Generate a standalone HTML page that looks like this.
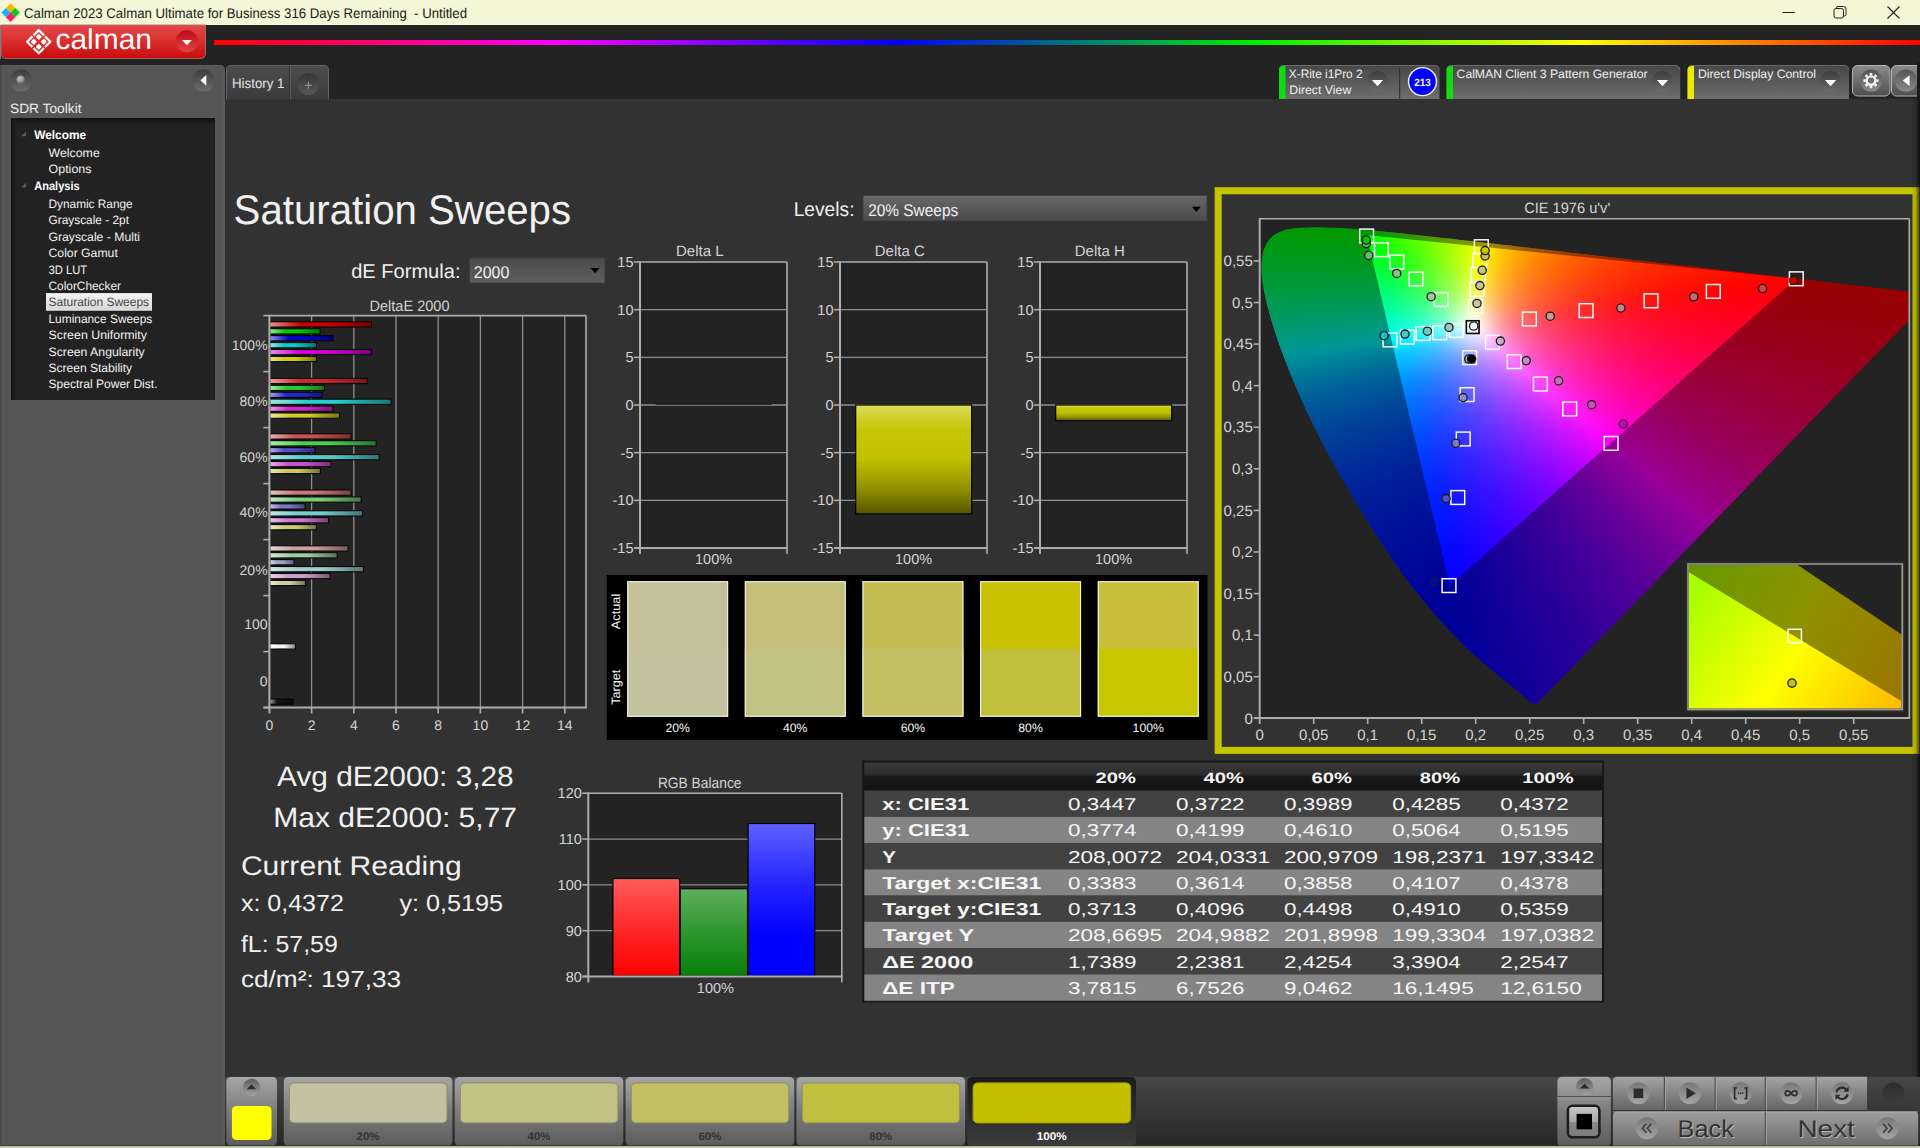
<!DOCTYPE html>
<html lang="en"><head><meta charset="utf-8"><title>Calman 2023 - Saturation Sweeps</title>
<style>html,body{margin:0;padding:0;background:#323232;overflow:hidden}body{width:1920px;height:1148px;font-family:"Liberation Sans",sans-serif}svg{display:block}</style></head>
<body>
<svg width="1920" height="1148" viewBox="0 0 1920 1148" font-family="'Liberation Sans', sans-serif" text-rendering="geometricPrecision"><defs><linearGradient id="gRed" x1="0" y1="0" x2="0" y2="1"><stop offset="0" stop-color="#e34848"/><stop offset="0.45" stop-color="#dc3030"/><stop offset="1" stop-color="#c90c0c"/></linearGradient><linearGradient id="gRedC" x1="0" y1="0" x2="0" y2="1"><stop offset="0" stop-color="#bd0a14"/><stop offset="1" stop-color="#e0444c"/></linearGradient><linearGradient id="gRain" x1="0" y1="0" x2="1" y2="0"><stop offset="0" stop-color="#ff0000"/><stop offset="0.2" stop-color="#ff00ff"/><stop offset="0.4" stop-color="#0000ff"/><stop offset="0.61" stop-color="#00f000"/><stop offset="0.8" stop-color="#ffff00"/><stop offset="1" stop-color="#ff0000"/></linearGradient><linearGradient id="gDkC" x1="0" y1="0" x2="0" y2="1"><stop offset="0" stop-color="#3d3d3d"/><stop offset="1" stop-color="#6c6c6c"/></linearGradient><radialGradient id="gDot" cx="0.4" cy="0.35" r="0.6"><stop offset="0" stop-color="#c4c4c4"/><stop offset="0.6" stop-color="#9a9a9a"/><stop offset="1" stop-color="#6a6a6a"/></radialGradient><linearGradient id="gTreeL" x1="0" y1="0" x2="1" y2="0"><stop offset="0" stop-color="#111"/><stop offset="1" stop-color="#222"/></linearGradient><linearGradient id="gTreeT" x1="0" y1="0" x2="0" y2="1"><stop offset="0" stop-color="#101010"/><stop offset="1" stop-color="#222"/></linearGradient><linearGradient id="gSel" x1="0" y1="0" x2="0" y2="1"><stop offset="0" stop-color="#f4f4f4"/><stop offset="1" stop-color="#d6d6d6"/></linearGradient><linearGradient id="gTab" x1="0" y1="0" x2="0" y2="1"><stop offset="0" stop-color="#4d4d4d"/><stop offset="1" stop-color="#3b3b3b"/></linearGradient><linearGradient id="gDkC2" x1="0" y1="0" x2="0" y2="1"><stop offset="0" stop-color="#353535"/><stop offset="1" stop-color="#585858"/></linearGradient><linearGradient id="gDev" x1="0" y1="0" x2="0" y2="1"><stop offset="0" stop-color="#474747"/><stop offset="1" stop-color="#6d6d6d"/></linearGradient><linearGradient id="gGear" x1="0" y1="0" x2="0" y2="1"><stop offset="0" stop-color="#8c8c8c"/><stop offset="1" stop-color="#4e4e4e"/></linearGradient><linearGradient id="gGearC" x1="0" y1="0" x2="0" y2="1"><stop offset="0" stop-color="#555"/><stop offset="1" stop-color="#8a8a8a"/></linearGradient><linearGradient id="gDD" x1="0" y1="0" x2="0" y2="1"><stop offset="0" stop-color="#4a4a4a"/><stop offset="1" stop-color="#5f5f5f"/></linearGradient><linearGradient id="gDD2" x1="0" y1="0" x2="0" y2="1"><stop offset="0" stop-color="#6a6a6a"/><stop offset="0.5" stop-color="#585858"/><stop offset="1" stop-color="#4b4b4b"/></linearGradient><linearGradient id="gBarH" x1="0" y1="0" x2="1" y2="0"><stop offset="0" stop-color="#fff" stop-opacity="0.55"/><stop offset="0.3" stop-color="#fff" stop-opacity="0"/><stop offset="0.55" stop-color="#000" stop-opacity="0"/><stop offset="1" stop-color="#000" stop-opacity="0.42"/></linearGradient><linearGradient id="gYBar" x1="0" y1="0" x2="0" y2="1"><stop offset="0" stop-color="#dcdc58"/><stop offset="0.22" stop-color="#c6c608"/><stop offset="0.5" stop-color="#c0c000"/><stop offset="0.78" stop-color="#8e8e00"/><stop offset="1" stop-color="#555400"/></linearGradient><clipPath id="cLoc"><polygon points="1536.41,704 1535.51,703.86 1534.64,703.77 1533.71,703.6 1532.64,703.21 1528.83,700.77 1524.01,696.88 1518.77,692.36 1513.7,688.08 1508.79,684.08 1503.9,680.08 1498.87,675.92 1493.56,671.44 1486.41,665.45 1478.86,659.11 1470.99,652.23 1462.93,644.59 1451.33,632.57 1439.01,618.96 1426.85,604.83 1415.75,591.27 1407.13,580.08 1399.24,569.18 1391.67,558.18 1383.98,546.71 1375.28,533.38 1366.58,519.57 1357.97,505.46 1349.52,491.24 1340.92,476.44 1332.39,461.4 1324.14,446.29 1316.36,431.26 1309.29,416.73 1302.59,402.17 1296.29,387.75 1290.44,373.67 1285.47,361.12 1280.82,348.74 1276.59,336.7 1272.85,325.12 1270.03,315.61 1267.52,306.38 1265.41,297.51 1263.75,289.04 1262.7,282.35 1261.92,275.92 1261.5,269.77 1261.55,263.92 1261.92,259.26 1262.57,254.79 1263.57,250.56 1265.02,246.66 1266.63,243.56 1268.55,240.65 1270.77,238.01 1273.28,235.7 1275.88,233.93 1278.76,232.42 1281.83,231.16 1284.99,230.11 1288.31,229.3 1291.78,228.76 1295.34,228.37 1298.92,228.05 1302.66,227.79 1306.46,227.64 1310.29,227.58 1314.11,227.54 1317.96,227.52 1321.8,227.55 1325.66,227.63 1329.55,227.73 1333.53,227.87 1337.54,228.04 1341.57,228.25 1345.64,228.49 1349.92,228.76 1354.23,229.06 1358.59,229.39 1362.99,229.74 1367.62,230.13 1372.31,230.55 1377.04,230.99 1381.83,231.45 1386.92,231.94 1392.06,232.46 1397.26,233 1402.54,233.55 1408.17,234.14 1413.88,234.75 1419.65,235.38 1425.5,236.02 1431.73,236.71 1438.04,237.42 1444.42,238.14 1450.89,238.87 1457.79,239.64 1464.78,240.43 1471.85,241.24 1479.01,242.05 1486.6,242.92 1494.28,243.8 1502.04,244.7 1509.9,245.61 1518.19,246.56 1526.57,247.53 1535.04,248.51 1543.59,249.5 1552.56,250.54 1561.61,251.58 1570.74,252.64 1579.93,253.7 1589.45,254.79 1599.06,255.9 1608.71,257 1618.38,258.12 1628.23,259.26 1638.13,260.41 1648.03,261.56 1657.87,262.7 1667.5,263.81 1677.08,264.92 1686.64,266.02 1696.16,267.12 1705.55,268.2 1714.93,269.29 1724.24,270.36 1733.42,271.41 1741.78,272.37 1749.88,273.3 1758.19,274.24 1767.17,275.28 1780.25,276.79 1794.53,278.44 1808.94,280.12 1822.4,281.68 1832.81,282.88 1842.79,284.02 1852.37,285.13 1861.58,286.19 1869.2,287.07 1876.57,287.92 1883.62,288.74 1890.26,289.51 1895.37,290.09 1900.25,290.65 1904.85,291.17 1909.14,291.67 1912.16,292.01 1914.98,292.34 1917.68,292.65 1920.36,292.97 1922.95,293.27 1925.56,293.57 1928.01,293.85 1930.11,294.09 1931.18,294.22 1932.11,294.33 1932.98,294.43 1933.89,294.53"/></clipPath><clipPath id="cPlot"><rect x="1260.7" y="219.5" width="647.8" height="497.5"/></clipPath><filter id="fB" x="-5%" y="-5%" width="110%" height="110%" color-interpolation-filters="sRGB"><feGaussianBlur stdDeviation="3.6"/></filter><linearGradient id="gIns" x1="1688" y1="600" x2="1880" y2="740" gradientUnits="userSpaceOnUse"><stop offset="0" stop-color="#a8ff00"/><stop offset="0.5" stop-color="#ffff00"/><stop offset="1" stop-color="#ffb800"/></linearGradient><clipPath id="cIns"><rect x="1688.8" y="565" width="212.8" height="143.6"/></clipPath><linearGradient id="gInsD" x1="1690" y1="566" x2="1900" y2="690" gradientUnits="userSpaceOnUse"><stop offset="0" stop-color="#669a00"/><stop offset="0.5" stop-color="#8e9200"/><stop offset="1" stop-color="#9a7600"/></linearGradient><linearGradient id="gR" x1="0" y1="0" x2="0" y2="1"><stop offset="0" stop-color="#ff5c5c"/><stop offset="0.5" stop-color="#ff2a2a"/><stop offset="1" stop-color="#ff0000"/></linearGradient><linearGradient id="gG" x1="0" y1="0" x2="0" y2="1"><stop offset="0" stop-color="#5eb05e"/><stop offset="0.5" stop-color="#2e962e"/><stop offset="1" stop-color="#088008"/></linearGradient><linearGradient id="gB" x1="0" y1="0" x2="0" y2="1"><stop offset="0" stop-color="#6060ff"/><stop offset="0.4" stop-color="#2424ff"/><stop offset="0.75" stop-color="#0000ff"/><stop offset="1" stop-color="#0000ff"/></linearGradient><linearGradient id="gTH" x1="0" y1="0" x2="0" y2="1"><stop offset="0" stop-color="#3c3c3c"/><stop offset="0.42" stop-color="#2c2c2c"/><stop offset="0.5" stop-color="#1a1a1a"/><stop offset="1" stop-color="#121212"/></linearGradient><linearGradient id="gBot" x1="0" y1="0" x2="0" y2="1"><stop offset="0" stop-color="#474747"/><stop offset="1" stop-color="#262626"/></linearGradient><linearGradient id="gBtn" x1="0" y1="0" x2="0" y2="1"><stop offset="0" stop-color="#a6a6a6"/><stop offset="0.5" stop-color="#7c7c7c"/><stop offset="1" stop-color="#5c5c5c"/></linearGradient><linearGradient id="gBtnS" x1="0" y1="0" x2="0" y2="1"><stop offset="0" stop-color="#1b1b1b"/><stop offset="1" stop-color="#3b3b3b"/></linearGradient><linearGradient id="gCup" x1="0" y1="0" x2="0" y2="1"><stop offset="0" stop-color="#5e5e5e"/><stop offset="1" stop-color="#a0a0a0"/></linearGradient><linearGradient id="gStop" x1="0" y1="0" x2="0" y2="1"><stop offset="0" stop-color="#c8c8c8"/><stop offset="0.5" stop-color="#a8a8a8"/><stop offset="0.52" stop-color="#8a8a8a"/><stop offset="1" stop-color="#7a7a7a"/></linearGradient><linearGradient id="gBtn2" x1="0" y1="0" x2="0" y2="1"><stop offset="0" stop-color="#a4a4a4"/><stop offset="1" stop-color="#646464"/></linearGradient><linearGradient id="gIc" x1="0" y1="0" x2="0" y2="1"><stop offset="0" stop-color="#787878"/><stop offset="1" stop-color="#a4a4a4"/></linearGradient><linearGradient id="gDkBtn" x1="0" y1="0" x2="0" y2="1"><stop offset="0" stop-color="#2e2e2e"/><stop offset="1" stop-color="#3c3c3c"/></linearGradient><linearGradient id="gNav" x1="0" y1="0" x2="0" y2="1"><stop offset="0" stop-color="#9e9e9e"/><stop offset="1" stop-color="#6c6c6c"/></linearGradient><linearGradient id="gEdge" x1="0" y1="0" x2="1" y2="0"><stop offset="0" stop-color="#000" stop-opacity="0"/><stop offset="0.5" stop-color="#000" stop-opacity="0.12"/><stop offset="1" stop-color="#000" stop-opacity="0.7"/></linearGradient></defs>
<rect x="0" y="0" width="1920" height="1148" fill="#323232"/>
<rect x="0" y="25" width="1920" height="74" fill="#232323"/>
<rect x="0" y="0" width="1920" height="25" fill="#f3f6d7"/>
<path d="M10.6 3.4L15.2 8L10.6 12.6L6 8Z" fill="#ffb000" stroke="#ffd040" stroke-width="0.8" stroke-linejoin="round"/>
<path d="M6 8L10.6 12.6L6 17.2L1.4 12.6Z" fill="#18b0ff" stroke="#60d0ff" stroke-width="0.8" stroke-linejoin="round"/>
<path d="M15.2 8L19.8 12.6L15.2 17.2L10.6 12.6Z" fill="#10c818" stroke="#50e050" stroke-width="0.8" stroke-linejoin="round"/>
<path d="M10.6 12.6L15.2 17.2L10.6 21.8L6 17.2Z" fill="#f02060" stroke="#ff5080" stroke-width="0.8" stroke-linejoin="round"/>
<text x="24" y="17.8" font-size="14" fill="#1a1a1a" textLength="443" lengthAdjust="spacingAndGlyphs" xml:space="preserve">Calman 2023 Calman Ultimate for Business 316 Days Remaining  - Untitled</text>
<line x1="1782.5" y1="12.5" x2="1795" y2="12.5" stroke="#222" stroke-width="1"/>
<rect x="1834" y="8.5" width="9.5" height="9.5" rx="2" fill="none" stroke="#222" stroke-width="1"/>
<path d="M1836.5 8.5V8Q1836.5 6.5 1838 6.5H1843.5Q1846 6.5 1846 9V14.5Q1846 16 1844.5 16H1843.5" fill="none" stroke="#222" stroke-width="1"/>
<path d="M1887.5 6.5L1899.5 18.5M1899.5 6.5L1887.5 18.5" stroke="#222" stroke-width="1.1" fill="none"/>
<path d="M1 25H205.500V53Q205.500 58.500 200 58.500H6.500Q1 58.500 1 53Z" fill="url(#gRed)" stroke="#a07070" stroke-width="0.9"/>
<rect x="0" y="25" width="0.8" height="34" fill="#8a8a8a"/>
<g transform="translate(38.750 41.700) rotate(45)"><g fill="#fff"><rect x="-5.700" y="-5.700" width="4.500" height="4.500" rx="0.700"/><rect x="1.300" y="-5.700" width="4.500" height="4.500" rx="0.700"/><rect x="-5.700" y="1.300" width="4.500" height="4.500" rx="0.700"/><rect x="1.300" y="1.300" width="4.500" height="4.500" rx="0.700"/></g><path d="M-8.200 -0.700V-8.200H-0.700M0.700 -8.200H8.200V-0.700M8.200 0.700V8.200H0.700M-0.700 8.200H-8.200V0.700" fill="none" stroke="#fff" stroke-width="2.300" stroke-linejoin="round"/></g>
<text x="55.5" y="48.8" font-size="29" fill="#fff" textLength="96.5" lengthAdjust="spacingAndGlyphs">calman</text>
<circle cx="186.900" cy="41.300" r="11" fill="url(#gRedC)"/>
<path d="M181.900 40H191.900L186.900 45.300Z" fill="#fff"/>
<rect x="214" y="40" width="1706" height="5" fill="url(#gRain)"/>
<path d="M0 65H219.500Q225 65 225 70.500V1146H0Z" fill="#555555"/>
<rect x="223" y="72" width="2" height="1074" fill="#5a5a5a"/>
<path d="M0 65.500H219.500Q224.500 65.500 224.500 70.500" fill="none" stroke="#5d5d5d" stroke-width="1"/>
<rect x="0" y="65" width="1.5" height="1081" fill="#474747"/>
<circle cx="21.200" cy="80.600" r="11" fill="url(#gDkC)"/>
<circle cx="20.700" cy="79.700" r="4.300" fill="url(#gDot)"/>
<circle cx="203.400" cy="80.600" r="11" fill="url(#gDkC)"/>
<path d="M206.300 75V85.700L200.400 80.350Z" fill="#fff"/>
<text x="10" y="113" font-size="13.6" fill="#eee" textLength="71.5" lengthAdjust="spacingAndGlyphs">SDR Toolkit</text>
<rect x="11" y="118" width="204" height="282" fill="#222"/>
<rect x="11" y="118" width="204" height="7" fill="url(#gTreeT)"/>
<rect x="11" y="118" width="6" height="282" fill="url(#gTreeL)" opacity="0.8"/>
<text x="34.2" y="138.6" font-size="12.2" fill="#fff" font-weight="bold" textLength="52" lengthAdjust="spacingAndGlyphs">Welcome</text>
<path d="M26 131.4V136.2H21.2Z" fill="#5a5a5a"/>
<text x="48.5" y="156.7" font-size="12.2" fill="#f2f2f2" textLength="51.3" lengthAdjust="spacingAndGlyphs">Welcome</text>
<text x="48.5" y="173.2" font-size="12.2" fill="#f2f2f2" textLength="43" lengthAdjust="spacingAndGlyphs">Options</text>
<text x="34.2" y="189.9" font-size="12.2" fill="#fff" font-weight="bold" textLength="45.5" lengthAdjust="spacingAndGlyphs">Analysis</text>
<path d="M26 182.7V187.5H21.2Z" fill="#5a5a5a"/>
<text x="48.5" y="207.7" font-size="12.2" fill="#f2f2f2" textLength="84.2" lengthAdjust="spacingAndGlyphs">Dynamic Range</text>
<text x="48.5" y="224.2" font-size="12.2" fill="#f2f2f2" textLength="80.5" lengthAdjust="spacingAndGlyphs">Grayscale - 2pt</text>
<text x="48.5" y="240.8" font-size="12.2" fill="#f2f2f2" textLength="91.5" lengthAdjust="spacingAndGlyphs">Grayscale - Multi</text>
<text x="48.5" y="257" font-size="12.2" fill="#f2f2f2" textLength="69.3" lengthAdjust="spacingAndGlyphs">Color Gamut</text>
<text x="48.5" y="273.7" font-size="12.2" fill="#f2f2f2" textLength="38.6" lengthAdjust="spacingAndGlyphs">3D LUT</text>
<text x="48.5" y="290.4" font-size="12.2" fill="#f2f2f2" textLength="72.5" lengthAdjust="spacingAndGlyphs">ColorChecker</text>
<rect x="46.4" y="293.6" width="105.2" height="16.6" fill="url(#gSel)" stroke="#fafafa" stroke-width="0.8"/>
<text x="48.5" y="306.4" font-size="12.2" fill="#4a4a4a" textLength="100.6" lengthAdjust="spacingAndGlyphs">Saturation Sweeps</text>
<text x="48.5" y="322.9" font-size="12.2" fill="#f2f2f2" textLength="103.8" lengthAdjust="spacingAndGlyphs">Luminance Sweeps</text>
<text x="48.5" y="339.2" font-size="12.2" fill="#f2f2f2" textLength="98.5" lengthAdjust="spacingAndGlyphs">Screen Uniformity</text>
<text x="48.5" y="355.9" font-size="12.2" fill="#f2f2f2" textLength="96.2" lengthAdjust="spacingAndGlyphs">Screen Angularity</text>
<text x="48.5" y="371.7" font-size="12.2" fill="#f2f2f2" textLength="83.6" lengthAdjust="spacingAndGlyphs">Screen Stability</text>
<text x="48.5" y="388" font-size="12.2" fill="#f2f2f2" textLength="109" lengthAdjust="spacingAndGlyphs">Spectral Power Dist.</text>
<path d="M226.500 99.400V70Q226.500 65.500 231 65.500H324Q328.500 65.500 328.500 70V99.400" fill="url(#gTab)" stroke="#646464" stroke-width="1"/>
<line x1="290.5" y1="66" x2="290.5" y2="99" stroke="#5e5e5e" stroke-width="1"/>
<line x1="289.5" y1="66" x2="289.5" y2="99" stroke="#333" stroke-width="1"/>
<text x="232" y="88.2" font-size="13.8" fill="#e4e4e4" textLength="52.5" lengthAdjust="spacingAndGlyphs">History 1</text>
<circle cx="308.400" cy="84" r="11" fill="url(#gDkC2)"/>
<path d="M305 85.300H312M308.500 81.800V88.800" stroke="#9a9a9a" stroke-width="1" fill="none"/>
<path d="M1279 99V70Q1279 65 1284 65H1434.5Q1439.5 65 1439.5 70V99Z" fill="url(#gDev)"/>
<path d="M1279.5 70Q1279.5 65.500 1284 65.500H1434.5Q1439 65.500 1439 70" fill="none" stroke="#6a6a6a" stroke-width="1"/>
<path d="M1279 99V70Q1279 66 1283.5 66H1285.5V99Z" fill="#0fdc0f"/>
<text x="1288.8" y="77.8" font-size="12.2" fill="#f0f0f0" textLength="73.8" lengthAdjust="spacingAndGlyphs">X-Rite i1Pro 2</text>
<text x="1289.3" y="94.4" font-size="12.2" fill="#f0f0f0" textLength="62" lengthAdjust="spacingAndGlyphs">Direct View</text>
<circle cx="1377.5" cy="81.6" r="10.600" fill="url(#gDkC)"/>
<path d="M1371.9 79.9H1383.1L1377.5 86.2Z" fill="#fff"/>
<line x1="1399.6" y1="68" x2="1399.6" y2="99" stroke="#333" stroke-width="1.2"/>
<circle cx="1422.500" cy="81.600" r="14" fill="#0000ff" stroke="#f4f4f4" stroke-width="1.4"/>
<text x="1422.5" y="85.6" font-size="10.5" fill="#fff" text-anchor="middle" font-weight="bold" textLength="16.5" lengthAdjust="spacingAndGlyphs">213</text>
<path d="M1446.5 99V70Q1446.5 65 1451.5 65H1675.3Q1680.3 65 1680.3 70V99Z" fill="url(#gDev)"/>
<path d="M1447 70Q1447 65.500 1451.5 65.500H1675.3Q1679.8 65.500 1679.8 70" fill="none" stroke="#6a6a6a" stroke-width="1"/>
<path d="M1446.5 99V70Q1446.5 66 1451 66H1453V99Z" fill="#0fdc0f"/>
<text x="1456.6" y="77.8" font-size="12.2" fill="#f0f0f0" textLength="190.9" lengthAdjust="spacingAndGlyphs">CalMAN Client 3 Pattern Generator</text>
<circle cx="1662.5" cy="81.6" r="10.600" fill="url(#gDkC)"/>
<path d="M1656.9 79.9H1668.1L1662.5 86.2Z" fill="#fff"/>
<path d="M1687.5 99V70Q1687.5 65 1692.5 65H1844Q1849 65 1849 70V99Z" fill="url(#gDev)"/>
<path d="M1688 70Q1688 65.500 1692.5 65.500H1844Q1848.5 65.500 1848.5 70" fill="none" stroke="#6a6a6a" stroke-width="1"/>
<path d="M1687.5 99V70Q1687.5 66 1692 66H1694V99Z" fill="#eaea00"/>
<text x="1698" y="77.8" font-size="12.2" fill="#f0f0f0" textLength="118" lengthAdjust="spacingAndGlyphs">Direct Display Control</text>
<circle cx="1830.6" cy="81.6" r="10.600" fill="url(#gDkC)"/>
<path d="M1825 79.9H1836.2L1830.6 86.2Z" fill="#fff"/>
<rect x="1852.500" y="65.500" width="37.500" height="30.500" rx="5" fill="url(#gGear)" stroke="#b4b4b4" stroke-width="1"/>
<rect x="1891.500" y="65.500" width="37.500" height="30.500" rx="5" fill="url(#gGear)" stroke="#b4b4b4" stroke-width="1"/>
<circle cx="1871" cy="80.600" r="11" fill="url(#gGearC)"/>
<circle cx="1906" cy="80.600" r="11" fill="url(#gGearC)"/>
<g transform="translate(1871 80.600)" fill="none" stroke="#f4f4f4"><circle r="4.300" stroke-width="2.200"/><line x1="0" y1="-5.200" x2="0" y2="-7.600" stroke-width="2.600" transform="rotate(0)"/><line x1="0" y1="-5.200" x2="0" y2="-7.600" stroke-width="2.600" transform="rotate(45)"/><line x1="0" y1="-5.200" x2="0" y2="-7.600" stroke-width="2.600" transform="rotate(90)"/><line x1="0" y1="-5.200" x2="0" y2="-7.600" stroke-width="2.600" transform="rotate(135)"/><line x1="0" y1="-5.200" x2="0" y2="-7.600" stroke-width="2.600" transform="rotate(180)"/><line x1="0" y1="-5.200" x2="0" y2="-7.600" stroke-width="2.600" transform="rotate(225)"/><line x1="0" y1="-5.200" x2="0" y2="-7.600" stroke-width="2.600" transform="rotate(270)"/><line x1="0" y1="-5.200" x2="0" y2="-7.600" stroke-width="2.600" transform="rotate(315)"/></g>
<path d="M1909.600 75.200V86L1902.800 80.600Z" fill="#fff"/>
<text x="233.6" y="223.8" font-size="41.5" fill="#f0f0f0" textLength="337.5" lengthAdjust="spacingAndGlyphs">Saturation Sweeps</text>
<text x="351.2" y="278" font-size="20" fill="#f0f0f0" textLength="109.3" lengthAdjust="spacingAndGlyphs">dE Formula:</text>
<rect x="469.500" y="258" width="135.500" height="25" fill="url(#gDD)" stroke="#3c3c3c" stroke-width="1"/>
<text x="473.8" y="278" font-size="17" fill="#f0f0f0" textLength="35.5" lengthAdjust="spacingAndGlyphs">2000</text>
<path d="M590.700 268H599.500L595.100 273.200Z" fill="#000"/>
<text x="793.7" y="216" font-size="20" fill="#f0f0f0" textLength="60.8" lengthAdjust="spacingAndGlyphs">Levels:</text>
<rect x="863" y="195.500" width="344" height="25.500" fill="url(#gDD2)" stroke="#3c3c3c" stroke-width="1"/>
<text x="868.2" y="216" font-size="17" fill="#f0f0f0" textLength="90" lengthAdjust="spacingAndGlyphs">20% Sweeps</text>
<path d="M1192 206.800H1200.800L1196.400 212Z" fill="#000"/>
<text x="409.5" y="310.5" font-size="15" fill="#d4d4d4" text-anchor="middle" textLength="80" lengthAdjust="spacingAndGlyphs">DeltaE 2000</text>
<rect x="269.4" y="315.6" width="316.6" height="392" fill="#232323"/>
<line x1="311.6" y1="315.6" x2="311.6" y2="707.6" stroke="#8e8e8e" stroke-width="1.3"/>
<line x1="311.6" y1="707.6" x2="311.6" y2="713.6" stroke="#adadad" stroke-width="1.6"/>
<text x="311.6" y="730" font-size="14" fill="#d4d4d4" text-anchor="middle">2</text>
<line x1="353.8" y1="315.6" x2="353.8" y2="707.6" stroke="#8e8e8e" stroke-width="1.3"/>
<line x1="353.8" y1="707.6" x2="353.8" y2="713.6" stroke="#adadad" stroke-width="1.6"/>
<text x="353.8" y="730" font-size="14" fill="#d4d4d4" text-anchor="middle">4</text>
<line x1="396" y1="315.6" x2="396" y2="707.6" stroke="#8e8e8e" stroke-width="1.3"/>
<line x1="396" y1="707.6" x2="396" y2="713.6" stroke="#adadad" stroke-width="1.6"/>
<text x="396" y="730" font-size="14" fill="#d4d4d4" text-anchor="middle">6</text>
<line x1="438.2" y1="315.6" x2="438.2" y2="707.6" stroke="#8e8e8e" stroke-width="1.3"/>
<line x1="438.2" y1="707.6" x2="438.2" y2="713.6" stroke="#adadad" stroke-width="1.6"/>
<text x="438.2" y="730" font-size="14" fill="#d4d4d4" text-anchor="middle">8</text>
<line x1="480.4" y1="315.6" x2="480.4" y2="707.6" stroke="#8e8e8e" stroke-width="1.3"/>
<line x1="480.4" y1="707.6" x2="480.4" y2="713.6" stroke="#adadad" stroke-width="1.6"/>
<text x="480.4" y="730" font-size="14" fill="#d4d4d4" text-anchor="middle">10</text>
<line x1="522.6" y1="315.6" x2="522.6" y2="707.6" stroke="#8e8e8e" stroke-width="1.3"/>
<line x1="522.6" y1="707.6" x2="522.6" y2="713.6" stroke="#adadad" stroke-width="1.6"/>
<text x="522.6" y="730" font-size="14" fill="#d4d4d4" text-anchor="middle">12</text>
<line x1="564.8" y1="315.6" x2="564.8" y2="707.6" stroke="#8e8e8e" stroke-width="1.3"/>
<line x1="564.8" y1="707.6" x2="564.8" y2="713.6" stroke="#adadad" stroke-width="1.6"/>
<text x="564.8" y="730" font-size="14" fill="#d4d4d4" text-anchor="middle">14</text>
<text x="269.4" y="730" font-size="14" fill="#d4d4d4" text-anchor="middle">0</text>
<rect x="270" y="321.8" width="101.4" height="5.2" fill="#cd0000" stroke="#050505" stroke-width="1.1"/>
<rect x="270.5" y="322.3" width="100.4" height="4.2" fill="url(#gBarH)"/>
<rect x="270" y="328.72" width="50" height="5.2" fill="#00cd00" stroke="#050505" stroke-width="1.1"/>
<rect x="270.5" y="329.22" width="49" height="4.2" fill="url(#gBarH)"/>
<rect x="270" y="335.64" width="63" height="5.2" fill="#0000cd" stroke="#050505" stroke-width="1.1"/>
<rect x="270.5" y="336.14" width="62" height="4.2" fill="url(#gBarH)"/>
<rect x="270" y="342.56" width="46.4" height="5.2" fill="#00cdcd" stroke="#050505" stroke-width="1.1"/>
<rect x="270.5" y="343.06" width="45.4" height="4.2" fill="url(#gBarH)"/>
<rect x="270" y="349.48" width="101.4" height="5.2" fill="#cd00cd" stroke="#050505" stroke-width="1.1"/>
<rect x="270.5" y="349.98" width="100.4" height="4.2" fill="url(#gBarH)"/>
<rect x="270" y="356.4" width="46.4" height="5.2" fill="#cdcd00" stroke="#050505" stroke-width="1.1"/>
<rect x="270.5" y="356.9" width="45.4" height="4.2" fill="url(#gBarH)"/>
<rect x="270" y="378.4" width="97.4" height="5.2" fill="#cd2828" stroke="#050505" stroke-width="1.1"/>
<rect x="270.5" y="378.9" width="96.4" height="4.2" fill="url(#gBarH)"/>
<rect x="270" y="385.32" width="54.4" height="5.2" fill="#28cd28" stroke="#050505" stroke-width="1.1"/>
<rect x="270.5" y="385.82" width="53.4" height="4.2" fill="url(#gBarH)"/>
<rect x="270" y="392.24" width="52" height="5.2" fill="#2828cd" stroke="#050505" stroke-width="1.1"/>
<rect x="270.5" y="392.74" width="51" height="4.2" fill="url(#gBarH)"/>
<rect x="270" y="399.16" width="121" height="5.2" fill="#28cdcd" stroke="#050505" stroke-width="1.1"/>
<rect x="270.5" y="399.66" width="120" height="4.2" fill="url(#gBarH)"/>
<rect x="270" y="406.08" width="63" height="5.2" fill="#cd28cd" stroke="#050505" stroke-width="1.1"/>
<rect x="270.5" y="406.58" width="62" height="4.2" fill="url(#gBarH)"/>
<rect x="270" y="413" width="69.6" height="5.2" fill="#cdcd28" stroke="#050505" stroke-width="1.1"/>
<rect x="270.5" y="413.5" width="68.6" height="4.2" fill="url(#gBarH)"/>
<rect x="270" y="433.8" width="81" height="5.2" fill="#cd5050" stroke="#050505" stroke-width="1.1"/>
<rect x="270.5" y="434.3" width="80" height="4.2" fill="url(#gBarH)"/>
<rect x="270" y="440.72" width="106" height="5.2" fill="#50cd50" stroke="#050505" stroke-width="1.1"/>
<rect x="270.5" y="441.22" width="105" height="4.2" fill="url(#gBarH)"/>
<rect x="270" y="447.64" width="45" height="5.2" fill="#5050cd" stroke="#050505" stroke-width="1.1"/>
<rect x="270.5" y="448.14" width="44" height="4.2" fill="url(#gBarH)"/>
<rect x="270" y="454.56" width="109" height="5.2" fill="#50cdcd" stroke="#050505" stroke-width="1.1"/>
<rect x="270.5" y="455.06" width="108" height="4.2" fill="url(#gBarH)"/>
<rect x="270" y="461.48" width="61" height="5.2" fill="#cd50cd" stroke="#050505" stroke-width="1.1"/>
<rect x="270.5" y="461.98" width="60" height="4.2" fill="url(#gBarH)"/>
<rect x="270" y="468.4" width="50.4" height="5.2" fill="#cdcd50" stroke="#050505" stroke-width="1.1"/>
<rect x="270.5" y="468.9" width="49.4" height="4.2" fill="url(#gBarH)"/>
<rect x="270" y="490" width="81" height="5.2" fill="#cd7878" stroke="#050505" stroke-width="1.1"/>
<rect x="270.5" y="490.5" width="80" height="4.2" fill="url(#gBarH)"/>
<rect x="270" y="496.92" width="91" height="5.2" fill="#78cd78" stroke="#050505" stroke-width="1.1"/>
<rect x="270.5" y="497.42" width="90" height="4.2" fill="url(#gBarH)"/>
<rect x="270" y="503.84" width="35" height="5.2" fill="#7878cd" stroke="#050505" stroke-width="1.1"/>
<rect x="270.5" y="504.34" width="34" height="4.2" fill="url(#gBarH)"/>
<rect x="270" y="510.76" width="92.4" height="5.2" fill="#78cdcd" stroke="#050505" stroke-width="1.1"/>
<rect x="270.5" y="511.26" width="91.4" height="4.2" fill="url(#gBarH)"/>
<rect x="270" y="517.68" width="58.6" height="5.2" fill="#cd78cd" stroke="#050505" stroke-width="1.1"/>
<rect x="270.5" y="518.18" width="57.6" height="4.2" fill="url(#gBarH)"/>
<rect x="270" y="524.6" width="46.4" height="5.2" fill="#cdcd78" stroke="#050505" stroke-width="1.1"/>
<rect x="270.5" y="525.1" width="45.4" height="4.2" fill="url(#gBarH)"/>
<rect x="270" y="545.8" width="78" height="5.2" fill="#cda0a0" stroke="#050505" stroke-width="1.1"/>
<rect x="270.5" y="546.3" width="77" height="4.2" fill="url(#gBarH)"/>
<rect x="270" y="552.72" width="67" height="5.2" fill="#a0cda0" stroke="#050505" stroke-width="1.1"/>
<rect x="270.5" y="553.22" width="66" height="4.2" fill="url(#gBarH)"/>
<rect x="270" y="559.64" width="24" height="5.2" fill="#a0a0cd" stroke="#050505" stroke-width="1.1"/>
<rect x="270.5" y="560.14" width="23" height="4.2" fill="url(#gBarH)"/>
<rect x="270" y="566.56" width="93.4" height="5.2" fill="#a0cdcd" stroke="#050505" stroke-width="1.1"/>
<rect x="270.5" y="567.06" width="92.4" height="4.2" fill="url(#gBarH)"/>
<rect x="270" y="573.48" width="60" height="5.2" fill="#cda0cd" stroke="#050505" stroke-width="1.1"/>
<rect x="270.5" y="573.98" width="59" height="4.2" fill="url(#gBarH)"/>
<rect x="270" y="580.4" width="35.5" height="5.2" fill="#cdcda0" stroke="#050505" stroke-width="1.1"/>
<rect x="270.5" y="580.9" width="34.5" height="4.2" fill="url(#gBarH)"/>
<rect x="270" y="643.8" width="25.4" height="5.2" fill="#f4f4f4" stroke="#050505" stroke-width="1.1"/>
<rect x="270.5" y="644.3" width="24.4" height="4.2" fill="url(#gBarH)"/>
<rect x="270" y="699" width="23" height="5.2" fill="#101010" stroke="#050505" stroke-width="1.1"/>
<rect x="270.5" y="699.5" width="22" height="4.2" fill="url(#gBarH)"/>
<line x1="269.4" y1="315.6" x2="586" y2="315.6" stroke="#adadad" stroke-width="1.6"/>
<line x1="586" y1="315.6" x2="586" y2="707.6" stroke="#adadad" stroke-width="1.6"/>
<line x1="269.4" y1="314.8" x2="269.4" y2="713.6" stroke="#adadad" stroke-width="2"/>
<line x1="263.4" y1="707.6" x2="586.8" y2="707.6" stroke="#adadad" stroke-width="2"/>
<line x1="263.4" y1="315.6" x2="269.4" y2="315.6" stroke="#adadad" stroke-width="1.6"/>
<line x1="263.4" y1="371.6" x2="269.4" y2="371.6" stroke="#adadad" stroke-width="1.6"/>
<line x1="263.4" y1="427.6" x2="269.4" y2="427.6" stroke="#adadad" stroke-width="1.6"/>
<line x1="263.4" y1="483.6" x2="269.4" y2="483.6" stroke="#adadad" stroke-width="1.6"/>
<line x1="263.4" y1="539.6" x2="269.4" y2="539.6" stroke="#adadad" stroke-width="1.6"/>
<line x1="263.4" y1="595.6" x2="269.4" y2="595.6" stroke="#adadad" stroke-width="1.6"/>
<line x1="263.4" y1="651.6" x2="269.4" y2="651.6" stroke="#adadad" stroke-width="1.6"/>
<line x1="263.4" y1="707.6" x2="269.4" y2="707.6" stroke="#adadad" stroke-width="1.6"/>
<text x="267.6" y="350" font-size="14" fill="#d4d4d4" text-anchor="end">100%</text>
<text x="267.6" y="405.6" font-size="14" fill="#d4d4d4" text-anchor="end">80%</text>
<text x="267.6" y="461.6" font-size="14" fill="#d4d4d4" text-anchor="end">60%</text>
<text x="267.6" y="517" font-size="14" fill="#d4d4d4" text-anchor="end">40%</text>
<text x="267.6" y="574.6" font-size="14" fill="#d4d4d4" text-anchor="end">20%</text>
<text x="267.6" y="629.4" font-size="14" fill="#d4d4d4" text-anchor="end">100</text>
<text x="267.6" y="686" font-size="14" fill="#d4d4d4" text-anchor="end">0</text>
<rect x="640" y="262" width="147" height="286" fill="#232323"/>
<line x1="634" y1="262" x2="640" y2="262" stroke="#adadad" stroke-width="1.6"/>
<text x="633.5" y="267" font-size="14.5" fill="#d4d4d4" text-anchor="end">15</text>
<line x1="640" y1="309.67" x2="787" y2="309.67" stroke="#8e8e8e" stroke-width="1.3"/>
<line x1="634" y1="309.67" x2="640" y2="309.67" stroke="#adadad" stroke-width="1.6"/>
<text x="633.5" y="314.67" font-size="14.5" fill="#d4d4d4" text-anchor="end">10</text>
<line x1="640" y1="357.33" x2="787" y2="357.33" stroke="#8e8e8e" stroke-width="1.3"/>
<line x1="634" y1="357.33" x2="640" y2="357.33" stroke="#adadad" stroke-width="1.6"/>
<text x="633.5" y="362.33" font-size="14.5" fill="#d4d4d4" text-anchor="end">5</text>
<line x1="640" y1="405" x2="787" y2="405" stroke="#8e8e8e" stroke-width="1.3"/>
<line x1="634" y1="405" x2="640" y2="405" stroke="#adadad" stroke-width="1.6"/>
<text x="633.5" y="410" font-size="14.5" fill="#d4d4d4" text-anchor="end">0</text>
<line x1="640" y1="452.67" x2="787" y2="452.67" stroke="#8e8e8e" stroke-width="1.3"/>
<line x1="634" y1="452.67" x2="640" y2="452.67" stroke="#adadad" stroke-width="1.6"/>
<text x="633.5" y="457.67" font-size="14.5" fill="#d4d4d4" text-anchor="end">-5</text>
<line x1="640" y1="500.33" x2="787" y2="500.33" stroke="#8e8e8e" stroke-width="1.3"/>
<line x1="634" y1="500.33" x2="640" y2="500.33" stroke="#adadad" stroke-width="1.6"/>
<text x="633.5" y="505.33" font-size="14.5" fill="#d4d4d4" text-anchor="end">-10</text>
<line x1="634" y1="548" x2="640" y2="548" stroke="#adadad" stroke-width="1.6"/>
<text x="633.5" y="553" font-size="14.5" fill="#d4d4d4" text-anchor="end">-15</text>
<line x1="655.7" y1="404.2" x2="771.7" y2="404.2" stroke="#000" stroke-width="0.9"/>
<line x1="640" y1="262" x2="787" y2="262" stroke="#adadad" stroke-width="1.6"/>
<line x1="787" y1="262" x2="787" y2="554" stroke="#adadad" stroke-width="1.6"/>
<line x1="640" y1="261.2" x2="640" y2="554" stroke="#adadad" stroke-width="2"/>
<line x1="634" y1="548" x2="787.8" y2="548" stroke="#adadad" stroke-width="2"/>
<text x="699.8" y="255.7" font-size="15" fill="#d4d4d4" text-anchor="middle">Delta L</text>
<text x="713.6" y="564.2" font-size="14.5" fill="#d4d4d4" text-anchor="middle">100%</text>
<rect x="840" y="262" width="147" height="286" fill="#232323"/>
<line x1="834" y1="262" x2="840" y2="262" stroke="#adadad" stroke-width="1.6"/>
<text x="833.5" y="267" font-size="14.5" fill="#d4d4d4" text-anchor="end">15</text>
<line x1="840" y1="309.67" x2="987" y2="309.67" stroke="#8e8e8e" stroke-width="1.3"/>
<line x1="834" y1="309.67" x2="840" y2="309.67" stroke="#adadad" stroke-width="1.6"/>
<text x="833.5" y="314.67" font-size="14.5" fill="#d4d4d4" text-anchor="end">10</text>
<line x1="840" y1="357.33" x2="987" y2="357.33" stroke="#8e8e8e" stroke-width="1.3"/>
<line x1="834" y1="357.33" x2="840" y2="357.33" stroke="#adadad" stroke-width="1.6"/>
<text x="833.5" y="362.33" font-size="14.5" fill="#d4d4d4" text-anchor="end">5</text>
<line x1="840" y1="405" x2="987" y2="405" stroke="#8e8e8e" stroke-width="1.3"/>
<line x1="834" y1="405" x2="840" y2="405" stroke="#adadad" stroke-width="1.6"/>
<text x="833.5" y="410" font-size="14.5" fill="#d4d4d4" text-anchor="end">0</text>
<line x1="840" y1="452.67" x2="987" y2="452.67" stroke="#8e8e8e" stroke-width="1.3"/>
<line x1="834" y1="452.67" x2="840" y2="452.67" stroke="#adadad" stroke-width="1.6"/>
<text x="833.5" y="457.67" font-size="14.5" fill="#d4d4d4" text-anchor="end">-5</text>
<line x1="840" y1="500.33" x2="987" y2="500.33" stroke="#8e8e8e" stroke-width="1.3"/>
<line x1="834" y1="500.33" x2="840" y2="500.33" stroke="#adadad" stroke-width="1.6"/>
<text x="833.5" y="505.33" font-size="14.5" fill="#d4d4d4" text-anchor="end">-10</text>
<line x1="834" y1="548" x2="840" y2="548" stroke="#adadad" stroke-width="1.6"/>
<text x="833.5" y="553" font-size="14.5" fill="#d4d4d4" text-anchor="end">-15</text>
<rect x="855.7" y="405" width="116" height="108.9" fill="url(#gYBar)" stroke="#000" stroke-width="1.2"/>
<line x1="840" y1="262" x2="987" y2="262" stroke="#adadad" stroke-width="1.6"/>
<line x1="987" y1="262" x2="987" y2="554" stroke="#adadad" stroke-width="1.6"/>
<line x1="840" y1="261.2" x2="840" y2="554" stroke="#adadad" stroke-width="2"/>
<line x1="834" y1="548" x2="987.8" y2="548" stroke="#adadad" stroke-width="2"/>
<text x="899.8" y="255.7" font-size="15" fill="#d4d4d4" text-anchor="middle">Delta C</text>
<text x="913.6" y="564.2" font-size="14.5" fill="#d4d4d4" text-anchor="middle">100%</text>
<rect x="1040" y="262" width="147" height="286" fill="#232323"/>
<line x1="1034" y1="262" x2="1040" y2="262" stroke="#adadad" stroke-width="1.6"/>
<text x="1033.5" y="267" font-size="14.5" fill="#d4d4d4" text-anchor="end">15</text>
<line x1="1040" y1="309.67" x2="1187" y2="309.67" stroke="#8e8e8e" stroke-width="1.3"/>
<line x1="1034" y1="309.67" x2="1040" y2="309.67" stroke="#adadad" stroke-width="1.6"/>
<text x="1033.5" y="314.67" font-size="14.5" fill="#d4d4d4" text-anchor="end">10</text>
<line x1="1040" y1="357.33" x2="1187" y2="357.33" stroke="#8e8e8e" stroke-width="1.3"/>
<line x1="1034" y1="357.33" x2="1040" y2="357.33" stroke="#adadad" stroke-width="1.6"/>
<text x="1033.5" y="362.33" font-size="14.5" fill="#d4d4d4" text-anchor="end">5</text>
<line x1="1040" y1="405" x2="1187" y2="405" stroke="#8e8e8e" stroke-width="1.3"/>
<line x1="1034" y1="405" x2="1040" y2="405" stroke="#adadad" stroke-width="1.6"/>
<text x="1033.5" y="410" font-size="14.5" fill="#d4d4d4" text-anchor="end">0</text>
<line x1="1040" y1="452.67" x2="1187" y2="452.67" stroke="#8e8e8e" stroke-width="1.3"/>
<line x1="1034" y1="452.67" x2="1040" y2="452.67" stroke="#adadad" stroke-width="1.6"/>
<text x="1033.5" y="457.67" font-size="14.5" fill="#d4d4d4" text-anchor="end">-5</text>
<line x1="1040" y1="500.33" x2="1187" y2="500.33" stroke="#8e8e8e" stroke-width="1.3"/>
<line x1="1034" y1="500.33" x2="1040" y2="500.33" stroke="#adadad" stroke-width="1.6"/>
<text x="1033.5" y="505.33" font-size="14.5" fill="#d4d4d4" text-anchor="end">-10</text>
<line x1="1034" y1="548" x2="1040" y2="548" stroke="#adadad" stroke-width="1.6"/>
<text x="1033.5" y="553" font-size="14.5" fill="#d4d4d4" text-anchor="end">-15</text>
<rect x="1055.7" y="405" width="116" height="15.8" fill="url(#gYBar)" stroke="#000" stroke-width="1.2"/>
<line x1="1040" y1="262" x2="1187" y2="262" stroke="#adadad" stroke-width="1.6"/>
<line x1="1187" y1="262" x2="1187" y2="554" stroke="#adadad" stroke-width="1.6"/>
<line x1="1040" y1="261.2" x2="1040" y2="554" stroke="#adadad" stroke-width="2"/>
<line x1="1034" y1="548" x2="1187.8" y2="548" stroke="#adadad" stroke-width="2"/>
<text x="1099.8" y="255.7" font-size="15" fill="#d4d4d4" text-anchor="middle">Delta H</text>
<text x="1113.6" y="564.2" font-size="14.5" fill="#d4d4d4" text-anchor="middle">100%</text>
<rect x="606.7" y="575" width="600.8" height="165" fill="#000"/>
<rect x="627.2" y="581.2" width="100.9" height="135.5" fill="#c4c09a"/>
<rect x="627.2" y="649" width="100.9" height="67.7" fill="#c2c29e"/>
<rect x="627.7" y="581.700" width="99.900" height="134.500" fill="none" stroke="#efefe4" stroke-width="1.1"/>
<text x="677.6" y="732" font-size="12.2" fill="#f4f4f4" text-anchor="middle">20%</text>
<rect x="744.85" y="581.2" width="100.9" height="135.5" fill="#c4c07a"/>
<rect x="744.85" y="649" width="100.9" height="67.7" fill="#c2c284"/>
<rect x="745.35" y="581.700" width="99.900" height="134.500" fill="none" stroke="#efefe4" stroke-width="1.1"/>
<text x="795.25" y="732" font-size="12.2" fill="#f4f4f4" text-anchor="middle">40%</text>
<rect x="862.5" y="581.2" width="100.9" height="135.5" fill="#c4be52"/>
<rect x="862.5" y="649" width="100.9" height="67.7" fill="#c2c062"/>
<rect x="863" y="581.700" width="99.900" height="134.500" fill="none" stroke="#efefe4" stroke-width="1.1"/>
<text x="912.9" y="732" font-size="12.2" fill="#f4f4f4" text-anchor="middle">60%</text>
<rect x="980.15" y="581.2" width="100.9" height="135.5" fill="#c8c000"/>
<rect x="980.15" y="649" width="100.9" height="67.7" fill="#c0c03c"/>
<rect x="980.65" y="581.700" width="99.900" height="134.500" fill="none" stroke="#efefe4" stroke-width="1.1"/>
<text x="1030.55" y="732" font-size="12.2" fill="#f4f4f4" text-anchor="middle">80%</text>
<rect x="1097.8" y="581.2" width="100.9" height="135.5" fill="#c8c03a"/>
<rect x="1097.8" y="649" width="100.9" height="67.7" fill="#c8c600"/>
<rect x="1098.3" y="581.700" width="99.900" height="134.500" fill="none" stroke="#efefe4" stroke-width="1.1"/>
<text x="1148.2" y="732" font-size="12.2" fill="#f4f4f4" text-anchor="middle">100%</text>
<text transform="translate(619.800 629.200) rotate(-90)" font-size="12.200" fill="#f4f4f4" textLength="35.500" lengthAdjust="spacingAndGlyphs">Actual</text>
<text transform="translate(619.800 704.700) rotate(-90)" font-size="12.200" fill="#f4f4f4" textLength="35" lengthAdjust="spacingAndGlyphs">Target</text>
<rect x="1214.7" y="187.2" width="704.8" height="566.7" fill="#c4c400"/>
<rect x="1221.7" y="194.3" width="690.8" height="552.6" fill="#323232"/>
<rect x="1259.7" y="218.7" width="649.6" height="499.3" fill="#232323"/>
<text x="1567.2" y="212.8" font-size="15" fill="#d4d4d4" text-anchor="middle" textLength="86" lengthAdjust="spacingAndGlyphs">CIE 1976 u'v'</text>
<g clip-path="url(#cPlot)"><g clip-path="url(#cLoc)"><g filter="url(#fB)" stroke-width="6"><path stroke="#00ff00" d="M1273 217h90"/><path stroke="#04ff00" d="M1363 217h6"/><path stroke="#10ff00" d="M1369 217h6"/><path stroke="#00ff00" d="M1261 223h102"/><path stroke="#04ff00" d="M1363 223h6"/><path stroke="#0cff00" d="M1369 223h6"/><path stroke="#18ff00" d="M1375 223h6"/><path stroke="#20ff00" d="M1381 223h6"/><path stroke="#2cff00" d="M1387 223h6"/><path stroke="#38ff00" d="M1393 223h6"/><path stroke="#44ff00" d="M1399 223h6"/><path stroke="#4cff00" d="M1405 223h6"/><path stroke="#59ff00" d="M1411 223h6"/><path stroke="#65ff00" d="M1417 223h6"/><path stroke="#71ff00" d="M1423 223h6"/><path stroke="#00ff08" d="M1255 229h12"/><path stroke="#00ff04" d="M1267 229h24"/><path stroke="#00ff00" d="M1291 229h78"/><path stroke="#0cff00" d="M1369 229h6"/><path stroke="#14ff00" d="M1375 229h6"/><path stroke="#20ff00" d="M1381 229h6"/><path stroke="#2cff00" d="M1387 229h6"/><path stroke="#34ff00" d="M1393 229h6"/><path stroke="#40ff00" d="M1399 229h6"/><path stroke="#4cff00" d="M1405 229h6"/><path stroke="#59ff00" d="M1411 229h6"/><path stroke="#65ff00" d="M1417 229h6"/><path stroke="#71ff00" d="M1423 229h6"/><path stroke="#7dff00" d="M1429 229h6"/><path stroke="#8dff00" d="M1435 229h6"/><path stroke="#99ff00" d="M1441 229h6"/><path stroke="#aaff00" d="M1447 229h6"/><path stroke="#b6ff00" d="M1453 229h6"/><path stroke="#c6ff00" d="M1459 229h6"/><path stroke="#d6ff00" d="M1465 229h6"/><path stroke="#e6ff00" d="M1471 229h6"/><path stroke="#f6ff00" d="M1477 229h6"/><path stroke="#00ff10" d="M1255 235h18"/><path stroke="#00ff0c" d="M1273 235h30"/><path stroke="#00ff08" d="M1303 235h24"/><path stroke="#00ff04" d="M1327 235h24"/><path stroke="#00ff00" d="M1351 235h18"/><path stroke="#08ff00" d="M1369 235h6"/><path stroke="#14ff00" d="M1375 235h6"/><path stroke="#1cff00" d="M1381 235h6"/><path stroke="#28ff00" d="M1387 235h6"/><path stroke="#34ff00" d="M1393 235h6"/><path stroke="#40ff00" d="M1399 235h6"/><path stroke="#4cff00" d="M1405 235h6"/><path stroke="#59ff00" d="M1411 235h6"/><path stroke="#65ff00" d="M1417 235h6"/><path stroke="#71ff00" d="M1423 235h6"/><path stroke="#7dff00" d="M1429 235h6"/><path stroke="#8dff00" d="M1435 235h6"/><path stroke="#99ff00" d="M1441 235h6"/><path stroke="#aaff00" d="M1447 235h6"/><path stroke="#b6ff00" d="M1453 235h6"/><path stroke="#c6ff00" d="M1459 235h6"/><path stroke="#d6ff00" d="M1465 235h6"/><path stroke="#e6ff00" d="M1471 235h6"/><path stroke="#f6ff00" d="M1477 235h6"/><path stroke="#fff200" d="M1483 235h6"/><path stroke="#ffe600" d="M1489 235h6"/><path stroke="#ffd600" d="M1495 235h6"/><path stroke="#ffca00" d="M1501 235h6"/><path stroke="#ffbe00" d="M1507 235h6"/><path stroke="#ffb200" d="M1513 235h6"/><path stroke="#ffaa00" d="M1519 235h6"/><path stroke="#ffa100" d="M1525 235h6"/><path stroke="#ff9500" d="M1531 235h6"/><path stroke="#00ff18" d="M1249 241h30"/><path stroke="#00ff14" d="M1279 241h36"/><path stroke="#00ff10" d="M1315 241h30"/><path stroke="#00ff0c" d="M1345 241h24"/><path stroke="#00ff04" d="M1369 241h6"/><path stroke="#0cff04" d="M1375 241h6"/><path stroke="#18ff00" d="M1381 241h6"/><path stroke="#24ff00" d="M1387 241h6"/><path stroke="#30ff00" d="M1393 241h6"/><path stroke="#3cff00" d="M1399 241h6"/><path stroke="#48ff00" d="M1405 241h6"/><path stroke="#55ff00" d="M1411 241h6"/><path stroke="#61ff00" d="M1417 241h6"/><path stroke="#71ff00" d="M1423 241h6"/><path stroke="#7dff00" d="M1429 241h6"/><path stroke="#8dff00" d="M1435 241h6"/><path stroke="#99ff00" d="M1441 241h6"/><path stroke="#aaff00" d="M1447 241h6"/><path stroke="#b6ff00" d="M1453 241h6"/><path stroke="#c6ff00" d="M1459 241h6"/><path stroke="#d6ff00" d="M1465 241h6"/><path stroke="#e6ff00" d="M1471 241h6"/><path stroke="#faff00" d="M1477 241h6"/><path stroke="#fff200" d="M1483 241h6"/><path stroke="#ffe200" d="M1489 241h6"/><path stroke="#ffd600" d="M1495 241h6"/><path stroke="#ffc600" d="M1501 241h6"/><path stroke="#ffbe00" d="M1507 241h6"/><path stroke="#ffb200" d="M1513 241h6"/><path stroke="#ffa500" d="M1519 241h6"/><path stroke="#ff9d00" d="M1525 241h6"/><path stroke="#ff9500" d="M1531 241h6"/><path stroke="#ff8d00" d="M1537 241h6"/><path stroke="#ff8500" d="M1543 241h6"/><path stroke="#ff7d00" d="M1549 241h6"/><path stroke="#ff7900" d="M1555 241h6"/><path stroke="#ff7100" d="M1561 241h6"/><path stroke="#ff6d00" d="M1567 241h6"/><path stroke="#ff6500" d="M1573 241h6"/><path stroke="#ff6100" d="M1579 241h6"/><path stroke="#ff5d00" d="M1585 241h6"/><path stroke="#00ff24" d="M1249 247h6"/><path stroke="#00ff20" d="M1255 247h42"/><path stroke="#00ff1c" d="M1297 247h36"/><path stroke="#00ff18" d="M1333 247h30"/><path stroke="#00ff14" d="M1363 247h6"/><path stroke="#00ff10" d="M1369 247h6"/><path stroke="#04ff08" d="M1375 247h6"/><path stroke="#0cff08" d="M1381 247h6"/><path stroke="#18ff08" d="M1387 247h6"/><path stroke="#28ff04" d="M1393 247h6"/><path stroke="#34ff04" d="M1399 247h6"/><path stroke="#40ff04" d="M1405 247h6"/><path stroke="#4cff04" d="M1411 247h6"/><path stroke="#5dff04" d="M1417 247h6"/><path stroke="#69ff04" d="M1423 247h6"/><path stroke="#79ff04" d="M1429 247h6"/><path stroke="#89ff04" d="M1435 247h6"/><path stroke="#95ff04" d="M1441 247h6"/><path stroke="#a5ff00" d="M1447 247h6"/><path stroke="#b6ff00" d="M1453 247h6"/><path stroke="#c6ff00" d="M1459 247h6"/><path stroke="#d6ff00" d="M1465 247h6"/><path stroke="#eaff00" d="M1471 247h6"/><path stroke="#faff00" d="M1477 247h6"/><path stroke="#fff200" d="M1483 247h6"/><path stroke="#ffe200" d="M1489 247h6"/><path stroke="#ffd200" d="M1495 247h6"/><path stroke="#ffc600" d="M1501 247h6"/><path stroke="#ffba00" d="M1507 247h6"/><path stroke="#ffae00" d="M1513 247h6"/><path stroke="#ffa500" d="M1519 247h6"/><path stroke="#ff9d00" d="M1525 247h6"/><path stroke="#ff9100" d="M1531 247h6"/><path stroke="#ff8900" d="M1537 247h6"/><path stroke="#ff8500" d="M1543 247h6"/><path stroke="#ff7d00" d="M1549 247h6"/><path stroke="#ff7500" d="M1555 247h6"/><path stroke="#ff7100" d="M1561 247h6"/><path stroke="#ff6900" d="M1567 247h6"/><path stroke="#ff6500" d="M1573 247h6"/><path stroke="#ff6100" d="M1579 247h6"/><path stroke="#ff5900" d="M1585 247h6"/><path stroke="#ff5500" d="M1591 247h6"/><path stroke="#ff5000" d="M1597 247h6"/><path stroke="#ff4c00" d="M1603 247h6"/><path stroke="#ff4800" d="M1609 247h6"/><path stroke="#ff4400" d="M1615 247h6"/><path stroke="#ff4000" d="M1621 247h12"/><path stroke="#ff3c00" d="M1633 247h6"/><path stroke="#00ff2c" d="M1249 253h18"/><path stroke="#00ff28" d="M1267 253h48"/><path stroke="#00ff24" d="M1315 253h42"/><path stroke="#00ff20" d="M1357 253h18"/><path stroke="#04ff18" d="M1375 253h6"/><path stroke="#08ff10" d="M1381 253h6"/><path stroke="#10ff0c" d="M1387 253h6"/><path stroke="#20ff0c" d="M1393 253h6"/><path stroke="#2cff0c" d="M1399 253h6"/><path stroke="#38ff0c" d="M1405 253h6"/><path stroke="#48ff0c" d="M1411 253h6"/><path stroke="#55ff0c" d="M1417 253h6"/><path stroke="#65ff08" d="M1423 253h6"/><path stroke="#75ff08" d="M1429 253h6"/><path stroke="#81ff08" d="M1435 253h6"/><path stroke="#91ff08" d="M1441 253h6"/><path stroke="#a1ff08" d="M1447 253h6"/><path stroke="#b6ff08" d="M1453 253h6"/><path stroke="#c6ff08" d="M1459 253h6"/><path stroke="#d6ff08" d="M1465 253h6"/><path stroke="#eaff04" d="M1471 253h6"/><path stroke="#faff04" d="M1477 253h6"/><path stroke="#ffee04" d="M1483 253h6"/><path stroke="#ffde04" d="M1489 253h6"/><path stroke="#ffce04" d="M1495 253h6"/><path stroke="#ffc204" d="M1501 253h6"/><path stroke="#ffb600" d="M1507 253h6"/><path stroke="#ffaa00" d="M1513 253h6"/><path stroke="#ffa100" d="M1519 253h6"/><path stroke="#ff9900" d="M1525 253h6"/><path stroke="#ff9100" d="M1531 253h6"/><path stroke="#ff8900" d="M1537 253h6"/><path stroke="#ff8100" d="M1543 253h6"/><path stroke="#ff7900" d="M1549 253h6"/><path stroke="#ff7500" d="M1555 253h6"/><path stroke="#ff6d00" d="M1561 253h6"/><path stroke="#ff6900" d="M1567 253h6"/><path stroke="#ff6100" d="M1573 253h6"/><path stroke="#ff5d00" d="M1579 253h6"/><path stroke="#ff5900" d="M1585 253h6"/><path stroke="#ff5500" d="M1591 253h6"/><path stroke="#ff5000" d="M1597 253h6"/><path stroke="#ff4c00" d="M1603 253h6"/><path stroke="#ff4800" d="M1609 253h6"/><path stroke="#ff4400" d="M1615 253h6"/><path stroke="#ff4000" d="M1621 253h6"/><path stroke="#ff3c00" d="M1627 253h6"/><path stroke="#ff3800" d="M1633 253h12"/><path stroke="#ff3400" d="M1645 253h6"/><path stroke="#ff3000" d="M1651 253h6"/><path stroke="#ff2c00" d="M1657 253h12"/><path stroke="#ff2800" d="M1669 253h12"/><path stroke="#ff2400" d="M1681 253h12"/><path stroke="#00ff34" d="M1249 259h48"/><path stroke="#00ff30" d="M1297 259h54"/><path stroke="#00ff2c" d="M1351 259h24"/><path stroke="#04ff24" d="M1375 259h6"/><path stroke="#08ff20" d="M1381 259h6"/><path stroke="#10ff18" d="M1387 259h6"/><path stroke="#18ff14" d="M1393 259h6"/><path stroke="#24ff14" d="M1399 259h6"/><path stroke="#34ff14" d="M1405 259h6"/><path stroke="#40ff14" d="M1411 259h6"/><path stroke="#50ff14" d="M1417 259h6"/><path stroke="#61ff14" d="M1423 259h6"/><path stroke="#71ff10" d="M1429 259h6"/><path stroke="#7dff10" d="M1435 259h6"/><path stroke="#91ff10" d="M1441 259h6"/><path stroke="#a1ff10" d="M1447 259h6"/><path stroke="#b2ff10" d="M1453 259h6"/><path stroke="#c6ff10" d="M1459 259h6"/><path stroke="#d6ff10" d="M1465 259h6"/><path stroke="#eaff0c" d="M1471 259h6"/><path stroke="#ffff0c" d="M1477 259h6"/><path stroke="#ffea0c" d="M1483 259h6"/><path stroke="#ffda08" d="M1489 259h6"/><path stroke="#ffca08" d="M1495 259h6"/><path stroke="#ffbe08" d="M1501 259h6"/><path stroke="#ffb208" d="M1507 259h6"/><path stroke="#ffa504" d="M1513 259h6"/><path stroke="#ff9d04" d="M1519 259h6"/><path stroke="#ff9504" d="M1525 259h6"/><path stroke="#ff8904" d="M1531 259h6"/><path stroke="#ff8104" d="M1537 259h6"/><path stroke="#ff7d04" d="M1543 259h6"/><path stroke="#ff7500" d="M1549 259h6"/><path stroke="#ff6d00" d="M1555 259h6"/><path stroke="#ff6900" d="M1561 259h6"/><path stroke="#ff6500" d="M1567 259h6"/><path stroke="#ff5d00" d="M1573 259h6"/><path stroke="#ff5900" d="M1579 259h6"/><path stroke="#ff5500" d="M1585 259h6"/><path stroke="#ff5000" d="M1591 259h6"/><path stroke="#ff4c00" d="M1597 259h6"/><path stroke="#ff4800" d="M1603 259h6"/><path stroke="#ff4400" d="M1609 259h6"/><path stroke="#ff4000" d="M1615 259h12"/><path stroke="#ff3c00" d="M1627 259h6"/><path stroke="#ff3800" d="M1633 259h6"/><path stroke="#ff3400" d="M1639 259h6"/><path stroke="#ff3000" d="M1645 259h12"/><path stroke="#ff2c00" d="M1657 259h6"/><path stroke="#ff2800" d="M1663 259h12"/><path stroke="#ff2400" d="M1675 259h12"/><path stroke="#ff2000" d="M1687 259h12"/><path stroke="#ff1c00" d="M1699 259h12"/><path stroke="#ff1800" d="M1711 259h12"/><path stroke="#ff1400" d="M1723 259h12"/><path stroke="#ff1000" d="M1735 259h12"/><path stroke="#00ff40" d="M1249 265h12"/><path stroke="#00ff3c" d="M1261 265h78"/><path stroke="#00ff38" d="M1339 265h36"/><path stroke="#00ff34" d="M1375 265h6"/><path stroke="#08ff2c" d="M1381 265h6"/><path stroke="#0cff28" d="M1387 265h6"/><path stroke="#14ff24" d="M1393 265h6"/><path stroke="#1cff1c" d="M1399 265h6"/><path stroke="#2cff1c" d="M1405 265h6"/><path stroke="#3cff1c" d="M1411 265h6"/><path stroke="#48ff1c" d="M1417 265h6"/><path stroke="#59ff1c" d="M1423 265h6"/><path stroke="#69ff1c" d="M1429 265h6"/><path stroke="#7dff1c" d="M1435 265h6"/><path stroke="#8dff1c" d="M1441 265h6"/><path stroke="#9dff1c" d="M1447 265h6"/><path stroke="#b2ff18" d="M1453 265h6"/><path stroke="#c2ff18" d="M1459 265h6"/><path stroke="#d6ff18" d="M1465 265h6"/><path stroke="#eaff18" d="M1471 265h6"/><path stroke="#ffff18" d="M1477 265h6"/><path stroke="#ffea14" d="M1483 265h6"/><path stroke="#ffd614" d="M1489 265h6"/><path stroke="#ffca10" d="M1495 265h6"/><path stroke="#ffba10" d="M1501 265h6"/><path stroke="#ffae0c" d="M1507 265h6"/><path stroke="#ffa10c" d="M1513 265h6"/><path stroke="#ff990c" d="M1519 265h6"/><path stroke="#ff8d08" d="M1525 265h6"/><path stroke="#ff8508" d="M1531 265h6"/><path stroke="#ff7d08" d="M1537 265h6"/><path stroke="#ff7508" d="M1543 265h6"/><path stroke="#ff7104" d="M1549 265h6"/><path stroke="#ff6904" d="M1555 265h6"/><path stroke="#ff6504" d="M1561 265h6"/><path stroke="#ff5d04" d="M1567 265h6"/><path stroke="#ff5904" d="M1573 265h6"/><path stroke="#ff5504" d="M1579 265h6"/><path stroke="#ff5004" d="M1585 265h6"/><path stroke="#ff4c04" d="M1591 265h6"/><path stroke="#ff4800" d="M1597 265h6"/><path stroke="#ff4400" d="M1603 265h6"/><path stroke="#ff4000" d="M1609 265h6"/><path stroke="#ff3c00" d="M1615 265h6"/><path stroke="#ff3800" d="M1621 265h12"/><path stroke="#ff3400" d="M1633 265h6"/><path stroke="#ff3000" d="M1639 265h12"/><path stroke="#ff2c00" d="M1651 265h12"/><path stroke="#ff2800" d="M1663 265h6"/><path stroke="#ff2400" d="M1669 265h12"/><path stroke="#ff2000" d="M1681 265h12"/><path stroke="#ff1c00" d="M1693 265h12"/><path stroke="#ff1800" d="M1705 265h12"/><path stroke="#ff1400" d="M1717 265h12"/><path stroke="#ff1000" d="M1729 265h18"/><path stroke="#ff0c00" d="M1747 265h18"/><path stroke="#ff0800" d="M1765 265h18"/><path stroke="#ff0400" d="M1783 265h18"/><path stroke="#00ff48" d="M1249 271h84"/><path stroke="#00ff44" d="M1333 271h42"/><path stroke="#00ff40" d="M1375 271h6"/><path stroke="#04ff3c" d="M1381 271h6"/><path stroke="#0cff38" d="M1387 271h6"/><path stroke="#14ff30" d="M1393 271h6"/><path stroke="#1cff2c" d="M1399 271h6"/><path stroke="#28ff28" d="M1405 271h6"/><path stroke="#34ff28" d="M1411 271h6"/><path stroke="#44ff28" d="M1417 271h6"/><path stroke="#55ff28" d="M1423 271h6"/><path stroke="#65ff28" d="M1429 271h6"/><path stroke="#79ff28" d="M1435 271h6"/><path stroke="#89ff28" d="M1441 271h6"/><path stroke="#9dff24" d="M1447 271h6"/><path stroke="#aeff24" d="M1453 271h6"/><path stroke="#c2ff24" d="M1459 271h6"/><path stroke="#d6ff24" d="M1465 271h6"/><path stroke="#eaff24" d="M1471 271h6"/><path stroke="#fffa24" d="M1477 271h6"/><path stroke="#ffe620" d="M1483 271h6"/><path stroke="#ffd61c" d="M1489 271h6"/><path stroke="#ffc618" d="M1495 271h6"/><path stroke="#ffb618" d="M1501 271h6"/><path stroke="#ffaa14" d="M1507 271h6"/><path stroke="#ff9d14" d="M1513 271h6"/><path stroke="#ff9110" d="M1519 271h6"/><path stroke="#ff8910" d="M1525 271h6"/><path stroke="#ff8110" d="M1531 271h6"/><path stroke="#ff790c" d="M1537 271h6"/><path stroke="#ff710c" d="M1543 271h6"/><path stroke="#ff690c" d="M1549 271h6"/><path stroke="#ff6508" d="M1555 271h6"/><path stroke="#ff5d08" d="M1561 271h6"/><path stroke="#ff5908" d="M1567 271h6"/><path stroke="#ff5508" d="M1573 271h6"/><path stroke="#ff5008" d="M1579 271h6"/><path stroke="#ff4804" d="M1585 271h6"/><path stroke="#ff4404" d="M1591 271h6"/><path stroke="#ff4004" d="M1597 271h12"/><path stroke="#ff3c04" d="M1609 271h6"/><path stroke="#ff3804" d="M1615 271h6"/><path stroke="#ff3404" d="M1621 271h6"/><path stroke="#ff3004" d="M1627 271h12"/><path stroke="#ff2c04" d="M1639 271h6"/><path stroke="#ff2800" d="M1645 271h12"/><path stroke="#ff2400" d="M1657 271h12"/><path stroke="#ff2000" d="M1669 271h12"/><path stroke="#ff1c00" d="M1681 271h12"/><path stroke="#ff1800" d="M1693 271h18"/><path stroke="#ff1400" d="M1711 271h18"/><path stroke="#ff1000" d="M1729 271h12"/><path stroke="#ff0c00" d="M1741 271h18"/><path stroke="#ff0800" d="M1759 271h18"/><path stroke="#ff0400" d="M1777 271h18"/><path stroke="#ff0000" d="M1795 271h54"/><path stroke="#00ff55" d="M1249 277h72"/><path stroke="#00ff50" d="M1321 277h60"/><path stroke="#04ff4c" d="M1381 277h6"/><path stroke="#0cff44" d="M1387 277h6"/><path stroke="#14ff40" d="M1393 277h6"/><path stroke="#1cff3c" d="M1399 277h6"/><path stroke="#24ff38" d="M1405 277h6"/><path stroke="#30ff34" d="M1411 277h6"/><path stroke="#40ff34" d="M1417 277h6"/><path stroke="#50ff34" d="M1423 277h6"/><path stroke="#61ff34" d="M1429 277h6"/><path stroke="#75ff34" d="M1435 277h6"/><path stroke="#85ff34" d="M1441 277h6"/><path stroke="#99ff34" d="M1447 277h6"/><path stroke="#aeff34" d="M1453 277h6"/><path stroke="#c2ff34" d="M1459 277h6"/><path stroke="#d6ff34" d="M1465 277h6"/><path stroke="#eeff34" d="M1471 277h6"/><path stroke="#fffa30" d="M1477 277h6"/><path stroke="#ffe22c" d="M1483 277h6"/><path stroke="#ffd228" d="M1489 277h6"/><path stroke="#ffc224" d="M1495 277h6"/><path stroke="#ffb220" d="M1501 277h6"/><path stroke="#ffa51c" d="M1507 277h6"/><path stroke="#ff991c" d="M1513 277h6"/><path stroke="#ff8d18" d="M1519 277h6"/><path stroke="#ff8518" d="M1525 277h6"/><path stroke="#ff7d14" d="M1531 277h6"/><path stroke="#ff7514" d="M1537 277h6"/><path stroke="#ff6d10" d="M1543 277h6"/><path stroke="#ff6510" d="M1549 277h6"/><path stroke="#ff6110" d="M1555 277h6"/><path stroke="#ff590c" d="M1561 277h6"/><path stroke="#ff550c" d="M1567 277h6"/><path stroke="#ff4c0c" d="M1573 277h6"/><path stroke="#ff480c" d="M1579 277h6"/><path stroke="#ff4408" d="M1585 277h6"/><path stroke="#ff4008" d="M1591 277h6"/><path stroke="#ff3c08" d="M1597 277h6"/><path stroke="#ff3808" d="M1603 277h6"/><path stroke="#ff3408" d="M1609 277h12"/><path stroke="#ff3004" d="M1621 277h6"/><path stroke="#ff2c04" d="M1627 277h6"/><path stroke="#ff2804" d="M1633 277h12"/><path stroke="#ff2404" d="M1645 277h12"/><path stroke="#ff2004" d="M1657 277h6"/><path stroke="#ff1c04" d="M1663 277h12"/><path stroke="#ff1804" d="M1675 277h12"/><path stroke="#ff1800" d="M1687 277h6"/><path stroke="#ff1400" d="M1693 277h12"/><path stroke="#ff1000" d="M1705 277h18"/><path stroke="#ff0c00" d="M1723 277h18"/><path stroke="#ff0800" d="M1741 277h24"/><path stroke="#ff0400" d="M1765 277h24"/><path stroke="#ff0000" d="M1789 277h114"/><path stroke="#00ff5d" d="M1249 283h78"/><path stroke="#00ff61" d="M1327 283h54"/><path stroke="#04ff59" d="M1381 283h6"/><path stroke="#08ff55" d="M1387 283h6"/><path stroke="#10ff50" d="M1393 283h6"/><path stroke="#18ff4c" d="M1399 283h6"/><path stroke="#24ff4c" d="M1405 283h6"/><path stroke="#30ff48" d="M1411 283h6"/><path stroke="#3cff44" d="M1417 283h6"/><path stroke="#4cff40" d="M1423 283h6"/><path stroke="#5dff40" d="M1429 283h6"/><path stroke="#71ff44" d="M1435 283h6"/><path stroke="#85ff44" d="M1441 283h6"/><path stroke="#95ff44" d="M1447 283h6"/><path stroke="#aeff44" d="M1453 283h6"/><path stroke="#c2ff44" d="M1459 283h6"/><path stroke="#d6ff44" d="M1465 283h6"/><path stroke="#eeff44" d="M1471 283h6"/><path stroke="#fff640" d="M1477 283h6"/><path stroke="#ffe23c" d="M1483 283h6"/><path stroke="#ffce34" d="M1489 283h6"/><path stroke="#ffbe30" d="M1495 283h6"/><path stroke="#ffae2c" d="M1501 283h6"/><path stroke="#ffa128" d="M1507 283h6"/><path stroke="#ff9524" d="M1513 283h6"/><path stroke="#ff8920" d="M1519 283h6"/><path stroke="#ff8120" d="M1525 283h6"/><path stroke="#ff751c" d="M1531 283h6"/><path stroke="#ff6d1c" d="M1537 283h6"/><path stroke="#ff6918" d="M1543 283h6"/><path stroke="#ff6118" d="M1549 283h6"/><path stroke="#ff5914" d="M1555 283h6"/><path stroke="#ff5514" d="M1561 283h6"/><path stroke="#ff4c10" d="M1567 283h6"/><path stroke="#ff4810" d="M1573 283h6"/><path stroke="#ff4410" d="M1579 283h6"/><path stroke="#ff4010" d="M1585 283h6"/><path stroke="#ff3c0c" d="M1591 283h6"/><path stroke="#ff380c" d="M1597 283h6"/><path stroke="#ff340c" d="M1603 283h6"/><path stroke="#ff300c" d="M1609 283h6"/><path stroke="#ff2c08" d="M1615 283h12"/><path stroke="#ff2808" d="M1627 283h6"/><path stroke="#ff2408" d="M1633 283h6"/><path stroke="#ff2008" d="M1639 283h12"/><path stroke="#ff1c08" d="M1651 283h6"/><path stroke="#ff1c04" d="M1657 283h6"/><path stroke="#ff1804" d="M1663 283h12"/><path stroke="#ff1404" d="M1675 283h12"/><path stroke="#ff1004" d="M1687 283h18"/><path stroke="#ff0c04" d="M1705 283h18"/><path stroke="#ff0804" d="M1723 283h12"/><path stroke="#ff0800" d="M1735 283h6"/><path stroke="#ff0400" d="M1741 283h18"/><path stroke="#ff0000" d="M1759 283h18"/><path stroke="#ff0004" d="M1777 283h30"/><path stroke="#ff0000" d="M1807 283h120"/><path stroke="#00ff69" d="M1249 289h66"/><path stroke="#00ff6d" d="M1315 289h66"/><path stroke="#04ff69" d="M1381 289h6"/><path stroke="#08ff65" d="M1387 289h6"/><path stroke="#10ff65" d="M1393 289h6"/><path stroke="#18ff61" d="M1399 289h6"/><path stroke="#20ff5d" d="M1405 289h6"/><path stroke="#2cff59" d="M1411 289h6"/><path stroke="#38ff59" d="M1417 289h6"/><path stroke="#48ff55" d="M1423 289h6"/><path stroke="#59ff50" d="M1429 289h6"/><path stroke="#6dff55" d="M1435 289h6"/><path stroke="#81ff55" d="M1441 289h6"/><path stroke="#95ff55" d="M1447 289h6"/><path stroke="#aaff55" d="M1453 289h6"/><path stroke="#c2ff59" d="M1459 289h6"/><path stroke="#daff59" d="M1465 289h6"/><path stroke="#f2ff59" d="M1471 289h6"/><path stroke="#fff255" d="M1477 289h6"/><path stroke="#ffde4c" d="M1483 289h6"/><path stroke="#ffca44" d="M1489 289h6"/><path stroke="#ffba3c" d="M1495 289h6"/><path stroke="#ffaa38" d="M1501 289h6"/><path stroke="#ff9d34" d="M1507 289h6"/><path stroke="#ff9130" d="M1513 289h6"/><path stroke="#ff852c" d="M1519 289h6"/><path stroke="#ff7928" d="M1525 289h6"/><path stroke="#ff7124" d="M1531 289h6"/><path stroke="#ff6924" d="M1537 289h6"/><path stroke="#ff6120" d="M1543 289h6"/><path stroke="#ff5d1c" d="M1549 289h6"/><path stroke="#ff551c" d="M1555 289h6"/><path stroke="#ff4c18" d="M1561 289h6"/><path stroke="#ff4818" d="M1567 289h6"/><path stroke="#ff4418" d="M1573 289h6"/><path stroke="#ff4014" d="M1579 289h6"/><path stroke="#ff3c14" d="M1585 289h6"/><path stroke="#ff3814" d="M1591 289h6"/><path stroke="#ff3410" d="M1597 289h6"/><path stroke="#ff3010" d="M1603 289h6"/><path stroke="#ff2c10" d="M1609 289h6"/><path stroke="#ff2810" d="M1615 289h6"/><path stroke="#ff240c" d="M1621 289h12"/><path stroke="#ff200c" d="M1633 289h6"/><path stroke="#ff1c0c" d="M1639 289h12"/><path stroke="#ff1808" d="M1651 289h12"/><path stroke="#ff1408" d="M1663 289h12"/><path stroke="#ff1008" d="M1675 289h12"/><path stroke="#ff0c08" d="M1687 289h6"/><path stroke="#ff0c04" d="M1693 289h6"/><path stroke="#ff0804" d="M1699 289h18"/><path stroke="#ff0404" d="M1717 289h30"/><path stroke="#ff0004" d="M1747 289h12"/><path stroke="#ff0008" d="M1759 289h48"/><path stroke="#ff0004" d="M1807 289h54"/><path stroke="#ff0000" d="M1861 289h66"/><path stroke="#00ff75" d="M1249 295h60"/><path stroke="#00ff79" d="M1309 295h54"/><path stroke="#00ff7d" d="M1363 295h18"/><path stroke="#00ff79" d="M1381 295h6"/><path stroke="#08ff79" d="M1387 295h6"/><path stroke="#0cff75" d="M1393 295h6"/><path stroke="#18ff71" d="M1399 295h6"/><path stroke="#20ff71" d="M1405 295h6"/><path stroke="#2cff6d" d="M1411 295h6"/><path stroke="#38ff69" d="M1417 295h6"/><path stroke="#48ff69" d="M1423 295h6"/><path stroke="#59ff65" d="M1429 295h6"/><path stroke="#69ff65" d="M1435 295h6"/><path stroke="#7dff65" d="M1441 295h6"/><path stroke="#95ff69" d="M1447 295h6"/><path stroke="#aaff69" d="M1453 295h6"/><path stroke="#c2ff6d" d="M1459 295h6"/><path stroke="#daff71" d="M1465 295h6"/><path stroke="#f2ff71" d="M1471 295h6"/><path stroke="#fff26d" d="M1477 295h6"/><path stroke="#ffda61" d="M1483 295h6"/><path stroke="#ffc655" d="M1489 295h6"/><path stroke="#ffb64c" d="M1495 295h6"/><path stroke="#ffa544" d="M1501 295h6"/><path stroke="#ff9940" d="M1507 295h6"/><path stroke="#ff893c" d="M1513 295h6"/><path stroke="#ff8138" d="M1519 295h6"/><path stroke="#ff7534" d="M1525 295h6"/><path stroke="#ff6d30" d="M1531 295h6"/><path stroke="#ff652c" d="M1537 295h6"/><path stroke="#ff5d28" d="M1543 295h6"/><path stroke="#ff5524" d="M1549 295h6"/><path stroke="#ff5024" d="M1555 295h6"/><path stroke="#ff4820" d="M1561 295h6"/><path stroke="#ff4420" d="M1567 295h6"/><path stroke="#ff401c" d="M1573 295h6"/><path stroke="#ff381c" d="M1579 295h6"/><path stroke="#ff3418" d="M1585 295h6"/><path stroke="#ff3018" d="M1591 295h6"/><path stroke="#ff2c18" d="M1597 295h6"/><path stroke="#ff2814" d="M1603 295h12"/><path stroke="#ff2414" d="M1615 295h6"/><path stroke="#ff2010" d="M1621 295h6"/><path stroke="#ff1c10" d="M1627 295h12"/><path stroke="#ff1810" d="M1639 295h6"/><path stroke="#ff140c" d="M1645 295h12"/><path stroke="#ff100c" d="M1657 295h12"/><path stroke="#ff0c0c" d="M1669 295h12"/><path stroke="#ff0c08" d="M1681 295h6"/><path stroke="#ff0808" d="M1687 295h18"/><path stroke="#ff0408" d="M1705 295h18"/><path stroke="#ff040c" d="M1723 295h18"/><path stroke="#ff000c" d="M1741 295h60"/><path stroke="#ff0008" d="M1801 295h54"/><path stroke="#ff0004" d="M1855 295h66"/><path stroke="#ff0000" d="M1921 295h6"/><path stroke="#00ff7d" d="M1249 301h6"/><path stroke="#00ff81" d="M1255 301h48"/><path stroke="#00ff85" d="M1303 301h36"/><path stroke="#00ff89" d="M1339 301h36"/><path stroke="#00ff8d" d="M1375 301h12"/><path stroke="#04ff89" d="M1387 301h6"/><path stroke="#0cff85" d="M1393 301h6"/><path stroke="#14ff85" d="M1399 301h6"/><path stroke="#20ff81" d="M1405 301h6"/><path stroke="#2cff81" d="M1411 301h6"/><path stroke="#38ff7d" d="M1417 301h6"/><path stroke="#44ff7d" d="M1423 301h6"/><path stroke="#55ff7d" d="M1429 301h6"/><path stroke="#69ff7d" d="M1435 301h6"/><path stroke="#7dff7d" d="M1441 301h6"/><path stroke="#91ff7d" d="M1447 301h6"/><path stroke="#aeff81" d="M1453 301h6"/><path stroke="#c6ff85" d="M1459 301h6"/><path stroke="#deff8d" d="M1465 301h6"/><path stroke="#f6ff8d" d="M1471 301h6"/><path stroke="#ffee85" d="M1477 301h6"/><path stroke="#ffda79" d="M1483 301h6"/><path stroke="#ffc66d" d="M1489 301h6"/><path stroke="#ffb261" d="M1495 301h6"/><path stroke="#ffa155" d="M1501 301h6"/><path stroke="#ff914c" d="M1507 301h6"/><path stroke="#ff8548" d="M1513 301h6"/><path stroke="#ff7940" d="M1519 301h6"/><path stroke="#ff713c" d="M1525 301h6"/><path stroke="#ff6938" d="M1531 301h6"/><path stroke="#ff6134" d="M1537 301h6"/><path stroke="#ff5930" d="M1543 301h6"/><path stroke="#ff502c" d="M1549 301h6"/><path stroke="#ff482c" d="M1555 301h6"/><path stroke="#ff4428" d="M1561 301h6"/><path stroke="#ff4024" d="M1567 301h6"/><path stroke="#ff3824" d="M1573 301h6"/><path stroke="#ff3420" d="M1579 301h6"/><path stroke="#ff3020" d="M1585 301h6"/><path stroke="#ff2c1c" d="M1591 301h6"/><path stroke="#ff281c" d="M1597 301h6"/><path stroke="#ff241c" d="M1603 301h6"/><path stroke="#ff2018" d="M1609 301h12"/><path stroke="#ff1c18" d="M1621 301h6"/><path stroke="#ff1814" d="M1627 301h6"/><path stroke="#ff1414" d="M1633 301h12"/><path stroke="#ff1010" d="M1645 301h18"/><path stroke="#ff0c10" d="M1663 301h18"/><path stroke="#ff0810" d="M1681 301h24"/><path stroke="#ff0410" d="M1705 301h30"/><path stroke="#ff0010" d="M1735 301h66"/><path stroke="#ff000c" d="M1801 301h48"/><path stroke="#ff0008" d="M1849 301h54"/><path stroke="#ff0004" d="M1903 301h24"/><path stroke="#00ff89" d="M1255 307h6"/><path stroke="#00ff8d" d="M1261 307h36"/><path stroke="#00ff91" d="M1297 307h30"/><path stroke="#00ff95" d="M1327 307h24"/><path stroke="#00ff99" d="M1351 307h24"/><path stroke="#00ff9d" d="M1375 307h12"/><path stroke="#04ff99" d="M1387 307h6"/><path stroke="#0cff99" d="M1393 307h6"/><path stroke="#14ff95" d="M1399 307h6"/><path stroke="#1cff95" d="M1405 307h6"/><path stroke="#28ff95" d="M1411 307h6"/><path stroke="#34ff95" d="M1417 307h6"/><path stroke="#44ff95" d="M1423 307h6"/><path stroke="#55ff91" d="M1429 307h6"/><path stroke="#69ff95" d="M1435 307h6"/><path stroke="#7dff95" d="M1441 307h6"/><path stroke="#95ff99" d="M1447 307h6"/><path stroke="#aeff9d" d="M1453 307h6"/><path stroke="#caffa5" d="M1459 307h6"/><path stroke="#e2ffaa" d="M1465 307h6"/><path stroke="#f6ffae" d="M1471 307h6"/><path stroke="#ffeea5" d="M1477 307h6"/><path stroke="#ffda91" d="M1483 307h6"/><path stroke="#ffc281" d="M1489 307h6"/><path stroke="#ffae75" d="M1495 307h6"/><path stroke="#ff9d65" d="M1501 307h6"/><path stroke="#ff8d5d" d="M1507 307h6"/><path stroke="#ff8155" d="M1513 307h6"/><path stroke="#ff754c" d="M1519 307h6"/><path stroke="#ff6d48" d="M1525 307h6"/><path stroke="#ff6144" d="M1531 307h6"/><path stroke="#ff5940" d="M1537 307h6"/><path stroke="#ff503c" d="M1543 307h6"/><path stroke="#ff4c38" d="M1549 307h6"/><path stroke="#ff4434" d="M1555 307h6"/><path stroke="#ff4030" d="M1561 307h6"/><path stroke="#ff382c" d="M1567 307h6"/><path stroke="#ff342c" d="M1573 307h6"/><path stroke="#ff3028" d="M1579 307h6"/><path stroke="#ff2c24" d="M1585 307h6"/><path stroke="#ff2824" d="M1591 307h6"/><path stroke="#ff2420" d="M1597 307h6"/><path stroke="#ff2020" d="M1603 307h6"/><path stroke="#ff1c20" d="M1609 307h6"/><path stroke="#ff1c1c" d="M1615 307h6"/><path stroke="#ff181c" d="M1621 307h12"/><path stroke="#ff141c" d="M1633 307h12"/><path stroke="#ff1018" d="M1645 307h12"/><path stroke="#ff0c18" d="M1657 307h18"/><path stroke="#ff0818" d="M1675 307h24"/><path stroke="#ff0418" d="M1699 307h18"/><path stroke="#ff0414" d="M1717 307h18"/><path stroke="#ff0014" d="M1735 307h24"/><path stroke="#ff0018" d="M1759 307h6"/><path stroke="#ff0014" d="M1765 307h36"/><path stroke="#ff0010" d="M1801 307h42"/><path stroke="#ff000c" d="M1843 307h48"/><path stroke="#ff0008" d="M1891 307h36"/><path stroke="#00ff95" d="M1255 313h6"/><path stroke="#00ff99" d="M1261 313h30"/><path stroke="#00ff9d" d="M1291 313h24"/><path stroke="#00ffa1" d="M1315 313h24"/><path stroke="#00ffa5" d="M1339 313h18"/><path stroke="#00ffaa" d="M1357 313h18"/><path stroke="#00ffae" d="M1375 313h12"/><path stroke="#04ffae" d="M1387 313h6"/><path stroke="#08ffaa" d="M1393 313h6"/><path stroke="#10ffaa" d="M1399 313h6"/><path stroke="#1cffaa" d="M1405 313h6"/><path stroke="#28ffaa" d="M1411 313h6"/><path stroke="#34ffaa" d="M1417 313h6"/><path stroke="#44ffaa" d="M1423 313h6"/><path stroke="#55ffaa" d="M1429 313h6"/><path stroke="#69ffae" d="M1435 313h6"/><path stroke="#7dffae" d="M1441 313h6"/><path stroke="#95ffb2" d="M1447 313h6"/><path stroke="#b2ffba" d="M1453 313h6"/><path stroke="#ceffc2" d="M1459 313h6"/><path stroke="#e6ffca" d="M1465 313h6"/><path stroke="#faffce" d="M1471 313h6"/><path stroke="#ffeec2" d="M1477 313h6"/><path stroke="#ffdaae" d="M1483 313h6"/><path stroke="#ffc299" d="M1489 313h6"/><path stroke="#ffae89" d="M1495 313h6"/><path stroke="#ff9979" d="M1501 313h6"/><path stroke="#ff896d" d="M1507 313h6"/><path stroke="#ff7d65" d="M1513 313h6"/><path stroke="#ff715d" d="M1519 313h6"/><path stroke="#ff6555" d="M1525 313h6"/><path stroke="#ff5d50" d="M1531 313h6"/><path stroke="#ff5548" d="M1537 313h6"/><path stroke="#ff4c44" d="M1543 313h6"/><path stroke="#ff4440" d="M1549 313h6"/><path stroke="#ff403c" d="M1555 313h6"/><path stroke="#ff3838" d="M1561 313h6"/><path stroke="#ff3434" d="M1567 313h6"/><path stroke="#ff3034" d="M1573 313h6"/><path stroke="#ff2c30" d="M1579 313h6"/><path stroke="#ff2830" d="M1585 313h6"/><path stroke="#ff242c" d="M1591 313h6"/><path stroke="#ff202c" d="M1597 313h12"/><path stroke="#ff1c28" d="M1609 313h6"/><path stroke="#ff1828" d="M1615 313h12"/><path stroke="#ff1424" d="M1627 313h12"/><path stroke="#ff1024" d="M1639 313h12"/><path stroke="#ff1020" d="M1651 313h6"/><path stroke="#ff0c20" d="M1657 313h12"/><path stroke="#ff0820" d="M1669 313h18"/><path stroke="#ff081c" d="M1687 313h6"/><path stroke="#ff041c" d="M1693 313h36"/><path stroke="#ff001c" d="M1729 313h42"/><path stroke="#ff0018" d="M1771 313h30"/><path stroke="#ff0014" d="M1801 313h36"/><path stroke="#ff0010" d="M1837 313h42"/><path stroke="#ff000c" d="M1879 313h48"/><path stroke="#00ffa5" d="M1255 319h30"/><path stroke="#00ffaa" d="M1285 319h18"/><path stroke="#00ffae" d="M1303 319h24"/><path stroke="#00ffb2" d="M1327 319h18"/><path stroke="#00ffb6" d="M1345 319h12"/><path stroke="#00ffba" d="M1357 319h18"/><path stroke="#00ffbe" d="M1375 319h18"/><path stroke="#08ffbe" d="M1393 319h6"/><path stroke="#10ffbe" d="M1399 319h6"/><path stroke="#18ffbe" d="M1405 319h6"/><path stroke="#24ffbe" d="M1411 319h6"/><path stroke="#34ffc2" d="M1417 319h6"/><path stroke="#40ffc2" d="M1423 319h6"/><path stroke="#55ffc2" d="M1429 319h6"/><path stroke="#69ffc6" d="M1435 319h6"/><path stroke="#7dffca" d="M1441 319h6"/><path stroke="#99ffce" d="M1447 319h6"/><path stroke="#b6ffd6" d="M1453 319h6"/><path stroke="#d2ffde" d="M1459 319h6"/><path stroke="#eaffe2" d="M1465 319h6"/><path stroke="#ffffe6" d="M1471 319h6"/><path stroke="#ffeeda" d="M1477 319h6"/><path stroke="#ffdac6" d="M1483 319h6"/><path stroke="#ffc2b2" d="M1489 319h6"/><path stroke="#ffaa9d" d="M1495 319h6"/><path stroke="#ff958d" d="M1501 319h6"/><path stroke="#ff857d" d="M1507 319h6"/><path stroke="#ff7975" d="M1513 319h6"/><path stroke="#ff6d69" d="M1519 319h6"/><path stroke="#ff6165" d="M1525 319h6"/><path stroke="#ff595d" d="M1531 319h6"/><path stroke="#ff5059" d="M1537 319h6"/><path stroke="#ff4855" d="M1543 319h6"/><path stroke="#ff444c" d="M1549 319h6"/><path stroke="#ff3c48" d="M1555 319h6"/><path stroke="#ff3848" d="M1561 319h6"/><path stroke="#ff3444" d="M1567 319h6"/><path stroke="#ff3040" d="M1573 319h6"/><path stroke="#ff2c3c" d="M1579 319h6"/><path stroke="#ff283c" d="M1585 319h6"/><path stroke="#ff2438" d="M1591 319h6"/><path stroke="#ff2038" d="M1597 319h6"/><path stroke="#ff1c34" d="M1603 319h12"/><path stroke="#ff1830" d="M1615 319h12"/><path stroke="#ff142c" d="M1627 319h12"/><path stroke="#ff102c" d="M1639 319h12"/><path stroke="#ff0c28" d="M1651 319h18"/><path stroke="#ff0828" d="M1669 319h6"/><path stroke="#ff0824" d="M1675 319h12"/><path stroke="#ff0424" d="M1687 319h36"/><path stroke="#ff0020" d="M1723 319h48"/><path stroke="#ff001c" d="M1771 319h30"/><path stroke="#ff0018" d="M1801 319h30"/><path stroke="#ff0014" d="M1831 319h42"/><path stroke="#ff0010" d="M1873 319h48"/><path stroke="#ff000c" d="M1921 319h6"/><path stroke="#00ffb2" d="M1255 325h18"/><path stroke="#00ffb6" d="M1273 325h24"/><path stroke="#00ffba" d="M1297 325h18"/><path stroke="#00ffbe" d="M1315 325h12"/><path stroke="#00ffc2" d="M1327 325h18"/><path stroke="#00ffc6" d="M1345 325h12"/><path stroke="#00ffca" d="M1357 325h12"/><path stroke="#00ffce" d="M1369 325h12"/><path stroke="#00ffd2" d="M1381 325h12"/><path stroke="#08ffd2" d="M1393 325h6"/><path stroke="#10ffd2" d="M1399 325h6"/><path stroke="#18ffd6" d="M1405 325h6"/><path stroke="#24ffd6" d="M1411 325h6"/><path stroke="#30ffd6" d="M1417 325h6"/><path stroke="#40ffda" d="M1423 325h6"/><path stroke="#50ffde" d="M1429 325h6"/><path stroke="#69ffde" d="M1435 325h6"/><path stroke="#81ffe2" d="M1441 325h6"/><path stroke="#9dffea" d="M1447 325h6"/><path stroke="#baffee" d="M1453 325h6"/><path stroke="#d6fff2" d="M1459 325h6"/><path stroke="#eefff6" d="M1465 325h6"/><path stroke="#fffffa" d="M1471 325h6"/><path stroke="#ffeeee" d="M1477 325h6"/><path stroke="#ffdada" d="M1483 325h6"/><path stroke="#ffc2c6" d="M1489 325h6"/><path stroke="#ffaab2" d="M1495 325h6"/><path stroke="#ff95a1" d="M1501 325h6"/><path stroke="#ff8591" d="M1507 325h6"/><path stroke="#ff7589" d="M1513 325h6"/><path stroke="#ff697d" d="M1519 325h6"/><path stroke="#ff6175" d="M1525 325h6"/><path stroke="#ff596d" d="M1531 325h6"/><path stroke="#ff5069" d="M1537 325h6"/><path stroke="#ff4861" d="M1543 325h6"/><path stroke="#ff445d" d="M1549 325h6"/><path stroke="#ff3c59" d="M1555 325h6"/><path stroke="#ff3855" d="M1561 325h6"/><path stroke="#ff3450" d="M1567 325h6"/><path stroke="#ff304c" d="M1573 325h6"/><path stroke="#ff2c48" d="M1579 325h6"/><path stroke="#ff2844" d="M1585 325h6"/><path stroke="#ff2444" d="M1591 325h6"/><path stroke="#ff2040" d="M1597 325h6"/><path stroke="#ff1c40" d="M1603 325h6"/><path stroke="#ff1c3c" d="M1609 325h6"/><path stroke="#ff1838" d="M1615 325h6"/><path stroke="#ff1438" d="M1621 325h12"/><path stroke="#ff1034" d="M1633 325h12"/><path stroke="#ff0c34" d="M1645 325h6"/><path stroke="#ff0c30" d="M1651 325h12"/><path stroke="#ff0830" d="M1663 325h6"/><path stroke="#ff082c" d="M1669 325h18"/><path stroke="#ff042c" d="M1687 325h12"/><path stroke="#ff0428" d="M1699 325h18"/><path stroke="#ff0028" d="M1717 325h30"/><path stroke="#ff0024" d="M1747 325h24"/><path stroke="#ff0020" d="M1771 325h30"/><path stroke="#ff001c" d="M1801 325h30"/><path stroke="#ff0018" d="M1831 325h36"/><path stroke="#ff0014" d="M1867 325h42"/><path stroke="#ff0010" d="M1909 325h18"/><path stroke="#00ffbe" d="M1261 331h6"/><path stroke="#00ffc2" d="M1267 331h18"/><path stroke="#00ffc6" d="M1285 331h18"/><path stroke="#00ffca" d="M1303 331h12"/><path stroke="#00ffce" d="M1315 331h18"/><path stroke="#00ffd2" d="M1333 331h12"/><path stroke="#00ffd6" d="M1345 331h12"/><path stroke="#00ffda" d="M1357 331h12"/><path stroke="#00ffde" d="M1369 331h12"/><path stroke="#00ffe2" d="M1381 331h6"/><path stroke="#00ffe6" d="M1387 331h6"/><path stroke="#04ffe6" d="M1393 331h6"/><path stroke="#0cffea" d="M1399 331h6"/><path stroke="#18ffea" d="M1405 331h6"/><path stroke="#24ffee" d="M1411 331h6"/><path stroke="#30fff2" d="M1417 331h6"/><path stroke="#40fff2" d="M1423 331h6"/><path stroke="#50fff6" d="M1429 331h6"/><path stroke="#65fffa" d="M1435 331h6"/><path stroke="#7dffff" d="M1441 331h6"/><path stroke="#99faff" d="M1447 331h6"/><path stroke="#b6f6ff" d="M1453 331h6"/><path stroke="#d2f6ff" d="M1459 331h6"/><path stroke="#e6f2ff" d="M1465 331h6"/><path stroke="#f6f2ff" d="M1471 331h6"/><path stroke="#ffeeff" d="M1477 331h6"/><path stroke="#ffdaee" d="M1483 331h6"/><path stroke="#ffc2de" d="M1489 331h6"/><path stroke="#ffaaca" d="M1495 331h6"/><path stroke="#ff95b6" d="M1501 331h6"/><path stroke="#ff85aa" d="M1507 331h6"/><path stroke="#ff759d" d="M1513 331h6"/><path stroke="#ff6991" d="M1519 331h6"/><path stroke="#ff6189" d="M1525 331h6"/><path stroke="#ff5981" d="M1531 331h6"/><path stroke="#ff5079" d="M1537 331h6"/><path stroke="#ff4871" d="M1543 331h6"/><path stroke="#ff406d" d="M1549 331h6"/><path stroke="#ff3c65" d="M1555 331h6"/><path stroke="#ff3861" d="M1561 331h6"/><path stroke="#ff305d" d="M1567 331h6"/><path stroke="#ff2c59" d="M1573 331h6"/><path stroke="#ff2855" d="M1579 331h6"/><path stroke="#ff2450" d="M1585 331h6"/><path stroke="#ff204c" d="M1591 331h12"/><path stroke="#ff1c48" d="M1603 331h6"/><path stroke="#ff1844" d="M1609 331h12"/><path stroke="#ff1440" d="M1621 331h12"/><path stroke="#ff103c" d="M1633 331h12"/><path stroke="#ff0c3c" d="M1645 331h6"/><path stroke="#ff0c38" d="M1651 331h12"/><path stroke="#ff0834" d="M1663 331h18"/><path stroke="#ff0434" d="M1681 331h6"/><path stroke="#ff0430" d="M1687 331h24"/><path stroke="#ff0030" d="M1711 331h12"/><path stroke="#ff002c" d="M1723 331h30"/><path stroke="#ff0028" d="M1753 331h24"/><path stroke="#ff0024" d="M1777 331h24"/><path stroke="#ff0020" d="M1801 331h30"/><path stroke="#ff001c" d="M1831 331h30"/><path stroke="#ff0018" d="M1861 331h42"/><path stroke="#ff0014" d="M1903 331h24"/><path stroke="#00ffce" d="M1261 337h18"/><path stroke="#00ffd2" d="M1279 337h12"/><path stroke="#00ffd6" d="M1291 337h12"/><path stroke="#00ffda" d="M1303 337h18"/><path stroke="#00ffde" d="M1321 337h12"/><path stroke="#00ffe2" d="M1333 337h6"/><path stroke="#00ffe6" d="M1339 337h12"/><path stroke="#00ffea" d="M1351 337h12"/><path stroke="#00ffee" d="M1363 337h12"/><path stroke="#00fff2" d="M1375 337h6"/><path stroke="#00fff6" d="M1381 337h6"/><path stroke="#00fffa" d="M1387 337h6"/><path stroke="#04fffa" d="M1393 337h6"/><path stroke="#0cffff" d="M1399 337h6"/><path stroke="#14faff" d="M1405 337h6"/><path stroke="#20f6ff" d="M1411 337h6"/><path stroke="#2cf2ff" d="M1417 337h6"/><path stroke="#3ceeff" d="M1423 337h6"/><path stroke="#4ceaff" d="M1429 337h6"/><path stroke="#5de6ff" d="M1435 337h6"/><path stroke="#71e2ff" d="M1441 337h6"/><path stroke="#8de2ff" d="M1447 337h6"/><path stroke="#a5e2ff" d="M1453 337h6"/><path stroke="#c2e2ff" d="M1459 337h6"/><path stroke="#d6e2ff" d="M1465 337h6"/><path stroke="#e6e2ff" d="M1471 337h6"/><path stroke="#f2deff" d="M1477 337h6"/><path stroke="#ffdaff" d="M1483 337h6"/><path stroke="#ffc2ee" d="M1489 337h6"/><path stroke="#ffaade" d="M1495 337h6"/><path stroke="#ff95ce" d="M1501 337h6"/><path stroke="#ff85be" d="M1507 337h6"/><path stroke="#ff75b2" d="M1513 337h6"/><path stroke="#ff69a5" d="M1519 337h6"/><path stroke="#ff6199" d="M1525 337h6"/><path stroke="#ff5991" d="M1531 337h6"/><path stroke="#ff5089" d="M1537 337h6"/><path stroke="#ff4881" d="M1543 337h6"/><path stroke="#ff4079" d="M1549 337h6"/><path stroke="#ff3c75" d="M1555 337h6"/><path stroke="#ff346d" d="M1561 337h6"/><path stroke="#ff3069" d="M1567 337h6"/><path stroke="#ff2c65" d="M1573 337h6"/><path stroke="#ff2861" d="M1579 337h6"/><path stroke="#ff245d" d="M1585 337h6"/><path stroke="#ff2059" d="M1591 337h6"/><path stroke="#ff1c55" d="M1597 337h12"/><path stroke="#ff1850" d="M1609 337h6"/><path stroke="#ff144c" d="M1615 337h12"/><path stroke="#ff1048" d="M1627 337h6"/><path stroke="#ff1044" d="M1633 337h6"/><path stroke="#ff0c44" d="M1639 337h12"/><path stroke="#ff0c40" d="M1651 337h6"/><path stroke="#ff0840" d="M1657 337h6"/><path stroke="#ff083c" d="M1663 337h12"/><path stroke="#ff043c" d="M1675 337h6"/><path stroke="#ff0438" d="M1681 337h24"/><path stroke="#ff0034" d="M1705 337h30"/><path stroke="#ff0030" d="M1735 337h18"/><path stroke="#ff002c" d="M1753 337h24"/><path stroke="#ff0028" d="M1777 337h24"/><path stroke="#ff0024" d="M1801 337h24"/><path stroke="#ff0020" d="M1825 337h30"/><path stroke="#ff001c" d="M1855 337h36"/><path stroke="#ff0018" d="M1891 337h24"/><path stroke="#00ffda" d="M1261 343h6"/><path stroke="#00ffde" d="M1267 343h18"/><path stroke="#00ffe2" d="M1285 343h12"/><path stroke="#00ffe6" d="M1297 343h12"/><path stroke="#00ffea" d="M1309 343h6"/><path stroke="#00ffee" d="M1315 343h12"/><path stroke="#00fff2" d="M1327 343h12"/><path stroke="#00fff6" d="M1339 343h12"/><path stroke="#00fffa" d="M1351 343h6"/><path stroke="#00ffff" d="M1357 343h6"/><path stroke="#00faff" d="M1363 343h12"/><path stroke="#00f6ff" d="M1375 343h6"/><path stroke="#00f2ff" d="M1381 343h12"/><path stroke="#04eeff" d="M1393 343h6"/><path stroke="#08eaff" d="M1399 343h6"/><path stroke="#10e6ff" d="M1405 343h6"/><path stroke="#1ce2ff" d="M1411 343h6"/><path stroke="#28deff" d="M1417 343h6"/><path stroke="#34daff" d="M1423 343h6"/><path stroke="#44d6ff" d="M1429 343h6"/><path stroke="#55d2ff" d="M1435 343h6"/><path stroke="#69ceff" d="M1441 343h6"/><path stroke="#7dceff" d="M1447 343h6"/><path stroke="#95ceff" d="M1453 343h6"/><path stroke="#aeceff" d="M1459 343h6"/><path stroke="#c2ceff" d="M1465 343h6"/><path stroke="#d2ceff" d="M1471 343h6"/><path stroke="#decaff" d="M1477 343h6"/><path stroke="#eec6ff" d="M1483 343h6"/><path stroke="#fabeff" d="M1489 343h6"/><path stroke="#ffaaf2" d="M1495 343h6"/><path stroke="#ff95e2" d="M1501 343h6"/><path stroke="#ff85d2" d="M1507 343h6"/><path stroke="#ff75c2" d="M1513 343h6"/><path stroke="#ff69b6" d="M1519 343h6"/><path stroke="#ff61ae" d="M1525 343h6"/><path stroke="#ff59a1" d="M1531 343h6"/><path stroke="#ff5099" d="M1537 343h6"/><path stroke="#ff4891" d="M1543 343h6"/><path stroke="#ff4089" d="M1549 343h6"/><path stroke="#ff3c81" d="M1555 343h6"/><path stroke="#ff347d" d="M1561 343h6"/><path stroke="#ff3075" d="M1567 343h6"/><path stroke="#ff2c71" d="M1573 343h6"/><path stroke="#ff286d" d="M1579 343h6"/><path stroke="#ff2469" d="M1585 343h6"/><path stroke="#ff2065" d="M1591 343h6"/><path stroke="#ff1c61" d="M1597 343h6"/><path stroke="#ff185d" d="M1603 343h6"/><path stroke="#ff1859" d="M1609 343h6"/><path stroke="#ff1455" d="M1615 343h12"/><path stroke="#ff1050" d="M1627 343h12"/><path stroke="#ff0c4c" d="M1639 343h12"/><path stroke="#ff0848" d="M1651 343h12"/><path stroke="#ff0844" d="M1663 343h6"/><path stroke="#ff0444" d="M1669 343h6"/><path stroke="#ff0440" d="M1675 343h24"/><path stroke="#ff003c" d="M1699 343h24"/><path stroke="#ff0038" d="M1723 343h18"/><path stroke="#ff0034" d="M1741 343h18"/><path stroke="#ff0030" d="M1759 343h18"/><path stroke="#ff002c" d="M1777 343h24"/><path stroke="#ff0028" d="M1801 343h24"/><path stroke="#ff0024" d="M1825 343h30"/><path stroke="#ff0020" d="M1855 343h30"/><path stroke="#ff001c" d="M1885 343h24"/><path stroke="#00ffea" d="M1261 349h12"/><path stroke="#00ffee" d="M1273 349h12"/><path stroke="#00fff2" d="M1285 349h12"/><path stroke="#00fff6" d="M1297 349h12"/><path stroke="#00fffa" d="M1309 349h6"/><path stroke="#00ffff" d="M1315 349h12"/><path stroke="#00faff" d="M1327 349h6"/><path stroke="#00f6ff" d="M1333 349h12"/><path stroke="#00f2ff" d="M1345 349h6"/><path stroke="#00eeff" d="M1351 349h12"/><path stroke="#00eaff" d="M1363 349h6"/><path stroke="#00e6ff" d="M1369 349h12"/><path stroke="#00e2ff" d="M1381 349h6"/><path stroke="#00deff" d="M1387 349h6"/><path stroke="#00daff" d="M1393 349h6"/><path stroke="#08d6ff" d="M1399 349h6"/><path stroke="#10d2ff" d="M1405 349h6"/><path stroke="#18ceff" d="M1411 349h6"/><path stroke="#24caff" d="M1417 349h6"/><path stroke="#30c6ff" d="M1423 349h6"/><path stroke="#3cc2ff" d="M1429 349h6"/><path stroke="#4cbeff" d="M1435 349h6"/><path stroke="#5dbeff" d="M1441 349h6"/><path stroke="#71baff" d="M1447 349h6"/><path stroke="#85baff" d="M1453 349h6"/><path stroke="#99baff" d="M1459 349h6"/><path stroke="#aebaff" d="M1465 349h6"/><path stroke="#c2baff" d="M1471 349h6"/><path stroke="#ceb6ff" d="M1477 349h6"/><path stroke="#daaeff" d="M1483 349h6"/><path stroke="#eaaaff" d="M1489 349h6"/><path stroke="#f6a1ff" d="M1495 349h6"/><path stroke="#ff95f6" d="M1501 349h6"/><path stroke="#ff85e6" d="M1507 349h6"/><path stroke="#ff75d6" d="M1513 349h6"/><path stroke="#ff69ca" d="M1519 349h6"/><path stroke="#ff61be" d="M1525 349h6"/><path stroke="#ff55b2" d="M1531 349h6"/><path stroke="#ff4caa" d="M1537 349h6"/><path stroke="#ff48a1" d="M1543 349h6"/><path stroke="#ff4099" d="M1549 349h6"/><path stroke="#ff3891" d="M1555 349h6"/><path stroke="#ff3489" d="M1561 349h6"/><path stroke="#ff3081" d="M1567 349h6"/><path stroke="#ff2c7d" d="M1573 349h6"/><path stroke="#ff2879" d="M1579 349h6"/><path stroke="#ff2475" d="M1585 349h6"/><path stroke="#ff206d" d="M1591 349h6"/><path stroke="#ff1c69" d="M1597 349h6"/><path stroke="#ff1865" d="M1603 349h12"/><path stroke="#ff1461" d="M1615 349h6"/><path stroke="#ff105d" d="M1621 349h6"/><path stroke="#ff1059" d="M1627 349h6"/><path stroke="#ff0c59" d="M1633 349h6"/><path stroke="#ff0c55" d="M1639 349h12"/><path stroke="#ff0850" d="M1651 349h6"/><path stroke="#ff084c" d="M1657 349h12"/><path stroke="#ff044c" d="M1669 349h6"/><path stroke="#ff0448" d="M1675 349h12"/><path stroke="#ff0444" d="M1687 349h6"/><path stroke="#ff0044" d="M1693 349h18"/><path stroke="#ff0040" d="M1711 349h18"/><path stroke="#ff003c" d="M1729 349h12"/><path stroke="#ff0038" d="M1741 349h18"/><path stroke="#ff0034" d="M1759 349h24"/><path stroke="#ff0030" d="M1783 349h18"/><path stroke="#ff002c" d="M1801 349h24"/><path stroke="#ff0028" d="M1825 349h24"/><path stroke="#ff0024" d="M1849 349h30"/><path stroke="#ff0020" d="M1879 349h24"/><path stroke="#00fffa" d="M1267 355h6"/><path stroke="#00ffff" d="M1273 355h12"/><path stroke="#00faff" d="M1285 355h12"/><path stroke="#00f6ff" d="M1297 355h6"/><path stroke="#00f2ff" d="M1303 355h12"/><path stroke="#00eeff" d="M1315 355h12"/><path stroke="#00eaff" d="M1327 355h6"/><path stroke="#00e6ff" d="M1333 355h12"/><path stroke="#00e2ff" d="M1345 355h6"/><path stroke="#00deff" d="M1351 355h12"/><path stroke="#00daff" d="M1363 355h6"/><path stroke="#00d6ff" d="M1369 355h12"/><path stroke="#00d2ff" d="M1381 355h6"/><path stroke="#00ceff" d="M1387 355h12"/><path stroke="#04c6ff" d="M1399 355h6"/><path stroke="#0cc2ff" d="M1405 355h6"/><path stroke="#14beff" d="M1411 355h6"/><path stroke="#20baff" d="M1417 355h6"/><path stroke="#2cb6ff" d="M1423 355h6"/><path stroke="#38b2ff" d="M1429 355h6"/><path stroke="#44aeff" d="M1435 355h6"/><path stroke="#55aaff" d="M1441 355h6"/><path stroke="#65aaff" d="M1447 355h6"/><path stroke="#79a5ff" d="M1453 355h6"/><path stroke="#89a5ff" d="M1459 355h6"/><path stroke="#9da5ff" d="M1465 355h6"/><path stroke="#aea5ff" d="M1471 355h6"/><path stroke="#baa1ff" d="M1477 355h6"/><path stroke="#ca9dff" d="M1483 355h6"/><path stroke="#d699ff" d="M1489 355h6"/><path stroke="#e691ff" d="M1495 355h6"/><path stroke="#f68dff" d="M1501 355h6"/><path stroke="#ff85f6" d="M1507 355h6"/><path stroke="#ff79ea" d="M1513 355h6"/><path stroke="#ff69da" d="M1519 355h6"/><path stroke="#ff61ce" d="M1525 355h6"/><path stroke="#ff55c2" d="M1531 355h6"/><path stroke="#ff4cba" d="M1537 355h6"/><path stroke="#ff44ae" d="M1543 355h6"/><path stroke="#ff40a5" d="M1549 355h6"/><path stroke="#ff389d" d="M1555 355h6"/><path stroke="#ff3495" d="M1561 355h6"/><path stroke="#ff2c91" d="M1567 355h6"/><path stroke="#ff2889" d="M1573 355h6"/><path stroke="#ff2485" d="M1579 355h6"/><path stroke="#ff207d" d="M1585 355h6"/><path stroke="#ff1c79" d="M1591 355h6"/><path stroke="#ff1c75" d="M1597 355h6"/><path stroke="#ff1871" d="M1603 355h6"/><path stroke="#ff146d" d="M1609 355h6"/><path stroke="#ff1469" d="M1615 355h6"/><path stroke="#ff1065" d="M1621 355h12"/><path stroke="#ff0c61" d="M1633 355h6"/><path stroke="#ff0c5d" d="M1639 355h6"/><path stroke="#ff0859" d="M1645 355h12"/><path stroke="#ff0855" d="M1657 355h6"/><path stroke="#ff0455" d="M1663 355h6"/><path stroke="#ff0450" d="M1669 355h18"/><path stroke="#ff004c" d="M1687 355h12"/><path stroke="#ff0048" d="M1699 355h18"/><path stroke="#ff0044" d="M1717 355h18"/><path stroke="#ff0040" d="M1735 355h12"/><path stroke="#ff003c" d="M1747 355h18"/><path stroke="#ff0038" d="M1765 355h18"/><path stroke="#ff0034" d="M1783 355h18"/><path stroke="#ff0030" d="M1801 355h24"/><path stroke="#ff002c" d="M1825 355h24"/><path stroke="#ff0028" d="M1849 355h30"/><path stroke="#ff0024" d="M1879 355h18"/><path stroke="#00f2ff" d="M1267 361h12"/><path stroke="#00eeff" d="M1279 361h12"/><path stroke="#00eaff" d="M1291 361h6"/><path stroke="#00e6ff" d="M1297 361h12"/><path stroke="#00e2ff" d="M1309 361h12"/><path stroke="#00deff" d="M1321 361h6"/><path stroke="#00daff" d="M1327 361h12"/><path stroke="#00d6ff" d="M1339 361h6"/><path stroke="#00d2ff" d="M1345 361h12"/><path stroke="#00ceff" d="M1357 361h12"/><path stroke="#00caff" d="M1369 361h6"/><path stroke="#00c6ff" d="M1375 361h12"/><path stroke="#00c2ff" d="M1387 361h6"/><path stroke="#00beff" d="M1393 361h6"/><path stroke="#04baff" d="M1399 361h6"/><path stroke="#0cb6ff" d="M1405 361h6"/><path stroke="#14b2ff" d="M1411 361h6"/><path stroke="#1caeff" d="M1417 361h6"/><path stroke="#28aaff" d="M1423 361h6"/><path stroke="#34a5ff" d="M1429 361h6"/><path stroke="#40a1ff" d="M1435 361h6"/><path stroke="#4c9dff" d="M1441 361h6"/><path stroke="#5d99ff" d="M1447 361h6"/><path stroke="#6d99ff" d="M1453 361h6"/><path stroke="#7d95ff" d="M1459 361h6"/><path stroke="#8d95ff" d="M1465 361h6"/><path stroke="#9d95ff" d="M1471 361h6"/><path stroke="#ae91ff" d="M1477 361h6"/><path stroke="#ba8dff" d="M1483 361h6"/><path stroke="#c689ff" d="M1489 361h6"/><path stroke="#d685ff" d="M1495 361h6"/><path stroke="#e681ff" d="M1501 361h6"/><path stroke="#f27dff" d="M1507 361h6"/><path stroke="#ff79fa" d="M1513 361h6"/><path stroke="#ff69ee" d="M1519 361h6"/><path stroke="#ff61de" d="M1525 361h6"/><path stroke="#ff55d2" d="M1531 361h6"/><path stroke="#ff4cc6" d="M1537 361h6"/><path stroke="#ff44be" d="M1543 361h6"/><path stroke="#ff3cb6" d="M1549 361h6"/><path stroke="#ff38aa" d="M1555 361h6"/><path stroke="#ff30a1" d="M1561 361h6"/><path stroke="#ff2c9d" d="M1567 361h6"/><path stroke="#ff2895" d="M1573 361h6"/><path stroke="#ff2491" d="M1579 361h6"/><path stroke="#ff2089" d="M1585 361h6"/><path stroke="#ff1c85" d="M1591 361h6"/><path stroke="#ff1881" d="M1597 361h6"/><path stroke="#ff1879" d="M1603 361h6"/><path stroke="#ff1475" d="M1609 361h6"/><path stroke="#ff1071" d="M1615 361h12"/><path stroke="#ff0c6d" d="M1627 361h6"/><path stroke="#ff0c69" d="M1633 361h6"/><path stroke="#ff0865" d="M1639 361h6"/><path stroke="#ff0861" d="M1645 361h12"/><path stroke="#ff045d" d="M1657 361h12"/><path stroke="#ff0459" d="M1669 361h12"/><path stroke="#ff0055" d="M1681 361h12"/><path stroke="#ff0050" d="M1693 361h18"/><path stroke="#ff004c" d="M1711 361h12"/><path stroke="#ff0048" d="M1723 361h12"/><path stroke="#ff0044" d="M1735 361h18"/><path stroke="#ff0040" d="M1753 361h12"/><path stroke="#ff003c" d="M1765 361h18"/><path stroke="#ff0038" d="M1783 361h18"/><path stroke="#ff0034" d="M1801 361h24"/><path stroke="#ff0030" d="M1825 361h24"/><path stroke="#ff002c" d="M1849 361h24"/><path stroke="#ff0028" d="M1873 361h18"/><path stroke="#00e2ff" d="M1273 367h12"/><path stroke="#00deff" d="M1285 367h12"/><path stroke="#00daff" d="M1297 367h6"/><path stroke="#00d6ff" d="M1303 367h12"/><path stroke="#00d2ff" d="M1315 367h12"/><path stroke="#00ceff" d="M1327 367h6"/><path stroke="#00caff" d="M1333 367h12"/><path stroke="#00c6ff" d="M1345 367h12"/><path stroke="#00c2ff" d="M1357 367h6"/><path stroke="#00beff" d="M1363 367h12"/><path stroke="#00baff" d="M1375 367h6"/><path stroke="#00b6ff" d="M1381 367h12"/><path stroke="#00b2ff" d="M1393 367h6"/><path stroke="#04aeff" d="M1399 367h6"/><path stroke="#08aaff" d="M1405 367h6"/><path stroke="#10a5ff" d="M1411 367h6"/><path stroke="#18a1ff" d="M1417 367h6"/><path stroke="#249dff" d="M1423 367h6"/><path stroke="#3099ff" d="M1429 367h6"/><path stroke="#3c95ff" d="M1435 367h6"/><path stroke="#4891ff" d="M1441 367h6"/><path stroke="#558dff" d="M1447 367h6"/><path stroke="#6589ff" d="M1453 367h6"/><path stroke="#7189ff" d="M1459 367h6"/><path stroke="#8189ff" d="M1465 367h6"/><path stroke="#9185ff" d="M1471 367h6"/><path stroke="#9d81ff" d="M1477 367h6"/><path stroke="#ae81ff" d="M1483 367h6"/><path stroke="#ba7dff" d="M1489 367h6"/><path stroke="#c679ff" d="M1495 367h6"/><path stroke="#d675ff" d="M1501 367h6"/><path stroke="#e271ff" d="M1507 367h6"/><path stroke="#f26dff" d="M1513 367h6"/><path stroke="#ff69ff" d="M1519 367h6"/><path stroke="#ff61ee" d="M1525 367h6"/><path stroke="#ff55e2" d="M1531 367h6"/><path stroke="#ff4cd6" d="M1537 367h6"/><path stroke="#ff44ce" d="M1543 367h6"/><path stroke="#ff3cc2" d="M1549 367h6"/><path stroke="#ff38ba" d="M1555 367h6"/><path stroke="#ff30b2" d="M1561 367h6"/><path stroke="#ff2caa" d="M1567 367h6"/><path stroke="#ff28a1" d="M1573 367h6"/><path stroke="#ff2499" d="M1579 367h6"/><path stroke="#ff2095" d="M1585 367h6"/><path stroke="#ff1c8d" d="M1591 367h6"/><path stroke="#ff1889" d="M1597 367h6"/><path stroke="#ff1485" d="M1603 367h6"/><path stroke="#ff1481" d="M1609 367h6"/><path stroke="#ff107d" d="M1615 367h6"/><path stroke="#ff1079" d="M1621 367h6"/><path stroke="#ff0c75" d="M1627 367h6"/><path stroke="#ff0c71" d="M1633 367h6"/><path stroke="#ff086d" d="M1639 367h6"/><path stroke="#ff0869" d="M1645 367h6"/><path stroke="#ff0469" d="M1651 367h6"/><path stroke="#ff0465" d="M1657 367h12"/><path stroke="#ff0461" d="M1669 367h6"/><path stroke="#ff005d" d="M1675 367h18"/><path stroke="#ff0059" d="M1693 367h12"/><path stroke="#ff0055" d="M1705 367h12"/><path stroke="#ff0050" d="M1717 367h12"/><path stroke="#ff004c" d="M1729 367h12"/><path stroke="#ff0048" d="M1741 367h12"/><path stroke="#ff0044" d="M1753 367h18"/><path stroke="#ff0040" d="M1771 367h12"/><path stroke="#ff003c" d="M1783 367h18"/><path stroke="#ff0038" d="M1801 367h24"/><path stroke="#ff0034" d="M1825 367h18"/><path stroke="#ff0030" d="M1843 367h24"/><path stroke="#ff002c" d="M1867 367h18"/><path stroke="#00d6ff" d="M1273 373h12"/><path stroke="#00d2ff" d="M1285 373h6"/><path stroke="#00ceff" d="M1291 373h12"/><path stroke="#00caff" d="M1303 373h12"/><path stroke="#00c6ff" d="M1315 373h12"/><path stroke="#00c2ff" d="M1327 373h6"/><path stroke="#00beff" d="M1333 373h12"/><path stroke="#00baff" d="M1345 373h12"/><path stroke="#00b6ff" d="M1357 373h6"/><path stroke="#00b2ff" d="M1363 373h12"/><path stroke="#00aeff" d="M1375 373h6"/><path stroke="#00aaff" d="M1381 373h12"/><path stroke="#00a5ff" d="M1393 373h6"/><path stroke="#00a1ff" d="M1399 373h6"/><path stroke="#089dff" d="M1405 373h6"/><path stroke="#1099ff" d="M1411 373h6"/><path stroke="#1895ff" d="M1417 373h6"/><path stroke="#2091ff" d="M1423 373h6"/><path stroke="#2c8dff" d="M1429 373h6"/><path stroke="#3489ff" d="M1435 373h6"/><path stroke="#4085ff" d="M1441 373h6"/><path stroke="#4c81ff" d="M1447 373h6"/><path stroke="#5d81ff" d="M1453 373h6"/><path stroke="#697dff" d="M1459 373h6"/><path stroke="#797dff" d="M1465 373h6"/><path stroke="#8579ff" d="M1471 373h6"/><path stroke="#9179ff" d="M1477 373h6"/><path stroke="#a175ff" d="M1483 373h6"/><path stroke="#ae71ff" d="M1489 373h6"/><path stroke="#ba6dff" d="M1495 373h6"/><path stroke="#c66dff" d="M1501 373h6"/><path stroke="#d669ff" d="M1507 373h6"/><path stroke="#e265ff" d="M1513 373h6"/><path stroke="#ee61ff" d="M1519 373h6"/><path stroke="#ff5dff" d="M1525 373h6"/><path stroke="#ff55f2" d="M1531 373h6"/><path stroke="#ff4ce6" d="M1537 373h6"/><path stroke="#ff44da" d="M1543 373h6"/><path stroke="#ff3cd2" d="M1549 373h6"/><path stroke="#ff34c6" d="M1555 373h6"/><path stroke="#ff30be" d="M1561 373h6"/><path stroke="#ff2cb6" d="M1567 373h6"/><path stroke="#ff24ae" d="M1573 373h6"/><path stroke="#ff20a5" d="M1579 373h6"/><path stroke="#ff1ca1" d="M1585 373h6"/><path stroke="#ff1c99" d="M1591 373h6"/><path stroke="#ff1895" d="M1597 373h6"/><path stroke="#ff148d" d="M1603 373h6"/><path stroke="#ff1089" d="M1609 373h6"/><path stroke="#ff1085" d="M1615 373h6"/><path stroke="#ff0c81" d="M1621 373h6"/><path stroke="#ff0c7d" d="M1627 373h6"/><path stroke="#ff0879" d="M1633 373h6"/><path stroke="#ff0875" d="M1639 373h6"/><path stroke="#ff0871" d="M1645 373h6"/><path stroke="#ff0471" d="M1651 373h6"/><path stroke="#ff046d" d="M1657 373h6"/><path stroke="#ff0469" d="M1663 373h6"/><path stroke="#ff0069" d="M1669 373h6"/><path stroke="#ff0065" d="M1675 373h12"/><path stroke="#ff0061" d="M1687 373h12"/><path stroke="#ff005d" d="M1699 373h6"/><path stroke="#ff0059" d="M1705 373h12"/><path stroke="#ff0055" d="M1717 373h12"/><path stroke="#ff0050" d="M1729 373h12"/><path stroke="#ff004c" d="M1741 373h18"/><path stroke="#ff0048" d="M1759 373h12"/><path stroke="#ff0044" d="M1771 373h18"/><path stroke="#ff0040" d="M1789 373h18"/><path stroke="#ff003c" d="M1807 373h18"/><path stroke="#ff0038" d="M1825 373h18"/><path stroke="#ff0034" d="M1843 373h24"/><path stroke="#ff0030" d="M1867 373h12"/><path stroke="#00caff" d="M1273 379h12"/><path stroke="#00c6ff" d="M1285 379h12"/><path stroke="#00c2ff" d="M1297 379h6"/><path stroke="#00beff" d="M1303 379h12"/><path stroke="#00baff" d="M1315 379h12"/><path stroke="#00b6ff" d="M1327 379h12"/><path stroke="#00b2ff" d="M1339 379h6"/><path stroke="#00aeff" d="M1345 379h12"/><path stroke="#00aaff" d="M1357 379h12"/><path stroke="#00a5ff" d="M1369 379h6"/><path stroke="#00a1ff" d="M1375 379h12"/><path stroke="#009dff" d="M1387 379h6"/><path stroke="#0099ff" d="M1393 379h12"/><path stroke="#0491ff" d="M1405 379h6"/><path stroke="#0c8dff" d="M1411 379h6"/><path stroke="#1489ff" d="M1417 379h6"/><path stroke="#1c85ff" d="M1423 379h6"/><path stroke="#2881ff" d="M1429 379h6"/><path stroke="#307dff" d="M1435 379h6"/><path stroke="#3c7dff" d="M1441 379h6"/><path stroke="#4879ff" d="M1447 379h6"/><path stroke="#5575ff" d="M1453 379h6"/><path stroke="#6575ff" d="M1459 379h6"/><path stroke="#7175ff" d="M1465 379h6"/><path stroke="#7d71ff" d="M1471 379h6"/><path stroke="#896dff" d="M1477 379h6"/><path stroke="#9569ff" d="M1483 379h6"/><path stroke="#a169ff" d="M1489 379h6"/><path stroke="#ae65ff" d="M1495 379h6"/><path stroke="#ba61ff" d="M1501 379h6"/><path stroke="#c65dff" d="M1507 379h6"/><path stroke="#d65dff" d="M1513 379h6"/><path stroke="#e259ff" d="M1519 379h6"/><path stroke="#ee55ff" d="M1525 379h6"/><path stroke="#fa50ff" d="M1531 379h6"/><path stroke="#ff4cf6" d="M1537 379h6"/><path stroke="#ff40ea" d="M1543 379h6"/><path stroke="#ff3cde" d="M1549 379h6"/><path stroke="#ff34d2" d="M1555 379h6"/><path stroke="#ff30ca" d="M1561 379h6"/><path stroke="#ff28c2" d="M1567 379h6"/><path stroke="#ff24ba" d="M1573 379h6"/><path stroke="#ff20b2" d="M1579 379h6"/><path stroke="#ff1caa" d="M1585 379h6"/><path stroke="#ff18a5" d="M1591 379h6"/><path stroke="#ff149d" d="M1597 379h6"/><path stroke="#ff1499" d="M1603 379h6"/><path stroke="#ff1095" d="M1609 379h6"/><path stroke="#ff108d" d="M1615 379h6"/><path stroke="#ff0c89" d="M1621 379h6"/><path stroke="#ff0c85" d="M1627 379h6"/><path stroke="#ff0881" d="M1633 379h6"/><path stroke="#ff087d" d="M1639 379h6"/><path stroke="#ff0479" d="M1645 379h12"/><path stroke="#ff0475" d="M1657 379h6"/><path stroke="#ff0071" d="M1663 379h12"/><path stroke="#ff006d" d="M1675 379h6"/><path stroke="#ff0069" d="M1681 379h12"/><path stroke="#ff0065" d="M1693 379h6"/><path stroke="#ff0061" d="M1699 379h12"/><path stroke="#ff005d" d="M1711 379h12"/><path stroke="#ff0059" d="M1723 379h12"/><path stroke="#ff0055" d="M1735 379h12"/><path stroke="#ff0050" d="M1747 379h12"/><path stroke="#ff004c" d="M1759 379h12"/><path stroke="#ff0048" d="M1771 379h18"/><path stroke="#ff0044" d="M1789 379h18"/><path stroke="#ff0040" d="M1807 379h18"/><path stroke="#ff003c" d="M1825 379h18"/><path stroke="#ff0038" d="M1843 379h24"/><path stroke="#ff0034" d="M1867 379h6"/><path stroke="#00beff" d="M1279 385h6"/><path stroke="#00baff" d="M1285 385h12"/><path stroke="#00b6ff" d="M1297 385h12"/><path stroke="#00b2ff" d="M1309 385h12"/><path stroke="#00aeff" d="M1321 385h12"/><path stroke="#00aaff" d="M1333 385h6"/><path stroke="#00a5ff" d="M1339 385h12"/><path stroke="#00a1ff" d="M1351 385h12"/><path stroke="#009dff" d="M1363 385h6"/><path stroke="#0099ff" d="M1369 385h12"/><path stroke="#0095ff" d="M1381 385h12"/><path stroke="#0091ff" d="M1393 385h6"/><path stroke="#008dff" d="M1399 385h6"/><path stroke="#0489ff" d="M1405 385h6"/><path stroke="#0c85ff" d="M1411 385h6"/><path stroke="#1081ff" d="M1417 385h6"/><path stroke="#1c7dff" d="M1423 385h6"/><path stroke="#2479ff" d="M1429 385h6"/><path stroke="#2c75ff" d="M1435 385h6"/><path stroke="#3871ff" d="M1441 385h6"/><path stroke="#4471ff" d="M1447 385h6"/><path stroke="#506dff" d="M1453 385h6"/><path stroke="#5d6dff" d="M1459 385h6"/><path stroke="#6969ff" d="M1465 385h6"/><path stroke="#7569ff" d="M1471 385h6"/><path stroke="#8165ff" d="M1477 385h6"/><path stroke="#8d61ff" d="M1483 385h6"/><path stroke="#9961ff" d="M1489 385h6"/><path stroke="#a55dff" d="M1495 385h6"/><path stroke="#ae59ff" d="M1501 385h6"/><path stroke="#ba55ff" d="M1507 385h6"/><path stroke="#c655ff" d="M1513 385h6"/><path stroke="#d250ff" d="M1519 385h6"/><path stroke="#de4cff" d="M1525 385h6"/><path stroke="#ee48ff" d="M1531 385h6"/><path stroke="#fa48ff" d="M1537 385h6"/><path stroke="#ff40f6" d="M1543 385h6"/><path stroke="#ff38ea" d="M1549 385h6"/><path stroke="#ff34e2" d="M1555 385h6"/><path stroke="#ff2cd6" d="M1561 385h6"/><path stroke="#ff28ce" d="M1567 385h6"/><path stroke="#ff24c6" d="M1573 385h6"/><path stroke="#ff20be" d="M1579 385h6"/><path stroke="#ff1cb6" d="M1585 385h6"/><path stroke="#ff18ae" d="M1591 385h6"/><path stroke="#ff14aa" d="M1597 385h6"/><path stroke="#ff10a1" d="M1603 385h6"/><path stroke="#ff109d" d="M1609 385h6"/><path stroke="#ff0c99" d="M1615 385h6"/><path stroke="#ff0c95" d="M1621 385h6"/><path stroke="#ff088d" d="M1627 385h6"/><path stroke="#ff0889" d="M1633 385h6"/><path stroke="#ff0485" d="M1639 385h12"/><path stroke="#ff0481" d="M1651 385h6"/><path stroke="#ff007d" d="M1657 385h6"/><path stroke="#ff0079" d="M1663 385h6"/><path stroke="#ff0075" d="M1669 385h12"/><path stroke="#ff0071" d="M1681 385h6"/><path stroke="#ff006d" d="M1687 385h12"/><path stroke="#ff0069" d="M1699 385h6"/><path stroke="#ff0065" d="M1705 385h12"/><path stroke="#ff0061" d="M1717 385h12"/><path stroke="#ff005d" d="M1729 385h6"/><path stroke="#ff0059" d="M1735 385h12"/><path stroke="#ff0055" d="M1747 385h12"/><path stroke="#ff0050" d="M1759 385h18"/><path stroke="#ff004c" d="M1777 385h12"/><path stroke="#ff0048" d="M1789 385h18"/><path stroke="#ff0044" d="M1807 385h18"/><path stroke="#ff0040" d="M1825 385h18"/><path stroke="#ff003c" d="M1843 385h18"/><path stroke="#ff0038" d="M1861 385h6"/><path stroke="#00b2ff" d="M1279 391h12"/><path stroke="#00aeff" d="M1291 391h12"/><path stroke="#00aaff" d="M1303 391h12"/><path stroke="#00a5ff" d="M1315 391h12"/><path stroke="#00a1ff" d="M1327 391h12"/><path stroke="#009dff" d="M1339 391h6"/><path stroke="#0099ff" d="M1345 391h12"/><path stroke="#0095ff" d="M1357 391h12"/><path stroke="#0091ff" d="M1369 391h12"/><path stroke="#008dff" d="M1381 391h6"/><path stroke="#0089ff" d="M1387 391h12"/><path stroke="#0085ff" d="M1399 391h6"/><path stroke="#0481ff" d="M1405 391h6"/><path stroke="#087dff" d="M1411 391h6"/><path stroke="#1079ff" d="M1417 391h6"/><path stroke="#1875ff" d="M1423 391h6"/><path stroke="#2071ff" d="M1429 391h6"/><path stroke="#286dff" d="M1435 391h6"/><path stroke="#3469ff" d="M1441 391h6"/><path stroke="#4069ff" d="M1447 391h6"/><path stroke="#4865ff" d="M1453 391h6"/><path stroke="#5565ff" d="M1459 391h6"/><path stroke="#6161ff" d="M1465 391h6"/><path stroke="#6d61ff" d="M1471 391h6"/><path stroke="#795dff" d="M1477 391h6"/><path stroke="#8559ff" d="M1483 391h6"/><path stroke="#8d59ff" d="M1489 391h6"/><path stroke="#9955ff" d="M1495 391h6"/><path stroke="#a550ff" d="M1501 391h6"/><path stroke="#b250ff" d="M1507 391h6"/><path stroke="#be4cff" d="M1513 391h6"/><path stroke="#c648ff" d="M1519 391h6"/><path stroke="#d244ff" d="M1525 391h6"/><path stroke="#de44ff" d="M1531 391h6"/><path stroke="#ea40ff" d="M1537 391h6"/><path stroke="#f63cff" d="M1543 391h6"/><path stroke="#ff38fa" d="M1549 391h6"/><path stroke="#ff30ee" d="M1555 391h6"/><path stroke="#ff2ce6" d="M1561 391h6"/><path stroke="#ff28da" d="M1567 391h6"/><path stroke="#ff20d2" d="M1573 391h6"/><path stroke="#ff1cca" d="M1579 391h6"/><path stroke="#ff18c2" d="M1585 391h6"/><path stroke="#ff18ba" d="M1591 391h6"/><path stroke="#ff14b2" d="M1597 391h6"/><path stroke="#ff10ae" d="M1603 391h6"/><path stroke="#ff0ca5" d="M1609 391h6"/><path stroke="#ff0ca1" d="M1615 391h6"/><path stroke="#ff089d" d="M1621 391h6"/><path stroke="#ff0899" d="M1627 391h6"/><path stroke="#ff0495" d="M1633 391h6"/><path stroke="#ff048d" d="M1639 391h12"/><path stroke="#ff0489" d="M1651 391h6"/><path stroke="#ff0085" d="M1657 391h6"/><path stroke="#ff0081" d="M1663 391h6"/><path stroke="#ff007d" d="M1669 391h6"/><path stroke="#ff0079" d="M1675 391h12"/><path stroke="#ff0075" d="M1687 391h6"/><path stroke="#ff0071" d="M1693 391h6"/><path stroke="#ff006d" d="M1699 391h12"/><path stroke="#ff0069" d="M1711 391h6"/><path stroke="#ff0065" d="M1717 391h12"/><path stroke="#ff0061" d="M1729 391h12"/><path stroke="#ff005d" d="M1741 391h12"/><path stroke="#ff0059" d="M1753 391h12"/><path stroke="#ff0055" d="M1765 391h12"/><path stroke="#ff0050" d="M1777 391h12"/><path stroke="#ff004c" d="M1789 391h18"/><path stroke="#ff0048" d="M1807 391h18"/><path stroke="#ff0044" d="M1825 391h18"/><path stroke="#ff0040" d="M1843 391h18"/><path stroke="#00aaff" d="M1285 397h6"/><path stroke="#00a5ff" d="M1291 397h12"/><path stroke="#00a1ff" d="M1303 397h12"/><path stroke="#009dff" d="M1315 397h6"/><path stroke="#0099ff" d="M1321 397h12"/><path stroke="#0095ff" d="M1333 397h12"/><path stroke="#0091ff" d="M1345 397h12"/><path stroke="#008dff" d="M1357 397h12"/><path stroke="#0089ff" d="M1369 397h6"/><path stroke="#0085ff" d="M1375 397h12"/><path stroke="#0081ff" d="M1387 397h12"/><path stroke="#007dff" d="M1399 397h6"/><path stroke="#0079ff" d="M1405 397h6"/><path stroke="#0875ff" d="M1411 397h6"/><path stroke="#0c71ff" d="M1417 397h6"/><path stroke="#146dff" d="M1423 397h6"/><path stroke="#1c69ff" d="M1429 397h6"/><path stroke="#2865ff" d="M1435 397h6"/><path stroke="#3061ff" d="M1441 397h6"/><path stroke="#3861ff" d="M1447 397h6"/><path stroke="#445dff" d="M1453 397h6"/><path stroke="#505dff" d="M1459 397h6"/><path stroke="#5d59ff" d="M1465 397h6"/><path stroke="#6559ff" d="M1471 397h6"/><path stroke="#7155ff" d="M1477 397h6"/><path stroke="#7d50ff" d="M1483 397h6"/><path stroke="#8550ff" d="M1489 397h6"/><path stroke="#914cff" d="M1495 397h6"/><path stroke="#9d48ff" d="M1501 397h6"/><path stroke="#a548ff" d="M1507 397h6"/><path stroke="#b244ff" d="M1513 397h6"/><path stroke="#be40ff" d="M1519 397h6"/><path stroke="#ca40ff" d="M1525 397h6"/><path stroke="#d23cff" d="M1531 397h6"/><path stroke="#de38ff" d="M1537 397h6"/><path stroke="#ea38ff" d="M1543 397h6"/><path stroke="#f634ff" d="M1549 397h6"/><path stroke="#ff30fa" d="M1555 397h6"/><path stroke="#ff2cf2" d="M1561 397h6"/><path stroke="#ff24e6" d="M1567 397h6"/><path stroke="#ff20de" d="M1573 397h6"/><path stroke="#ff1cd6" d="M1579 397h6"/><path stroke="#ff18ce" d="M1585 397h6"/><path stroke="#ff14c6" d="M1591 397h6"/><path stroke="#ff10be" d="M1597 397h6"/><path stroke="#ff10b6" d="M1603 397h6"/><path stroke="#ff0cb2" d="M1609 397h6"/><path stroke="#ff0caa" d="M1615 397h6"/><path stroke="#ff08a5" d="M1621 397h6"/><path stroke="#ff08a1" d="M1627 397h6"/><path stroke="#ff049d" d="M1633 397h6"/><path stroke="#ff0499" d="M1639 397h6"/><path stroke="#ff0495" d="M1645 397h6"/><path stroke="#ff0091" d="M1651 397h6"/><path stroke="#ff008d" d="M1657 397h6"/><path stroke="#ff0089" d="M1663 397h6"/><path stroke="#ff0085" d="M1669 397h6"/><path stroke="#ff0081" d="M1675 397h6"/><path stroke="#ff007d" d="M1681 397h6"/><path stroke="#ff0079" d="M1687 397h12"/><path stroke="#ff0075" d="M1699 397h6"/><path stroke="#ff0071" d="M1705 397h12"/><path stroke="#ff006d" d="M1717 397h6"/><path stroke="#ff0069" d="M1723 397h12"/><path stroke="#ff0065" d="M1735 397h6"/><path stroke="#ff0061" d="M1741 397h12"/><path stroke="#ff005d" d="M1753 397h12"/><path stroke="#ff0059" d="M1765 397h12"/><path stroke="#ff0055" d="M1777 397h18"/><path stroke="#ff0050" d="M1795 397h12"/><path stroke="#ff004c" d="M1807 397h18"/><path stroke="#ff0048" d="M1825 397h18"/><path stroke="#ff0044" d="M1843 397h12"/><path stroke="#009dff" d="M1285 403h12"/><path stroke="#0099ff" d="M1297 403h12"/><path stroke="#0095ff" d="M1309 403h12"/><path stroke="#0091ff" d="M1321 403h12"/><path stroke="#008dff" d="M1333 403h12"/><path stroke="#0089ff" d="M1345 403h12"/><path stroke="#0085ff" d="M1357 403h12"/><path stroke="#0081ff" d="M1369 403h6"/><path stroke="#007dff" d="M1375 403h12"/><path stroke="#0079ff" d="M1387 403h12"/><path stroke="#0075ff" d="M1399 403h6"/><path stroke="#0071ff" d="M1405 403h6"/><path stroke="#046dff" d="M1411 403h6"/><path stroke="#0c69ff" d="M1417 403h6"/><path stroke="#1465ff" d="M1423 403h6"/><path stroke="#1c61ff" d="M1429 403h6"/><path stroke="#245dff" d="M1435 403h6"/><path stroke="#2c5dff" d="M1441 403h6"/><path stroke="#3459ff" d="M1447 403h6"/><path stroke="#4059ff" d="M1453 403h6"/><path stroke="#4c55ff" d="M1459 403h6"/><path stroke="#5555ff" d="M1465 403h6"/><path stroke="#6150ff" d="M1471 403h6"/><path stroke="#694cff" d="M1477 403h6"/><path stroke="#754cff" d="M1483 403h6"/><path stroke="#7d48ff" d="M1489 403h6"/><path stroke="#8948ff" d="M1495 403h6"/><path stroke="#9544ff" d="M1501 403h6"/><path stroke="#9d40ff" d="M1507 403h6"/><path stroke="#aa40ff" d="M1513 403h6"/><path stroke="#b23cff" d="M1519 403h6"/><path stroke="#be38ff" d="M1525 403h6"/><path stroke="#ca38ff" d="M1531 403h6"/><path stroke="#d234ff" d="M1537 403h6"/><path stroke="#de30ff" d="M1543 403h6"/><path stroke="#ea30ff" d="M1549 403h6"/><path stroke="#f22cff" d="M1555 403h6"/><path stroke="#ff28ff" d="M1561 403h6"/><path stroke="#ff24f2" d="M1567 403h6"/><path stroke="#ff20ea" d="M1573 403h6"/><path stroke="#ff1ce2" d="M1579 403h6"/><path stroke="#ff18d6" d="M1585 403h6"/><path stroke="#ff14ce" d="M1591 403h6"/><path stroke="#ff10ca" d="M1597 403h6"/><path stroke="#ff0cc2" d="M1603 403h6"/><path stroke="#ff0cba" d="M1609 403h6"/><path stroke="#ff08b6" d="M1615 403h6"/><path stroke="#ff08ae" d="M1621 403h6"/><path stroke="#ff04aa" d="M1627 403h6"/><path stroke="#ff04a5" d="M1633 403h6"/><path stroke="#ff04a1" d="M1639 403h6"/><path stroke="#ff009d" d="M1645 403h6"/><path stroke="#ff0099" d="M1651 403h6"/><path stroke="#ff0095" d="M1657 403h6"/><path stroke="#ff0091" d="M1663 403h6"/><path stroke="#ff008d" d="M1669 403h6"/><path stroke="#ff0089" d="M1675 403h6"/><path stroke="#ff0085" d="M1681 403h6"/><path stroke="#ff0081" d="M1687 403h6"/><path stroke="#ff007d" d="M1693 403h6"/><path stroke="#ff0079" d="M1699 403h12"/><path stroke="#ff0075" d="M1711 403h6"/><path stroke="#ff0071" d="M1717 403h12"/><path stroke="#ff006d" d="M1729 403h6"/><path stroke="#ff0069" d="M1735 403h12"/><path stroke="#ff0065" d="M1747 403h12"/><path stroke="#ff0061" d="M1759 403h12"/><path stroke="#ff005d" d="M1771 403h12"/><path stroke="#ff0059" d="M1783 403h12"/><path stroke="#ff0055" d="M1795 403h12"/><path stroke="#ff0050" d="M1807 403h18"/><path stroke="#ff004c" d="M1825 403h18"/><path stroke="#ff0048" d="M1843 403h6"/><path stroke="#0095ff" d="M1285 409h12"/><path stroke="#0091ff" d="M1297 409h12"/><path stroke="#008dff" d="M1309 409h12"/><path stroke="#0089ff" d="M1321 409h12"/><path stroke="#0085ff" d="M1333 409h12"/><path stroke="#0081ff" d="M1345 409h12"/><path stroke="#007dff" d="M1357 409h12"/><path stroke="#0079ff" d="M1369 409h12"/><path stroke="#0075ff" d="M1381 409h6"/><path stroke="#0071ff" d="M1387 409h12"/><path stroke="#006dff" d="M1399 409h12"/><path stroke="#0469ff" d="M1411 409h6"/><path stroke="#0c65ff" d="M1417 409h6"/><path stroke="#1061ff" d="M1423 409h6"/><path stroke="#185dff" d="M1429 409h6"/><path stroke="#2059ff" d="M1435 409h6"/><path stroke="#2855ff" d="M1441 409h6"/><path stroke="#3455ff" d="M1447 409h6"/><path stroke="#3c50ff" d="M1453 409h6"/><path stroke="#4450ff" d="M1459 409h6"/><path stroke="#504cff" d="M1465 409h6"/><path stroke="#594cff" d="M1471 409h6"/><path stroke="#6548ff" d="M1477 409h6"/><path stroke="#6d44ff" d="M1483 409h6"/><path stroke="#7944ff" d="M1489 409h6"/><path stroke="#8140ff" d="M1495 409h6"/><path stroke="#8d3cff" d="M1501 409h6"/><path stroke="#953cff" d="M1507 409h6"/><path stroke="#a138ff" d="M1513 409h6"/><path stroke="#aa38ff" d="M1519 409h6"/><path stroke="#b634ff" d="M1525 409h6"/><path stroke="#be30ff" d="M1531 409h6"/><path stroke="#ca30ff" d="M1537 409h6"/><path stroke="#d22cff" d="M1543 409h6"/><path stroke="#de28ff" d="M1549 409h6"/><path stroke="#e628ff" d="M1555 409h6"/><path stroke="#f224ff" d="M1561 409h6"/><path stroke="#ff20ff" d="M1567 409h6"/><path stroke="#ff1cf6" d="M1573 409h6"/><path stroke="#ff18ea" d="M1579 409h6"/><path stroke="#ff14e2" d="M1585 409h6"/><path stroke="#ff10da" d="M1591 409h6"/><path stroke="#ff10d2" d="M1597 409h6"/><path stroke="#ff0cca" d="M1603 409h6"/><path stroke="#ff08c6" d="M1609 409h6"/><path stroke="#ff08be" d="M1615 409h6"/><path stroke="#ff04ba" d="M1621 409h6"/><path stroke="#ff04b2" d="M1627 409h6"/><path stroke="#ff04ae" d="M1633 409h6"/><path stroke="#ff00aa" d="M1639 409h6"/><path stroke="#ff00a5" d="M1645 409h6"/><path stroke="#ff009d" d="M1651 409h6"/><path stroke="#ff0099" d="M1657 409h6"/><path stroke="#ff0095" d="M1663 409h6"/><path stroke="#ff0091" d="M1669 409h6"/><path stroke="#ff008d" d="M1675 409h6"/><path stroke="#ff0089" d="M1681 409h12"/><path stroke="#ff0085" d="M1693 409h6"/><path stroke="#ff0081" d="M1699 409h6"/><path stroke="#ff007d" d="M1705 409h6"/><path stroke="#ff0079" d="M1711 409h12"/><path stroke="#ff0075" d="M1723 409h6"/><path stroke="#ff0071" d="M1729 409h12"/><path stroke="#ff006d" d="M1741 409h6"/><path stroke="#ff0069" d="M1747 409h12"/><path stroke="#ff0065" d="M1759 409h12"/><path stroke="#ff0061" d="M1771 409h12"/><path stroke="#ff005d" d="M1783 409h12"/><path stroke="#ff0059" d="M1795 409h18"/><path stroke="#ff0055" d="M1813 409h12"/><path stroke="#ff0050" d="M1825 409h18"/><path stroke="#008dff" d="M1291 415h12"/><path stroke="#0089ff" d="M1303 415h12"/><path stroke="#0085ff" d="M1315 415h12"/><path stroke="#0081ff" d="M1327 415h12"/><path stroke="#007dff" d="M1339 415h12"/><path stroke="#0079ff" d="M1351 415h6"/><path stroke="#0075ff" d="M1357 415h12"/><path stroke="#0071ff" d="M1369 415h12"/><path stroke="#006dff" d="M1381 415h12"/><path stroke="#0069ff" d="M1393 415h12"/><path stroke="#0065ff" d="M1405 415h6"/><path stroke="#0461ff" d="M1411 415h6"/><path stroke="#085dff" d="M1417 415h6"/><path stroke="#1059ff" d="M1423 415h6"/><path stroke="#1455ff" d="M1429 415h6"/><path stroke="#1c50ff" d="M1435 415h6"/><path stroke="#2450ff" d="M1441 415h6"/><path stroke="#304cff" d="M1447 415h6"/><path stroke="#384cff" d="M1453 415h6"/><path stroke="#4048ff" d="M1459 415h6"/><path stroke="#4c48ff" d="M1465 415h6"/><path stroke="#5544ff" d="M1471 415h6"/><path stroke="#5d40ff" d="M1477 415h6"/><path stroke="#6940ff" d="M1483 415h6"/><path stroke="#713cff" d="M1489 415h6"/><path stroke="#793cff" d="M1495 415h6"/><path stroke="#8538ff" d="M1501 415h6"/><path stroke="#8d34ff" d="M1507 415h6"/><path stroke="#9934ff" d="M1513 415h6"/><path stroke="#a130ff" d="M1519 415h6"/><path stroke="#aa30ff" d="M1525 415h6"/><path stroke="#b62cff" d="M1531 415h6"/><path stroke="#be28ff" d="M1537 415h6"/><path stroke="#ca28ff" d="M1543 415h6"/><path stroke="#d224ff" d="M1549 415h6"/><path stroke="#de24ff" d="M1555 415h6"/><path stroke="#e620ff" d="M1561 415h6"/><path stroke="#f21cff" d="M1567 415h6"/><path stroke="#fa1cff" d="M1573 415h6"/><path stroke="#ff18f6" d="M1579 415h6"/><path stroke="#ff14ee" d="M1585 415h6"/><path stroke="#ff10e6" d="M1591 415h6"/><path stroke="#ff0cde" d="M1597 415h6"/><path stroke="#ff0cd6" d="M1603 415h6"/><path stroke="#ff08ce" d="M1609 415h6"/><path stroke="#ff04c6" d="M1615 415h6"/><path stroke="#ff04c2" d="M1621 415h6"/><path stroke="#ff04ba" d="M1627 415h6"/><path stroke="#ff00b6" d="M1633 415h6"/><path stroke="#ff00b2" d="M1639 415h6"/><path stroke="#ff00ae" d="M1645 415h6"/><path stroke="#ff00a5" d="M1651 415h6"/><path stroke="#ff00a1" d="M1657 415h6"/><path stroke="#ff009d" d="M1663 415h6"/><path stroke="#ff0099" d="M1669 415h6"/><path stroke="#ff0095" d="M1675 415h6"/><path stroke="#ff0091" d="M1681 415h6"/><path stroke="#ff008d" d="M1687 415h6"/><path stroke="#ff0089" d="M1693 415h6"/><path stroke="#ff0085" d="M1699 415h12"/><path stroke="#ff0081" d="M1711 415h6"/><path stroke="#ff007d" d="M1717 415h6"/><path stroke="#ff0079" d="M1723 415h12"/><path stroke="#ff0075" d="M1735 415h6"/><path stroke="#ff0071" d="M1741 415h12"/><path stroke="#ff006d" d="M1753 415h12"/><path stroke="#ff0069" d="M1765 415h6"/><path stroke="#ff0065" d="M1771 415h12"/><path stroke="#ff0061" d="M1783 415h18"/><path stroke="#ff005d" d="M1801 415h12"/><path stroke="#ff0059" d="M1813 415h12"/><path stroke="#ff0055" d="M1825 415h12"/><path stroke="#0085ff" d="M1291 421h12"/><path stroke="#0081ff" d="M1303 421h12"/><path stroke="#007dff" d="M1315 421h12"/><path stroke="#0079ff" d="M1327 421h12"/><path stroke="#0075ff" d="M1339 421h12"/><path stroke="#0071ff" d="M1351 421h12"/><path stroke="#006dff" d="M1363 421h12"/><path stroke="#0069ff" d="M1375 421h12"/><path stroke="#0065ff" d="M1387 421h12"/><path stroke="#0061ff" d="M1399 421h12"/><path stroke="#005dff" d="M1411 421h6"/><path stroke="#0859ff" d="M1417 421h6"/><path stroke="#0c55ff" d="M1423 421h6"/><path stroke="#1450ff" d="M1429 421h6"/><path stroke="#1c4cff" d="M1435 421h6"/><path stroke="#2448ff" d="M1441 421h6"/><path stroke="#2c48ff" d="M1447 421h6"/><path stroke="#3444ff" d="M1453 421h6"/><path stroke="#3c44ff" d="M1459 421h6"/><path stroke="#4840ff" d="M1465 421h6"/><path stroke="#5040ff" d="M1471 421h6"/><path stroke="#593cff" d="M1477 421h6"/><path stroke="#613cff" d="M1483 421h6"/><path stroke="#6d38ff" d="M1489 421h6"/><path stroke="#7534ff" d="M1495 421h6"/><path stroke="#7d34ff" d="M1501 421h6"/><path stroke="#8530ff" d="M1507 421h6"/><path stroke="#9130ff" d="M1513 421h6"/><path stroke="#992cff" d="M1519 421h6"/><path stroke="#a128ff" d="M1525 421h6"/><path stroke="#ae28ff" d="M1531 421h6"/><path stroke="#b624ff" d="M1537 421h6"/><path stroke="#be24ff" d="M1543 421h6"/><path stroke="#ca20ff" d="M1549 421h6"/><path stroke="#d220ff" d="M1555 421h6"/><path stroke="#de1cff" d="M1561 421h6"/><path stroke="#e618ff" d="M1567 421h6"/><path stroke="#ee18ff" d="M1573 421h6"/><path stroke="#fa14ff" d="M1579 421h6"/><path stroke="#ff10fa" d="M1585 421h6"/><path stroke="#ff10f2" d="M1591 421h6"/><path stroke="#ff0ce6" d="M1597 421h6"/><path stroke="#ff08de" d="M1603 421h6"/><path stroke="#ff08da" d="M1609 421h6"/><path stroke="#ff04d2" d="M1615 421h6"/><path stroke="#ff04ca" d="M1621 421h6"/><path stroke="#ff00c6" d="M1627 421h6"/><path stroke="#ff00be" d="M1633 421h6"/><path stroke="#ff00ba" d="M1639 421h6"/><path stroke="#ff00b2" d="M1645 421h6"/><path stroke="#ff00ae" d="M1651 421h6"/><path stroke="#ff00aa" d="M1657 421h6"/><path stroke="#ff00a5" d="M1663 421h6"/><path stroke="#ff00a1" d="M1669 421h6"/><path stroke="#ff009d" d="M1675 421h6"/><path stroke="#ff0099" d="M1681 421h6"/><path stroke="#ff0095" d="M1687 421h6"/><path stroke="#ff0091" d="M1693 421h6"/><path stroke="#ff008d" d="M1699 421h6"/><path stroke="#ff0089" d="M1705 421h6"/><path stroke="#ff0085" d="M1711 421h12"/><path stroke="#ff0081" d="M1723 421h6"/><path stroke="#ff007d" d="M1729 421h6"/><path stroke="#ff0079" d="M1735 421h12"/><path stroke="#ff0075" d="M1747 421h6"/><path stroke="#ff0071" d="M1753 421h12"/><path stroke="#ff006d" d="M1765 421h12"/><path stroke="#ff0069" d="M1777 421h12"/><path stroke="#ff0065" d="M1789 421h12"/><path stroke="#ff0061" d="M1801 421h12"/><path stroke="#ff005d" d="M1813 421h12"/><path stroke="#ff0059" d="M1825 421h6"/><path stroke="#007dff" d="M1297 427h12"/><path stroke="#0079ff" d="M1309 427h12"/><path stroke="#0075ff" d="M1321 427h12"/><path stroke="#0071ff" d="M1333 427h12"/><path stroke="#006dff" d="M1345 427h12"/><path stroke="#0069ff" d="M1357 427h12"/><path stroke="#0065ff" d="M1369 427h12"/><path stroke="#0061ff" d="M1381 427h12"/><path stroke="#005dff" d="M1393 427h12"/><path stroke="#0059ff" d="M1405 427h6"/><path stroke="#0055ff" d="M1411 427h6"/><path stroke="#0450ff" d="M1417 427h6"/><path stroke="#0c4cff" d="M1423 427h6"/><path stroke="#104cff" d="M1429 427h6"/><path stroke="#1848ff" d="M1435 427h6"/><path stroke="#2044ff" d="M1441 427h6"/><path stroke="#2840ff" d="M1447 427h6"/><path stroke="#3040ff" d="M1453 427h6"/><path stroke="#383cff" d="M1459 427h6"/><path stroke="#443cff" d="M1465 427h6"/><path stroke="#4c38ff" d="M1471 427h6"/><path stroke="#5538ff" d="M1477 427h6"/><path stroke="#5d34ff" d="M1483 427h6"/><path stroke="#6534ff" d="M1489 427h6"/><path stroke="#6d30ff" d="M1495 427h6"/><path stroke="#7930ff" d="M1501 427h6"/><path stroke="#812cff" d="M1507 427h6"/><path stroke="#892cff" d="M1513 427h6"/><path stroke="#9128ff" d="M1519 427h6"/><path stroke="#9924ff" d="M1525 427h6"/><path stroke="#a524ff" d="M1531 427h6"/><path stroke="#ae20ff" d="M1537 427h6"/><path stroke="#b620ff" d="M1543 427h6"/><path stroke="#be1cff" d="M1549 427h6"/><path stroke="#ca1cff" d="M1555 427h6"/><path stroke="#d218ff" d="M1561 427h6"/><path stroke="#da14ff" d="M1567 427h6"/><path stroke="#e614ff" d="M1573 427h6"/><path stroke="#ee10ff" d="M1579 427h6"/><path stroke="#f610ff" d="M1585 427h6"/><path stroke="#ff0cfa" d="M1591 427h6"/><path stroke="#ff08f2" d="M1597 427h6"/><path stroke="#ff08ea" d="M1603 427h6"/><path stroke="#ff04e2" d="M1609 427h6"/><path stroke="#ff04da" d="M1615 427h6"/><path stroke="#ff00d2" d="M1621 427h6"/><path stroke="#ff00ce" d="M1627 427h6"/><path stroke="#ff00c6" d="M1633 427h6"/><path stroke="#ff00c2" d="M1639 427h6"/><path stroke="#ff00ba" d="M1645 427h6"/><path stroke="#ff00b6" d="M1651 427h6"/><path stroke="#ff00b2" d="M1657 427h6"/><path stroke="#ff00ae" d="M1663 427h6"/><path stroke="#ff00aa" d="M1669 427h6"/><path stroke="#ff00a1" d="M1675 427h6"/><path stroke="#ff009d" d="M1681 427h6"/><path stroke="#ff0099" d="M1687 427h6"/><path stroke="#ff0095" d="M1693 427h12"/><path stroke="#ff0091" d="M1705 427h6"/><path stroke="#ff008d" d="M1711 427h6"/><path stroke="#ff0089" d="M1717 427h6"/><path stroke="#ff0085" d="M1723 427h6"/><path stroke="#ff0081" d="M1729 427h12"/><path stroke="#ff007d" d="M1741 427h6"/><path stroke="#ff0079" d="M1747 427h12"/><path stroke="#ff0075" d="M1759 427h12"/><path stroke="#ff0071" d="M1771 427h6"/><path stroke="#ff006d" d="M1777 427h12"/><path stroke="#ff0069" d="M1789 427h12"/><path stroke="#ff0065" d="M1801 427h12"/><path stroke="#ff0061" d="M1813 427h12"/><path stroke="#ff005d" d="M1825 427h6"/><path stroke="#0079ff" d="M1297 433h6"/><path stroke="#0075ff" d="M1303 433h12"/><path stroke="#0071ff" d="M1315 433h12"/><path stroke="#006dff" d="M1327 433h12"/><path stroke="#0069ff" d="M1339 433h12"/><path stroke="#0065ff" d="M1351 433h12"/><path stroke="#0061ff" d="M1363 433h12"/><path stroke="#005dff" d="M1375 433h12"/><path stroke="#0059ff" d="M1387 433h12"/><path stroke="#0055ff" d="M1399 433h12"/><path stroke="#0050ff" d="M1411 433h6"/><path stroke="#044cff" d="M1417 433h6"/><path stroke="#0848ff" d="M1423 433h6"/><path stroke="#1044ff" d="M1429 433h6"/><path stroke="#1844ff" d="M1435 433h6"/><path stroke="#1c40ff" d="M1441 433h6"/><path stroke="#243cff" d="M1447 433h6"/><path stroke="#2c3cff" d="M1453 433h6"/><path stroke="#3838ff" d="M1459 433h6"/><path stroke="#4038ff" d="M1465 433h6"/><path stroke="#4834ff" d="M1471 433h6"/><path stroke="#5034ff" d="M1477 433h6"/><path stroke="#5930ff" d="M1483 433h6"/><path stroke="#6130ff" d="M1489 433h6"/><path stroke="#692cff" d="M1495 433h6"/><path stroke="#712cff" d="M1501 433h6"/><path stroke="#7928ff" d="M1507 433h6"/><path stroke="#8128ff" d="M1513 433h6"/><path stroke="#8d24ff" d="M1519 433h6"/><path stroke="#9520ff" d="M1525 433h6"/><path stroke="#9d20ff" d="M1531 433h6"/><path stroke="#a51cff" d="M1537 433h6"/><path stroke="#ae1cff" d="M1543 433h6"/><path stroke="#b618ff" d="M1549 433h6"/><path stroke="#c218ff" d="M1555 433h6"/><path stroke="#ca14ff" d="M1561 433h6"/><path stroke="#d214ff" d="M1567 433h6"/><path stroke="#da10ff" d="M1573 433h6"/><path stroke="#e60cff" d="M1579 433h6"/><path stroke="#ee0cff" d="M1585 433h6"/><path stroke="#f608ff" d="M1591 433h6"/><path stroke="#ff08ff" d="M1597 433h6"/><path stroke="#ff04f2" d="M1603 433h6"/><path stroke="#ff04ea" d="M1609 433h6"/><path stroke="#ff00e6" d="M1615 433h6"/><path stroke="#ff00de" d="M1621 433h6"/><path stroke="#ff00d6" d="M1627 433h6"/><path stroke="#ff00ce" d="M1633 433h6"/><path stroke="#ff00ca" d="M1639 433h6"/><path stroke="#ff00c2" d="M1645 433h6"/><path stroke="#ff00be" d="M1651 433h6"/><path stroke="#ff00ba" d="M1657 433h6"/><path stroke="#ff00b6" d="M1663 433h6"/><path stroke="#ff00ae" d="M1669 433h6"/><path stroke="#ff00aa" d="M1675 433h6"/><path stroke="#ff00a5" d="M1681 433h6"/><path stroke="#ff00a1" d="M1687 433h6"/><path stroke="#ff009d" d="M1693 433h6"/><path stroke="#ff0099" d="M1699 433h6"/><path stroke="#ff0095" d="M1705 433h6"/><path stroke="#ff0091" d="M1711 433h6"/><path stroke="#ff008d" d="M1717 433h12"/><path stroke="#ff0089" d="M1729 433h6"/><path stroke="#ff0085" d="M1735 433h6"/><path stroke="#ff0081" d="M1741 433h12"/><path stroke="#ff007d" d="M1753 433h6"/><path stroke="#ff0079" d="M1759 433h12"/><path stroke="#ff0075" d="M1771 433h12"/><path stroke="#ff0071" d="M1783 433h6"/><path stroke="#ff006d" d="M1789 433h12"/><path stroke="#ff0069" d="M1801 433h12"/><path stroke="#ff0065" d="M1813 433h12"/><path stroke="#0071ff" d="M1303 439h6"/><path stroke="#006dff" d="M1309 439h12"/><path stroke="#0069ff" d="M1321 439h12"/><path stroke="#0065ff" d="M1333 439h12"/><path stroke="#0061ff" d="M1345 439h18"/><path stroke="#005dff" d="M1363 439h12"/><path stroke="#0059ff" d="M1375 439h12"/><path stroke="#0055ff" d="M1387 439h12"/><path stroke="#0050ff" d="M1399 439h12"/><path stroke="#004cff" d="M1411 439h6"/><path stroke="#0448ff" d="M1417 439h6"/><path stroke="#0844ff" d="M1423 439h6"/><path stroke="#1040ff" d="M1429 439h6"/><path stroke="#1440ff" d="M1435 439h6"/><path stroke="#1c3cff" d="M1441 439h6"/><path stroke="#2438ff" d="M1447 439h6"/><path stroke="#2c38ff" d="M1453 439h6"/><path stroke="#3434ff" d="M1459 439h6"/><path stroke="#3c34ff" d="M1465 439h6"/><path stroke="#4430ff" d="M1471 439h6"/><path stroke="#4c30ff" d="M1477 439h6"/><path stroke="#552cff" d="M1483 439h6"/><path stroke="#5d2cff" d="M1489 439h6"/><path stroke="#6528ff" d="M1495 439h6"/><path stroke="#6d28ff" d="M1501 439h6"/><path stroke="#7524ff" d="M1507 439h6"/><path stroke="#7d24ff" d="M1513 439h6"/><path stroke="#8520ff" d="M1519 439h6"/><path stroke="#8d1cff" d="M1525 439h6"/><path stroke="#951cff" d="M1531 439h6"/><path stroke="#9d18ff" d="M1537 439h6"/><path stroke="#a518ff" d="M1543 439h6"/><path stroke="#ae14ff" d="M1549 439h6"/><path stroke="#ba14ff" d="M1555 439h6"/><path stroke="#c210ff" d="M1561 439h6"/><path stroke="#ca10ff" d="M1567 439h6"/><path stroke="#d20cff" d="M1573 439h6"/><path stroke="#da0cff" d="M1579 439h6"/><path stroke="#e208ff" d="M1585 439h6"/><path stroke="#ee08ff" d="M1591 439h6"/><path stroke="#f604ff" d="M1597 439h6"/><path stroke="#ff04ff" d="M1603 439h6"/><path stroke="#ff00f6" d="M1609 439h6"/><path stroke="#ff00ee" d="M1615 439h6"/><path stroke="#ff00e6" d="M1621 439h6"/><path stroke="#ff00de" d="M1627 439h6"/><path stroke="#ff00da" d="M1633 439h6"/><path stroke="#ff00d2" d="M1639 439h6"/><path stroke="#ff00ca" d="M1645 439h6"/><path stroke="#ff00c6" d="M1651 439h6"/><path stroke="#ff00c2" d="M1657 439h6"/><path stroke="#ff00ba" d="M1663 439h6"/><path stroke="#ff00b6" d="M1669 439h6"/><path stroke="#ff00b2" d="M1675 439h6"/><path stroke="#ff00ae" d="M1681 439h6"/><path stroke="#ff00aa" d="M1687 439h6"/><path stroke="#ff00a5" d="M1693 439h6"/><path stroke="#ff00a1" d="M1699 439h6"/><path stroke="#ff009d" d="M1705 439h6"/><path stroke="#ff0099" d="M1711 439h6"/><path stroke="#ff0095" d="M1717 439h6"/><path stroke="#ff0091" d="M1723 439h6"/><path stroke="#ff008d" d="M1729 439h12"/><path stroke="#ff0089" d="M1741 439h6"/><path stroke="#ff0085" d="M1747 439h6"/><path stroke="#ff0081" d="M1753 439h12"/><path stroke="#ff007d" d="M1765 439h6"/><path stroke="#ff0079" d="M1771 439h12"/><path stroke="#ff0075" d="M1783 439h12"/><path stroke="#ff0071" d="M1795 439h12"/><path stroke="#ff006d" d="M1807 439h6"/><path stroke="#ff0069" d="M1813 439h6"/><path stroke="#0069ff" d="M1303 445h12"/><path stroke="#0065ff" d="M1315 445h18"/><path stroke="#0061ff" d="M1333 445h12"/><path stroke="#005dff" d="M1345 445h12"/><path stroke="#0059ff" d="M1357 445h12"/><path stroke="#0055ff" d="M1369 445h12"/><path stroke="#0050ff" d="M1381 445h12"/><path stroke="#004cff" d="M1393 445h12"/><path stroke="#0048ff" d="M1405 445h12"/><path stroke="#0444ff" d="M1417 445h6"/><path stroke="#0840ff" d="M1423 445h6"/><path stroke="#0c3cff" d="M1429 445h6"/><path stroke="#1438ff" d="M1435 445h6"/><path stroke="#1838ff" d="M1441 445h6"/><path stroke="#2034ff" d="M1447 445h6"/><path stroke="#2834ff" d="M1453 445h6"/><path stroke="#3030ff" d="M1459 445h6"/><path stroke="#3830ff" d="M1465 445h6"/><path stroke="#402cff" d="M1471 445h6"/><path stroke="#482cff" d="M1477 445h6"/><path stroke="#5028ff" d="M1483 445h6"/><path stroke="#5928ff" d="M1489 445h6"/><path stroke="#6124ff" d="M1495 445h6"/><path stroke="#6924ff" d="M1501 445h6"/><path stroke="#7120ff" d="M1507 445h6"/><path stroke="#7520ff" d="M1513 445h6"/><path stroke="#7d1cff" d="M1519 445h6"/><path stroke="#891cff" d="M1525 445h6"/><path stroke="#9118ff" d="M1531 445h6"/><path stroke="#9918ff" d="M1537 445h6"/><path stroke="#a114ff" d="M1543 445h6"/><path stroke="#aa14ff" d="M1549 445h6"/><path stroke="#b210ff" d="M1555 445h6"/><path stroke="#ba10ff" d="M1561 445h6"/><path stroke="#c20cff" d="M1567 445h6"/><path stroke="#ca0cff" d="M1573 445h6"/><path stroke="#d208ff" d="M1579 445h6"/><path stroke="#da08ff" d="M1585 445h6"/><path stroke="#e204ff" d="M1591 445h6"/><path stroke="#ea04ff" d="M1597 445h6"/><path stroke="#f200ff" d="M1603 445h6"/><path stroke="#ff00ff" d="M1609 445h6"/><path stroke="#ff00f6" d="M1615 445h6"/><path stroke="#ff00ee" d="M1621 445h6"/><path stroke="#ff00ea" d="M1627 445h6"/><path stroke="#ff00e2" d="M1633 445h6"/><path stroke="#ff00da" d="M1639 445h6"/><path stroke="#ff00d6" d="M1645 445h6"/><path stroke="#ff00ce" d="M1651 445h6"/><path stroke="#ff00ca" d="M1657 445h6"/><path stroke="#ff00c2" d="M1663 445h6"/><path stroke="#ff00be" d="M1669 445h6"/><path stroke="#ff00ba" d="M1675 445h6"/><path stroke="#ff00b6" d="M1681 445h6"/><path stroke="#ff00ae" d="M1687 445h6"/><path stroke="#ff00aa" d="M1693 445h6"/><path stroke="#ff00a5" d="M1699 445h6"/><path stroke="#ff00a1" d="M1705 445h6"/><path stroke="#ff009d" d="M1711 445h6"/><path stroke="#ff0099" d="M1717 445h12"/><path stroke="#ff0095" d="M1729 445h6"/><path stroke="#ff0091" d="M1735 445h6"/><path stroke="#ff008d" d="M1741 445h6"/><path stroke="#ff0089" d="M1747 445h12"/><path stroke="#ff0085" d="M1759 445h6"/><path stroke="#ff0081" d="M1765 445h12"/><path stroke="#ff007d" d="M1777 445h6"/><path stroke="#ff0079" d="M1783 445h12"/><path stroke="#ff0075" d="M1795 445h12"/><path stroke="#ff0071" d="M1807 445h6"/><path stroke="#0065ff" d="M1309 451h6"/><path stroke="#0061ff" d="M1315 451h12"/><path stroke="#005dff" d="M1327 451h12"/><path stroke="#0059ff" d="M1339 451h18"/><path stroke="#0055ff" d="M1357 451h12"/><path stroke="#0050ff" d="M1369 451h12"/><path stroke="#004cff" d="M1381 451h12"/><path stroke="#0048ff" d="M1393 451h12"/><path stroke="#0044ff" d="M1405 451h12"/><path stroke="#0040ff" d="M1417 451h6"/><path stroke="#043cff" d="M1423 451h6"/><path stroke="#0c38ff" d="M1429 451h6"/><path stroke="#1034ff" d="M1435 451h6"/><path stroke="#1834ff" d="M1441 451h6"/><path stroke="#1c30ff" d="M1447 451h6"/><path stroke="#2430ff" d="M1453 451h6"/><path stroke="#2c2cff" d="M1459 451h6"/><path stroke="#342cff" d="M1465 451h6"/><path stroke="#3c28ff" d="M1471 451h6"/><path stroke="#4428ff" d="M1477 451h6"/><path stroke="#4c24ff" d="M1483 451h6"/><path stroke="#5524ff" d="M1489 451h6"/><path stroke="#5920ff" d="M1495 451h6"/><path stroke="#6120ff" d="M1501 451h6"/><path stroke="#691cff" d="M1507 451h6"/><path stroke="#711cff" d="M1513 451h6"/><path stroke="#7918ff" d="M1519 451h6"/><path stroke="#8118ff" d="M1525 451h6"/><path stroke="#8914ff" d="M1531 451h6"/><path stroke="#9114ff" d="M1537 451h6"/><path stroke="#9910ff" d="M1543 451h6"/><path stroke="#a110ff" d="M1549 451h6"/><path stroke="#aa0cff" d="M1555 451h6"/><path stroke="#b20cff" d="M1561 451h6"/><path stroke="#ba08ff" d="M1567 451h6"/><path stroke="#c208ff" d="M1573 451h6"/><path stroke="#ca04ff" d="M1579 451h6"/><path stroke="#d204ff" d="M1585 451h6"/><path stroke="#da04ff" d="M1591 451h6"/><path stroke="#e200ff" d="M1597 451h6"/><path stroke="#ea00ff" d="M1603 451h6"/><path stroke="#f200ff" d="M1609 451h6"/><path stroke="#fa00ff" d="M1615 451h6"/><path stroke="#ff00fa" d="M1621 451h6"/><path stroke="#ff00f2" d="M1627 451h6"/><path stroke="#ff00ea" d="M1633 451h6"/><path stroke="#ff00e2" d="M1639 451h6"/><path stroke="#ff00de" d="M1645 451h6"/><path stroke="#ff00d6" d="M1651 451h6"/><path stroke="#ff00d2" d="M1657 451h6"/><path stroke="#ff00ca" d="M1663 451h6"/><path stroke="#ff00c6" d="M1669 451h6"/><path stroke="#ff00c2" d="M1675 451h6"/><path stroke="#ff00ba" d="M1681 451h6"/><path stroke="#ff00b6" d="M1687 451h6"/><path stroke="#ff00b2" d="M1693 451h6"/><path stroke="#ff00ae" d="M1699 451h6"/><path stroke="#ff00aa" d="M1705 451h6"/><path stroke="#ff00a5" d="M1711 451h6"/><path stroke="#ff00a1" d="M1717 451h6"/><path stroke="#ff009d" d="M1723 451h6"/><path stroke="#ff0099" d="M1729 451h6"/><path stroke="#ff0095" d="M1735 451h12"/><path stroke="#ff0091" d="M1747 451h6"/><path stroke="#ff008d" d="M1753 451h6"/><path stroke="#ff0089" d="M1759 451h12"/><path stroke="#ff0085" d="M1771 451h6"/><path stroke="#ff0081" d="M1777 451h12"/><path stroke="#ff007d" d="M1789 451h6"/><path stroke="#ff0079" d="M1795 451h12"/><path stroke="#005dff" d="M1309 457h18"/><path stroke="#0059ff" d="M1327 457h12"/><path stroke="#0055ff" d="M1339 457h12"/><path stroke="#0050ff" d="M1351 457h12"/><path stroke="#004cff" d="M1363 457h18"/><path stroke="#0048ff" d="M1381 457h12"/><path stroke="#0044ff" d="M1393 457h12"/><path stroke="#0040ff" d="M1405 457h12"/><path stroke="#003cff" d="M1417 457h6"/><path stroke="#0438ff" d="M1423 457h6"/><path stroke="#0834ff" d="M1429 457h6"/><path stroke="#1034ff" d="M1435 457h6"/><path stroke="#1430ff" d="M1441 457h6"/><path stroke="#1c2cff" d="M1447 457h6"/><path stroke="#242cff" d="M1453 457h6"/><path stroke="#2828ff" d="M1459 457h6"/><path stroke="#3028ff" d="M1465 457h6"/><path stroke="#3824ff" d="M1471 457h6"/><path stroke="#4024ff" d="M1477 457h6"/><path stroke="#4820ff" d="M1483 457h6"/><path stroke="#5020ff" d="M1489 457h6"/><path stroke="#551cff" d="M1495 457h6"/><path stroke="#5d1cff" d="M1501 457h6"/><path stroke="#651cff" d="M1507 457h6"/><path stroke="#6d18ff" d="M1513 457h6"/><path stroke="#7518ff" d="M1519 457h6"/><path stroke="#7d14ff" d="M1525 457h6"/><path stroke="#8514ff" d="M1531 457h6"/><path stroke="#8d10ff" d="M1537 457h6"/><path stroke="#9110ff" d="M1543 457h6"/><path stroke="#990cff" d="M1549 457h6"/><path stroke="#a10cff" d="M1555 457h6"/><path stroke="#aa08ff" d="M1561 457h6"/><path stroke="#b208ff" d="M1567 457h6"/><path stroke="#ba04ff" d="M1573 457h6"/><path stroke="#c204ff" d="M1579 457h6"/><path stroke="#ca00ff" d="M1585 457h6"/><path stroke="#d200ff" d="M1591 457h6"/><path stroke="#da00ff" d="M1597 457h6"/><path stroke="#e200ff" d="M1603 457h6"/><path stroke="#ea00ff" d="M1609 457h6"/><path stroke="#f200ff" d="M1615 457h6"/><path stroke="#fa00ff" d="M1621 457h6"/><path stroke="#ff00fa" d="M1627 457h6"/><path stroke="#ff00f2" d="M1633 457h6"/><path stroke="#ff00ea" d="M1639 457h6"/><path stroke="#ff00e6" d="M1645 457h6"/><path stroke="#ff00de" d="M1651 457h6"/><path stroke="#ff00da" d="M1657 457h6"/><path stroke="#ff00d2" d="M1663 457h6"/><path stroke="#ff00ce" d="M1669 457h6"/><path stroke="#ff00c6" d="M1675 457h6"/><path stroke="#ff00c2" d="M1681 457h6"/><path stroke="#ff00be" d="M1687 457h6"/><path stroke="#ff00ba" d="M1693 457h6"/><path stroke="#ff00b6" d="M1699 457h6"/><path stroke="#ff00b2" d="M1705 457h6"/><path stroke="#ff00aa" d="M1711 457h12"/><path stroke="#ff00a5" d="M1723 457h6"/><path stroke="#ff00a1" d="M1729 457h6"/><path stroke="#ff009d" d="M1735 457h6"/><path stroke="#ff0099" d="M1741 457h6"/><path stroke="#ff0095" d="M1747 457h6"/><path stroke="#ff0091" d="M1753 457h12"/><path stroke="#ff008d" d="M1765 457h6"/><path stroke="#ff0089" d="M1771 457h6"/><path stroke="#ff0085" d="M1777 457h12"/><path stroke="#ff0081" d="M1789 457h12"/><path stroke="#0059ff" d="M1315 463h6"/><path stroke="#0055ff" d="M1321 463h18"/><path stroke="#0050ff" d="M1339 463h12"/><path stroke="#004cff" d="M1351 463h12"/><path stroke="#0048ff" d="M1363 463h12"/><path stroke="#0044ff" d="M1375 463h18"/><path stroke="#0040ff" d="M1393 463h12"/><path stroke="#003cff" d="M1405 463h12"/><path stroke="#0038ff" d="M1417 463h6"/><path stroke="#0434ff" d="M1423 463h6"/><path stroke="#0830ff" d="M1429 463h6"/><path stroke="#0c30ff" d="M1435 463h6"/><path stroke="#142cff" d="M1441 463h6"/><path stroke="#1828ff" d="M1447 463h6"/><path stroke="#2028ff" d="M1453 463h6"/><path stroke="#2824ff" d="M1459 463h6"/><path stroke="#3024ff" d="M1465 463h6"/><path stroke="#3424ff" d="M1471 463h6"/><path stroke="#3c20ff" d="M1477 463h6"/><path stroke="#4420ff" d="M1483 463h6"/><path stroke="#4c1cff" d="M1489 463h6"/><path stroke="#501cff" d="M1495 463h6"/><path stroke="#5918ff" d="M1501 463h6"/><path stroke="#6118ff" d="M1507 463h6"/><path stroke="#6914ff" d="M1513 463h6"/><path stroke="#7114ff" d="M1519 463h6"/><path stroke="#7510ff" d="M1525 463h6"/><path stroke="#7d10ff" d="M1531 463h6"/><path stroke="#850cff" d="M1537 463h6"/><path stroke="#8d0cff" d="M1543 463h6"/><path stroke="#950cff" d="M1549 463h6"/><path stroke="#9d08ff" d="M1555 463h6"/><path stroke="#a508ff" d="M1561 463h6"/><path stroke="#ae04ff" d="M1567 463h6"/><path stroke="#b204ff" d="M1573 463h6"/><path stroke="#ba00ff" d="M1579 463h6"/><path stroke="#c200ff" d="M1585 463h6"/><path stroke="#ca00ff" d="M1591 463h6"/><path stroke="#d200ff" d="M1597 463h6"/><path stroke="#da00ff" d="M1603 463h6"/><path stroke="#e200ff" d="M1609 463h6"/><path stroke="#ea00ff" d="M1615 463h6"/><path stroke="#f200ff" d="M1621 463h6"/><path stroke="#fa00ff" d="M1627 463h6"/><path stroke="#ff00fa" d="M1633 463h6"/><path stroke="#ff00f6" d="M1639 463h6"/><path stroke="#ff00ee" d="M1645 463h6"/><path stroke="#ff00e6" d="M1651 463h6"/><path stroke="#ff00e2" d="M1657 463h6"/><path stroke="#ff00da" d="M1663 463h6"/><path stroke="#ff00d6" d="M1669 463h6"/><path stroke="#ff00ce" d="M1675 463h6"/><path stroke="#ff00ca" d="M1681 463h6"/><path stroke="#ff00c6" d="M1687 463h6"/><path stroke="#ff00be" d="M1693 463h6"/><path stroke="#ff00ba" d="M1699 463h6"/><path stroke="#ff00b6" d="M1705 463h6"/><path stroke="#ff00b2" d="M1711 463h6"/><path stroke="#ff00ae" d="M1717 463h6"/><path stroke="#ff00aa" d="M1723 463h6"/><path stroke="#ff00a5" d="M1729 463h6"/><path stroke="#ff00a1" d="M1735 463h6"/><path stroke="#ff009d" d="M1741 463h12"/><path stroke="#ff0099" d="M1753 463h6"/><path stroke="#ff0095" d="M1759 463h6"/><path stroke="#ff0091" d="M1765 463h6"/><path stroke="#ff008d" d="M1771 463h12"/><path stroke="#ff0089" d="M1783 463h6"/><path stroke="#ff0085" d="M1789 463h6"/><path stroke="#0055ff" d="M1315 469h6"/><path stroke="#0050ff" d="M1321 469h18"/><path stroke="#004cff" d="M1339 469h12"/><path stroke="#0048ff" d="M1351 469h12"/><path stroke="#0044ff" d="M1363 469h12"/><path stroke="#0040ff" d="M1375 469h18"/><path stroke="#003cff" d="M1393 469h12"/><path stroke="#0038ff" d="M1405 469h12"/><path stroke="#0034ff" d="M1417 469h6"/><path stroke="#0430ff" d="M1423 469h6"/><path stroke="#0830ff" d="M1429 469h6"/><path stroke="#0c2cff" d="M1435 469h6"/><path stroke="#1028ff" d="M1441 469h6"/><path stroke="#1828ff" d="M1447 469h6"/><path stroke="#2024ff" d="M1453 469h6"/><path stroke="#2424ff" d="M1459 469h6"/><path stroke="#2c20ff" d="M1465 469h6"/><path stroke="#3420ff" d="M1471 469h6"/><path stroke="#381cff" d="M1477 469h6"/><path stroke="#401cff" d="M1483 469h6"/><path stroke="#4818ff" d="M1489 469h6"/><path stroke="#5018ff" d="M1495 469h6"/><path stroke="#5518ff" d="M1501 469h6"/><path stroke="#5d14ff" d="M1507 469h6"/><path stroke="#6514ff" d="M1513 469h6"/><path stroke="#6d10ff" d="M1519 469h6"/><path stroke="#7110ff" d="M1525 469h6"/><path stroke="#790cff" d="M1531 469h6"/><path stroke="#810cff" d="M1537 469h6"/><path stroke="#8908ff" d="M1543 469h6"/><path stroke="#8d08ff" d="M1549 469h6"/><path stroke="#9508ff" d="M1555 469h6"/><path stroke="#9d04ff" d="M1561 469h6"/><path stroke="#a504ff" d="M1567 469h6"/><path stroke="#ae00ff" d="M1573 469h6"/><path stroke="#b600ff" d="M1579 469h6"/><path stroke="#ba00ff" d="M1585 469h6"/><path stroke="#c200ff" d="M1591 469h6"/><path stroke="#ca00ff" d="M1597 469h6"/><path stroke="#d200ff" d="M1603 469h6"/><path stroke="#da00ff" d="M1609 469h6"/><path stroke="#e200ff" d="M1615 469h6"/><path stroke="#ea00ff" d="M1621 469h6"/><path stroke="#ee00ff" d="M1627 469h6"/><path stroke="#f600ff" d="M1633 469h6"/><path stroke="#ff00ff" d="M1639 469h6"/><path stroke="#ff00f6" d="M1645 469h6"/><path stroke="#ff00ee" d="M1651 469h6"/><path stroke="#ff00ea" d="M1657 469h6"/><path stroke="#ff00e2" d="M1663 469h6"/><path stroke="#ff00da" d="M1669 469h6"/><path stroke="#ff00d6" d="M1675 469h6"/><path stroke="#ff00d2" d="M1681 469h6"/><path stroke="#ff00ca" d="M1687 469h6"/><path stroke="#ff00c6" d="M1693 469h6"/><path stroke="#ff00c2" d="M1699 469h6"/><path stroke="#ff00be" d="M1705 469h6"/><path stroke="#ff00ba" d="M1711 469h6"/><path stroke="#ff00b6" d="M1717 469h6"/><path stroke="#ff00b2" d="M1723 469h6"/><path stroke="#ff00ae" d="M1729 469h6"/><path stroke="#ff00aa" d="M1735 469h6"/><path stroke="#ff00a5" d="M1741 469h6"/><path stroke="#ff00a1" d="M1747 469h6"/><path stroke="#ff009d" d="M1753 469h6"/><path stroke="#ff0099" d="M1759 469h6"/><path stroke="#ff0095" d="M1765 469h12"/><path stroke="#ff0091" d="M1777 469h6"/><path stroke="#ff008d" d="M1783 469h6"/><path stroke="#004cff" d="M1321 475h18"/><path stroke="#0048ff" d="M1339 475h12"/><path stroke="#0044ff" d="M1351 475h12"/><path stroke="#0040ff" d="M1363 475h18"/><path stroke="#003cff" d="M1381 475h12"/><path stroke="#0038ff" d="M1393 475h12"/><path stroke="#0034ff" d="M1405 475h12"/><path stroke="#0030ff" d="M1417 475h12"/><path stroke="#042cff" d="M1429 475h6"/><path stroke="#0c28ff" d="M1435 475h6"/><path stroke="#1024ff" d="M1441 475h6"/><path stroke="#1424ff" d="M1447 475h6"/><path stroke="#1c20ff" d="M1453 475h6"/><path stroke="#2420ff" d="M1459 475h6"/><path stroke="#281cff" d="M1465 475h6"/><path stroke="#301cff" d="M1471 475h6"/><path stroke="#381cff" d="M1477 475h6"/><path stroke="#3c18ff" d="M1483 475h6"/><path stroke="#4418ff" d="M1489 475h6"/><path stroke="#4c14ff" d="M1495 475h6"/><path stroke="#5014ff" d="M1501 475h6"/><path stroke="#5910ff" d="M1507 475h6"/><path stroke="#6110ff" d="M1513 475h6"/><path stroke="#6510ff" d="M1519 475h6"/><path stroke="#6d0cff" d="M1525 475h6"/><path stroke="#750cff" d="M1531 475h6"/><path stroke="#7d08ff" d="M1537 475h6"/><path stroke="#8108ff" d="M1543 475h6"/><path stroke="#8904ff" d="M1549 475h6"/><path stroke="#9104ff" d="M1555 475h6"/><path stroke="#9904ff" d="M1561 475h6"/><path stroke="#9d00ff" d="M1567 475h6"/><path stroke="#a500ff" d="M1573 475h6"/><path stroke="#ae00ff" d="M1579 475h6"/><path stroke="#b600ff" d="M1585 475h6"/><path stroke="#be00ff" d="M1591 475h6"/><path stroke="#c200ff" d="M1597 475h6"/><path stroke="#ca00ff" d="M1603 475h6"/><path stroke="#d200ff" d="M1609 475h6"/><path stroke="#da00ff" d="M1615 475h6"/><path stroke="#de00ff" d="M1621 475h6"/><path stroke="#e600ff" d="M1627 475h6"/><path stroke="#ee00ff" d="M1633 475h6"/><path stroke="#f600ff" d="M1639 475h6"/><path stroke="#ff00ff" d="M1645 475h6"/><path stroke="#ff00f6" d="M1651 475h6"/><path stroke="#ff00f2" d="M1657 475h6"/><path stroke="#ff00ea" d="M1663 475h6"/><path stroke="#ff00e2" d="M1669 475h6"/><path stroke="#ff00de" d="M1675 475h6"/><path stroke="#ff00d6" d="M1681 475h6"/><path stroke="#ff00d2" d="M1687 475h6"/><path stroke="#ff00ce" d="M1693 475h6"/><path stroke="#ff00ca" d="M1699 475h6"/><path stroke="#ff00c2" d="M1705 475h6"/><path stroke="#ff00be" d="M1711 475h6"/><path stroke="#ff00ba" d="M1717 475h6"/><path stroke="#ff00b6" d="M1723 475h6"/><path stroke="#ff00b2" d="M1729 475h6"/><path stroke="#ff00ae" d="M1735 475h6"/><path stroke="#ff00aa" d="M1741 475h6"/><path stroke="#ff00a5" d="M1747 475h6"/><path stroke="#ff00a1" d="M1753 475h12"/><path stroke="#ff009d" d="M1765 475h6"/><path stroke="#ff0099" d="M1771 475h6"/><path stroke="#ff0095" d="M1777 475h6"/><path stroke="#0048ff" d="M1321 481h18"/><path stroke="#0044ff" d="M1339 481h12"/><path stroke="#0040ff" d="M1351 481h12"/><path stroke="#003cff" d="M1363 481h18"/><path stroke="#0038ff" d="M1381 481h12"/><path stroke="#0034ff" d="M1393 481h12"/><path stroke="#0030ff" d="M1405 481h18"/><path stroke="#002cff" d="M1423 481h6"/><path stroke="#0428ff" d="M1429 481h6"/><path stroke="#0824ff" d="M1435 481h6"/><path stroke="#1024ff" d="M1441 481h6"/><path stroke="#1420ff" d="M1447 481h6"/><path stroke="#1820ff" d="M1453 481h6"/><path stroke="#201cff" d="M1459 481h6"/><path stroke="#281cff" d="M1465 481h6"/><path stroke="#2c18ff" d="M1471 481h6"/><path stroke="#3418ff" d="M1477 481h6"/><path stroke="#3c18ff" d="M1483 481h6"/><path stroke="#4014ff" d="M1489 481h6"/><path stroke="#4814ff" d="M1495 481h6"/><path stroke="#4c10ff" d="M1501 481h6"/><path stroke="#5510ff" d="M1507 481h6"/><path stroke="#5d0cff" d="M1513 481h6"/><path stroke="#610cff" d="M1519 481h6"/><path stroke="#690cff" d="M1525 481h6"/><path stroke="#7108ff" d="M1531 481h6"/><path stroke="#7908ff" d="M1537 481h6"/><path stroke="#7d04ff" d="M1543 481h6"/><path stroke="#8504ff" d="M1549 481h6"/><path stroke="#8d04ff" d="M1555 481h6"/><path stroke="#9100ff" d="M1561 481h6"/><path stroke="#9900ff" d="M1567 481h6"/><path stroke="#a100ff" d="M1573 481h6"/><path stroke="#a500ff" d="M1579 481h6"/><path stroke="#ae00ff" d="M1585 481h6"/><path stroke="#b600ff" d="M1591 481h6"/><path stroke="#be00ff" d="M1597 481h6"/><path stroke="#c200ff" d="M1603 481h6"/><path stroke="#ca00ff" d="M1609 481h6"/><path stroke="#d200ff" d="M1615 481h6"/><path stroke="#da00ff" d="M1621 481h6"/><path stroke="#de00ff" d="M1627 481h6"/><path stroke="#e600ff" d="M1633 481h6"/><path stroke="#ee00ff" d="M1639 481h6"/><path stroke="#f600ff" d="M1645 481h6"/><path stroke="#ff00ff" d="M1651 481h6"/><path stroke="#ff00fa" d="M1657 481h6"/><path stroke="#ff00f2" d="M1663 481h6"/><path stroke="#ff00ea" d="M1669 481h6"/><path stroke="#ff00e6" d="M1675 481h6"/><path stroke="#ff00de" d="M1681 481h6"/><path stroke="#ff00da" d="M1687 481h6"/><path stroke="#ff00d6" d="M1693 481h6"/><path stroke="#ff00ce" d="M1699 481h6"/><path stroke="#ff00ca" d="M1705 481h6"/><path stroke="#ff00c6" d="M1711 481h6"/><path stroke="#ff00c2" d="M1717 481h6"/><path stroke="#ff00be" d="M1723 481h6"/><path stroke="#ff00ba" d="M1729 481h6"/><path stroke="#ff00b6" d="M1735 481h6"/><path stroke="#ff00b2" d="M1741 481h6"/><path stroke="#ff00ae" d="M1747 481h6"/><path stroke="#ff00aa" d="M1753 481h6"/><path stroke="#ff00a5" d="M1759 481h6"/><path stroke="#ff00a1" d="M1765 481h6"/><path stroke="#ff009d" d="M1771 481h6"/><path stroke="#0044ff" d="M1327 487h12"/><path stroke="#0040ff" d="M1339 487h12"/><path stroke="#003cff" d="M1351 487h18"/><path stroke="#0038ff" d="M1369 487h12"/><path stroke="#0034ff" d="M1381 487h12"/><path stroke="#0030ff" d="M1393 487h18"/><path stroke="#002cff" d="M1411 487h12"/><path stroke="#0028ff" d="M1423 487h6"/><path stroke="#0424ff" d="M1429 487h6"/><path stroke="#0824ff" d="M1435 487h6"/><path stroke="#0c20ff" d="M1441 487h6"/><path stroke="#141cff" d="M1447 487h6"/><path stroke="#181cff" d="M1453 487h6"/><path stroke="#201cff" d="M1459 487h6"/><path stroke="#2418ff" d="M1465 487h6"/><path stroke="#2c18ff" d="M1471 487h6"/><path stroke="#3014ff" d="M1477 487h6"/><path stroke="#3814ff" d="M1483 487h6"/><path stroke="#3c10ff" d="M1489 487h6"/><path stroke="#4410ff" d="M1495 487h6"/><path stroke="#4c10ff" d="M1501 487h6"/><path stroke="#500cff" d="M1507 487h6"/><path stroke="#590cff" d="M1513 487h6"/><path stroke="#6108ff" d="M1519 487h6"/><path stroke="#6508ff" d="M1525 487h6"/><path stroke="#6d08ff" d="M1531 487h6"/><path stroke="#7104ff" d="M1537 487h6"/><path stroke="#7904ff" d="M1543 487h6"/><path stroke="#8104ff" d="M1549 487h6"/><path stroke="#8500ff" d="M1555 487h6"/><path stroke="#8d00ff" d="M1561 487h6"/><path stroke="#9500ff" d="M1567 487h6"/><path stroke="#9900ff" d="M1573 487h6"/><path stroke="#a100ff" d="M1579 487h6"/><path stroke="#aa00ff" d="M1585 487h6"/><path stroke="#ae00ff" d="M1591 487h6"/><path stroke="#b600ff" d="M1597 487h6"/><path stroke="#be00ff" d="M1603 487h6"/><path stroke="#c200ff" d="M1609 487h6"/><path stroke="#ca00ff" d="M1615 487h6"/><path stroke="#d200ff" d="M1621 487h6"/><path stroke="#da00ff" d="M1627 487h6"/><path stroke="#de00ff" d="M1633 487h6"/><path stroke="#e600ff" d="M1639 487h6"/><path stroke="#ee00ff" d="M1645 487h6"/><path stroke="#f200ff" d="M1651 487h6"/><path stroke="#fa00ff" d="M1657 487h6"/><path stroke="#ff00fa" d="M1663 487h6"/><path stroke="#ff00f2" d="M1669 487h6"/><path stroke="#ff00ee" d="M1675 487h6"/><path stroke="#ff00e6" d="M1681 487h6"/><path stroke="#ff00e2" d="M1687 487h6"/><path stroke="#ff00da" d="M1693 487h6"/><path stroke="#ff00d6" d="M1699 487h6"/><path stroke="#ff00d2" d="M1705 487h6"/><path stroke="#ff00ce" d="M1711 487h6"/><path stroke="#ff00c6" d="M1717 487h6"/><path stroke="#ff00c2" d="M1723 487h6"/><path stroke="#ff00be" d="M1729 487h6"/><path stroke="#ff00ba" d="M1735 487h6"/><path stroke="#ff00b6" d="M1741 487h6"/><path stroke="#ff00b2" d="M1747 487h6"/><path stroke="#ff00ae" d="M1753 487h6"/><path stroke="#ff00aa" d="M1759 487h6"/><path stroke="#ff00a5" d="M1765 487h6"/><path stroke="#0040ff" d="M1333 493h6"/><path stroke="#003cff" d="M1339 493h18"/><path stroke="#0038ff" d="M1357 493h12"/><path stroke="#0034ff" d="M1369 493h18"/><path stroke="#0030ff" d="M1387 493h12"/><path stroke="#002cff" d="M1399 493h12"/><path stroke="#0028ff" d="M1411 493h18"/><path stroke="#0424ff" d="M1429 493h6"/><path stroke="#0820ff" d="M1435 493h6"/><path stroke="#0c1cff" d="M1441 493h6"/><path stroke="#101cff" d="M1447 493h6"/><path stroke="#1818ff" d="M1453 493h6"/><path stroke="#1c18ff" d="M1459 493h6"/><path stroke="#2414ff" d="M1465 493h6"/><path stroke="#2814ff" d="M1471 493h6"/><path stroke="#3014ff" d="M1477 493h6"/><path stroke="#3410ff" d="M1483 493h6"/><path stroke="#3c10ff" d="M1489 493h6"/><path stroke="#400cff" d="M1495 493h6"/><path stroke="#480cff" d="M1501 493h6"/><path stroke="#4c0cff" d="M1507 493h6"/><path stroke="#5508ff" d="M1513 493h6"/><path stroke="#5d08ff" d="M1519 493h6"/><path stroke="#6108ff" d="M1525 493h6"/><path stroke="#6904ff" d="M1531 493h6"/><path stroke="#6d04ff" d="M1537 493h6"/><path stroke="#7500ff" d="M1543 493h6"/><path stroke="#7d00ff" d="M1549 493h6"/><path stroke="#8100ff" d="M1555 493h6"/><path stroke="#8900ff" d="M1561 493h6"/><path stroke="#8d00ff" d="M1567 493h6"/><path stroke="#9500ff" d="M1573 493h6"/><path stroke="#9d00ff" d="M1579 493h6"/><path stroke="#a100ff" d="M1585 493h6"/><path stroke="#aa00ff" d="M1591 493h6"/><path stroke="#b200ff" d="M1597 493h6"/><path stroke="#b600ff" d="M1603 493h6"/><path stroke="#be00ff" d="M1609 493h6"/><path stroke="#c200ff" d="M1615 493h6"/><path stroke="#ca00ff" d="M1621 493h6"/><path stroke="#d200ff" d="M1627 493h6"/><path stroke="#d600ff" d="M1633 493h6"/><path stroke="#de00ff" d="M1639 493h6"/><path stroke="#e600ff" d="M1645 493h6"/><path stroke="#ee00ff" d="M1651 493h6"/><path stroke="#f200ff" d="M1657 493h6"/><path stroke="#fa00ff" d="M1663 493h6"/><path stroke="#ff00fa" d="M1669 493h6"/><path stroke="#ff00f6" d="M1675 493h6"/><path stroke="#ff00ee" d="M1681 493h6"/><path stroke="#ff00ea" d="M1687 493h6"/><path stroke="#ff00e2" d="M1693 493h6"/><path stroke="#ff00de" d="M1699 493h6"/><path stroke="#ff00d6" d="M1705 493h6"/><path stroke="#ff00d2" d="M1711 493h6"/><path stroke="#ff00ce" d="M1717 493h6"/><path stroke="#ff00ca" d="M1723 493h6"/><path stroke="#ff00c6" d="M1729 493h6"/><path stroke="#ff00c2" d="M1735 493h6"/><path stroke="#ff00be" d="M1741 493h6"/><path stroke="#ff00ba" d="M1747 493h6"/><path stroke="#ff00b6" d="M1753 493h6"/><path stroke="#ff00b2" d="M1759 493h6"/><path stroke="#003cff" d="M1333 499h12"/><path stroke="#0038ff" d="M1345 499h12"/><path stroke="#0034ff" d="M1357 499h18"/><path stroke="#0030ff" d="M1375 499h12"/><path stroke="#002cff" d="M1387 499h18"/><path stroke="#0028ff" d="M1405 499h12"/><path stroke="#0024ff" d="M1417 499h12"/><path stroke="#0020ff" d="M1429 499h6"/><path stroke="#041cff" d="M1435 499h6"/><path stroke="#0c1cff" d="M1441 499h6"/><path stroke="#1018ff" d="M1447 499h6"/><path stroke="#1418ff" d="M1453 499h6"/><path stroke="#1c14ff" d="M1459 499h6"/><path stroke="#2014ff" d="M1465 499h6"/><path stroke="#2814ff" d="M1471 499h6"/><path stroke="#2c10ff" d="M1477 499h6"/><path stroke="#3410ff" d="M1483 499h6"/><path stroke="#380cff" d="M1489 499h6"/><path stroke="#400cff" d="M1495 499h6"/><path stroke="#440cff" d="M1501 499h6"/><path stroke="#4c08ff" d="M1507 499h6"/><path stroke="#5008ff" d="M1513 499h6"/><path stroke="#5904ff" d="M1519 499h6"/><path stroke="#5d04ff" d="M1525 499h6"/><path stroke="#6504ff" d="M1531 499h6"/><path stroke="#6d00ff" d="M1537 499h6"/><path stroke="#7100ff" d="M1543 499h6"/><path stroke="#7900ff" d="M1549 499h6"/><path stroke="#7d00ff" d="M1555 499h6"/><path stroke="#8500ff" d="M1561 499h6"/><path stroke="#8900ff" d="M1567 499h6"/><path stroke="#9100ff" d="M1573 499h6"/><path stroke="#9500ff" d="M1579 499h6"/><path stroke="#9d00ff" d="M1585 499h6"/><path stroke="#a100ff" d="M1591 499h6"/><path stroke="#aa00ff" d="M1597 499h6"/><path stroke="#b200ff" d="M1603 499h6"/><path stroke="#b600ff" d="M1609 499h6"/><path stroke="#be00ff" d="M1615 499h6"/><path stroke="#c200ff" d="M1621 499h6"/><path stroke="#ca00ff" d="M1627 499h6"/><path stroke="#d200ff" d="M1633 499h6"/><path stroke="#d600ff" d="M1639 499h6"/><path stroke="#de00ff" d="M1645 499h6"/><path stroke="#e600ff" d="M1651 499h6"/><path stroke="#ea00ff" d="M1657 499h6"/><path stroke="#f200ff" d="M1663 499h6"/><path stroke="#fa00ff" d="M1669 499h6"/><path stroke="#ff00ff" d="M1675 499h6"/><path stroke="#ff00f6" d="M1681 499h6"/><path stroke="#ff00ee" d="M1687 499h6"/><path stroke="#ff00ea" d="M1693 499h6"/><path stroke="#ff00e6" d="M1699 499h6"/><path stroke="#ff00de" d="M1705 499h6"/><path stroke="#ff00da" d="M1711 499h6"/><path stroke="#ff00d6" d="M1717 499h6"/><path stroke="#ff00ce" d="M1723 499h6"/><path stroke="#ff00ca" d="M1729 499h6"/><path stroke="#ff00c6" d="M1735 499h6"/><path stroke="#ff00c2" d="M1741 499h6"/><path stroke="#ff00be" d="M1747 499h6"/><path stroke="#ff00ba" d="M1753 499h6"/><path stroke="#0038ff" d="M1339 505h6"/><path stroke="#0034ff" d="M1345 505h18"/><path stroke="#0030ff" d="M1363 505h12"/><path stroke="#002cff" d="M1375 505h18"/><path stroke="#0028ff" d="M1393 505h12"/><path stroke="#0024ff" d="M1405 505h18"/><path stroke="#0020ff" d="M1423 505h12"/><path stroke="#041cff" d="M1435 505h6"/><path stroke="#0818ff" d="M1441 505h6"/><path stroke="#0c18ff" d="M1447 505h6"/><path stroke="#1414ff" d="M1453 505h6"/><path stroke="#1814ff" d="M1459 505h6"/><path stroke="#2010ff" d="M1465 505h6"/><path stroke="#2410ff" d="M1471 505h6"/><path stroke="#2c10ff" d="M1477 505h6"/><path stroke="#300cff" d="M1483 505h6"/><path stroke="#380cff" d="M1489 505h6"/><path stroke="#3c08ff" d="M1495 505h6"/><path stroke="#4408ff" d="M1501 505h6"/><path stroke="#4808ff" d="M1507 505h6"/><path stroke="#5004ff" d="M1513 505h6"/><path stroke="#5504ff" d="M1519 505h6"/><path stroke="#5d04ff" d="M1525 505h6"/><path stroke="#6100ff" d="M1531 505h6"/><path stroke="#6900ff" d="M1537 505h6"/><path stroke="#6d00ff" d="M1543 505h6"/><path stroke="#7500ff" d="M1549 505h6"/><path stroke="#7900ff" d="M1555 505h6"/><path stroke="#8100ff" d="M1561 505h6"/><path stroke="#8500ff" d="M1567 505h6"/><path stroke="#8d00ff" d="M1573 505h6"/><path stroke="#9100ff" d="M1579 505h6"/><path stroke="#9900ff" d="M1585 505h6"/><path stroke="#9d00ff" d="M1591 505h6"/><path stroke="#a500ff" d="M1597 505h6"/><path stroke="#aa00ff" d="M1603 505h6"/><path stroke="#b200ff" d="M1609 505h6"/><path stroke="#b600ff" d="M1615 505h6"/><path stroke="#be00ff" d="M1621 505h6"/><path stroke="#c600ff" d="M1627 505h6"/><path stroke="#ca00ff" d="M1633 505h6"/><path stroke="#d200ff" d="M1639 505h6"/><path stroke="#d600ff" d="M1645 505h6"/><path stroke="#de00ff" d="M1651 505h6"/><path stroke="#e600ff" d="M1657 505h6"/><path stroke="#ea00ff" d="M1663 505h6"/><path stroke="#f200ff" d="M1669 505h6"/><path stroke="#f600ff" d="M1675 505h6"/><path stroke="#ff00ff" d="M1681 505h6"/><path stroke="#ff00f6" d="M1687 505h6"/><path stroke="#ff00f2" d="M1693 505h6"/><path stroke="#ff00ea" d="M1699 505h6"/><path stroke="#ff00e6" d="M1705 505h6"/><path stroke="#ff00e2" d="M1711 505h6"/><path stroke="#ff00da" d="M1717 505h6"/><path stroke="#ff00d6" d="M1723 505h6"/><path stroke="#ff00d2" d="M1729 505h6"/><path stroke="#ff00ce" d="M1735 505h6"/><path stroke="#ff00ca" d="M1741 505h6"/><path stroke="#ff00c6" d="M1747 505h6"/><path stroke="#0034ff" d="M1339 511h12"/><path stroke="#0030ff" d="M1351 511h12"/><path stroke="#002cff" d="M1363 511h18"/><path stroke="#0028ff" d="M1381 511h18"/><path stroke="#0024ff" d="M1399 511h12"/><path stroke="#0020ff" d="M1411 511h18"/><path stroke="#001cff" d="M1429 511h6"/><path stroke="#0418ff" d="M1435 511h6"/><path stroke="#0818ff" d="M1441 511h6"/><path stroke="#0c14ff" d="M1447 511h6"/><path stroke="#1014ff" d="M1453 511h6"/><path stroke="#1810ff" d="M1459 511h6"/><path stroke="#1c10ff" d="M1465 511h6"/><path stroke="#240cff" d="M1471 511h6"/><path stroke="#280cff" d="M1477 511h6"/><path stroke="#300cff" d="M1483 511h6"/><path stroke="#3408ff" d="M1489 511h6"/><path stroke="#3808ff" d="M1495 511h6"/><path stroke="#4008ff" d="M1501 511h6"/><path stroke="#4404ff" d="M1507 511h6"/><path stroke="#4c04ff" d="M1513 511h6"/><path stroke="#5004ff" d="M1519 511h6"/><path stroke="#5900ff" d="M1525 511h6"/><path stroke="#5d00ff" d="M1531 511h6"/><path stroke="#6500ff" d="M1537 511h6"/><path stroke="#6900ff" d="M1543 511h6"/><path stroke="#7100ff" d="M1549 511h6"/><path stroke="#7500ff" d="M1555 511h6"/><path stroke="#7d00ff" d="M1561 511h6"/><path stroke="#8100ff" d="M1567 511h6"/><path stroke="#8500ff" d="M1573 511h6"/><path stroke="#8d00ff" d="M1579 511h6"/><path stroke="#9100ff" d="M1585 511h6"/><path stroke="#9900ff" d="M1591 511h6"/><path stroke="#9d00ff" d="M1597 511h6"/><path stroke="#a500ff" d="M1603 511h6"/><path stroke="#aa00ff" d="M1609 511h6"/><path stroke="#b200ff" d="M1615 511h6"/><path stroke="#b600ff" d="M1621 511h6"/><path stroke="#be00ff" d="M1627 511h6"/><path stroke="#c600ff" d="M1633 511h6"/><path stroke="#ca00ff" d="M1639 511h6"/><path stroke="#d200ff" d="M1645 511h6"/><path stroke="#d600ff" d="M1651 511h6"/><path stroke="#de00ff" d="M1657 511h6"/><path stroke="#e200ff" d="M1663 511h6"/><path stroke="#ea00ff" d="M1669 511h6"/><path stroke="#f200ff" d="M1675 511h6"/><path stroke="#f600ff" d="M1681 511h6"/><path stroke="#ff00ff" d="M1687 511h6"/><path stroke="#ff00fa" d="M1693 511h6"/><path stroke="#ff00f2" d="M1699 511h6"/><path stroke="#ff00ee" d="M1705 511h6"/><path stroke="#ff00e6" d="M1711 511h6"/><path stroke="#ff00e2" d="M1717 511h6"/><path stroke="#ff00de" d="M1723 511h6"/><path stroke="#ff00d6" d="M1729 511h6"/><path stroke="#ff00d2" d="M1735 511h6"/><path stroke="#ff00ce" d="M1741 511h6"/><path stroke="#0030ff" d="M1345 517h12"/><path stroke="#002cff" d="M1357 517h12"/><path stroke="#0028ff" d="M1369 517h18"/><path stroke="#0024ff" d="M1387 517h12"/><path stroke="#0020ff" d="M1399 517h18"/><path stroke="#001cff" d="M1417 517h18"/><path stroke="#0418ff" d="M1435 517h6"/><path stroke="#0814ff" d="M1441 517h6"/><path stroke="#0c14ff" d="M1447 517h6"/><path stroke="#1010ff" d="M1453 517h6"/><path stroke="#1410ff" d="M1459 517h6"/><path stroke="#1c0cff" d="M1465 517h6"/><path stroke="#200cff" d="M1471 517h6"/><path stroke="#280cff" d="M1477 517h6"/><path stroke="#2c08ff" d="M1483 517h6"/><path stroke="#3008ff" d="M1489 517h6"/><path stroke="#3808ff" d="M1495 517h6"/><path stroke="#3c04ff" d="M1501 517h6"/><path stroke="#4404ff" d="M1507 517h6"/><path stroke="#4804ff" d="M1513 517h6"/><path stroke="#5000ff" d="M1519 517h6"/><path stroke="#5500ff" d="M1525 517h6"/><path stroke="#5900ff" d="M1531 517h6"/><path stroke="#6100ff" d="M1537 517h6"/><path stroke="#6500ff" d="M1543 517h6"/><path stroke="#6d00ff" d="M1549 517h6"/><path stroke="#7100ff" d="M1555 517h6"/><path stroke="#7900ff" d="M1561 517h6"/><path stroke="#7d00ff" d="M1567 517h6"/><path stroke="#8100ff" d="M1573 517h6"/><path stroke="#8900ff" d="M1579 517h6"/><path stroke="#8d00ff" d="M1585 517h6"/><path stroke="#9500ff" d="M1591 517h6"/><path stroke="#9900ff" d="M1597 517h6"/><path stroke="#a100ff" d="M1603 517h6"/><path stroke="#a500ff" d="M1609 517h6"/><path stroke="#ae00ff" d="M1615 517h6"/><path stroke="#b200ff" d="M1621 517h6"/><path stroke="#ba00ff" d="M1627 517h6"/><path stroke="#be00ff" d="M1633 517h6"/><path stroke="#c600ff" d="M1639 517h6"/><path stroke="#ca00ff" d="M1645 517h6"/><path stroke="#d200ff" d="M1651 517h6"/><path stroke="#d600ff" d="M1657 517h6"/><path stroke="#de00ff" d="M1663 517h6"/><path stroke="#e200ff" d="M1669 517h6"/><path stroke="#ea00ff" d="M1675 517h6"/><path stroke="#ee00ff" d="M1681 517h6"/><path stroke="#f600ff" d="M1687 517h6"/><path stroke="#ff00ff" d="M1693 517h6"/><path stroke="#ff00fa" d="M1699 517h6"/><path stroke="#ff00f2" d="M1705 517h6"/><path stroke="#ff00ee" d="M1711 517h6"/><path stroke="#ff00ea" d="M1717 517h6"/><path stroke="#ff00e2" d="M1723 517h6"/><path stroke="#ff00de" d="M1729 517h6"/><path stroke="#ff00da" d="M1735 517h6"/><path stroke="#002cff" d="M1351 523h6"/><path stroke="#0028ff" d="M1357 523h18"/><path stroke="#0024ff" d="M1375 523h18"/><path stroke="#0020ff" d="M1393 523h12"/><path stroke="#001cff" d="M1405 523h18"/><path stroke="#0018ff" d="M1423 523h12"/><path stroke="#0014ff" d="M1435 523h6"/><path stroke="#0414ff" d="M1441 523h6"/><path stroke="#0810ff" d="M1447 523h6"/><path stroke="#1010ff" d="M1453 523h6"/><path stroke="#140cff" d="M1459 523h6"/><path stroke="#180cff" d="M1465 523h6"/><path stroke="#2008ff" d="M1471 523h6"/><path stroke="#2408ff" d="M1477 523h6"/><path stroke="#2c08ff" d="M1483 523h6"/><path stroke="#3004ff" d="M1489 523h6"/><path stroke="#3404ff" d="M1495 523h6"/><path stroke="#3c04ff" d="M1501 523h6"/><path stroke="#4000ff" d="M1507 523h6"/><path stroke="#4800ff" d="M1513 523h6"/><path stroke="#4c00ff" d="M1519 523h6"/><path stroke="#5000ff" d="M1525 523h6"/><path stroke="#5900ff" d="M1531 523h6"/><path stroke="#5d00ff" d="M1537 523h6"/><path stroke="#6100ff" d="M1543 523h6"/><path stroke="#6900ff" d="M1549 523h6"/><path stroke="#6d00ff" d="M1555 523h6"/><path stroke="#7500ff" d="M1561 523h6"/><path stroke="#7900ff" d="M1567 523h6"/><path stroke="#7d00ff" d="M1573 523h6"/><path stroke="#8500ff" d="M1579 523h6"/><path stroke="#8900ff" d="M1585 523h6"/><path stroke="#9100ff" d="M1591 523h6"/><path stroke="#9500ff" d="M1597 523h6"/><path stroke="#9900ff" d="M1603 523h6"/><path stroke="#a100ff" d="M1609 523h6"/><path stroke="#a500ff" d="M1615 523h6"/><path stroke="#ae00ff" d="M1621 523h6"/><path stroke="#b200ff" d="M1627 523h6"/><path stroke="#ba00ff" d="M1633 523h6"/><path stroke="#be00ff" d="M1639 523h6"/><path stroke="#c600ff" d="M1645 523h6"/><path stroke="#ca00ff" d="M1651 523h6"/><path stroke="#d200ff" d="M1657 523h6"/><path stroke="#d600ff" d="M1663 523h6"/><path stroke="#de00ff" d="M1669 523h6"/><path stroke="#e200ff" d="M1675 523h6"/><path stroke="#ea00ff" d="M1681 523h6"/><path stroke="#ee00ff" d="M1687 523h6"/><path stroke="#f600ff" d="M1693 523h6"/><path stroke="#fa00ff" d="M1699 523h6"/><path stroke="#ff00fa" d="M1705 523h6"/><path stroke="#ff00f6" d="M1711 523h6"/><path stroke="#ff00ee" d="M1717 523h6"/><path stroke="#ff00ea" d="M1723 523h6"/><path stroke="#ff00e6" d="M1729 523h6"/><path stroke="#0028ff" d="M1351 529h12"/><path stroke="#0024ff" d="M1363 529h18"/><path stroke="#0020ff" d="M1381 529h18"/><path stroke="#001cff" d="M1399 529h12"/><path stroke="#0018ff" d="M1411 529h18"/><path stroke="#0014ff" d="M1429 529h12"/><path stroke="#0410ff" d="M1441 529h6"/><path stroke="#0810ff" d="M1447 529h6"/><path stroke="#0c0cff" d="M1453 529h6"/><path stroke="#140cff" d="M1459 529h6"/><path stroke="#1808ff" d="M1465 529h6"/><path stroke="#1c08ff" d="M1471 529h6"/><path stroke="#2408ff" d="M1477 529h6"/><path stroke="#2804ff" d="M1483 529h6"/><path stroke="#2c04ff" d="M1489 529h6"/><path stroke="#3404ff" d="M1495 529h6"/><path stroke="#3800ff" d="M1501 529h6"/><path stroke="#4000ff" d="M1507 529h6"/><path stroke="#4400ff" d="M1513 529h6"/><path stroke="#4800ff" d="M1519 529h6"/><path stroke="#5000ff" d="M1525 529h6"/><path stroke="#5500ff" d="M1531 529h6"/><path stroke="#5900ff" d="M1537 529h6"/><path stroke="#6100ff" d="M1543 529h6"/><path stroke="#6500ff" d="M1549 529h6"/><path stroke="#6900ff" d="M1555 529h6"/><path stroke="#7100ff" d="M1561 529h6"/><path stroke="#7500ff" d="M1567 529h6"/><path stroke="#7900ff" d="M1573 529h6"/><path stroke="#8100ff" d="M1579 529h6"/><path stroke="#8500ff" d="M1585 529h6"/><path stroke="#8900ff" d="M1591 529h6"/><path stroke="#9100ff" d="M1597 529h6"/><path stroke="#9500ff" d="M1603 529h6"/><path stroke="#9d00ff" d="M1609 529h6"/><path stroke="#a100ff" d="M1615 529h6"/><path stroke="#a500ff" d="M1621 529h6"/><path stroke="#ae00ff" d="M1627 529h6"/><path stroke="#b200ff" d="M1633 529h6"/><path stroke="#ba00ff" d="M1639 529h6"/><path stroke="#be00ff" d="M1645 529h6"/><path stroke="#c600ff" d="M1651 529h6"/><path stroke="#ca00ff" d="M1657 529h6"/><path stroke="#d200ff" d="M1663 529h6"/><path stroke="#d600ff" d="M1669 529h6"/><path stroke="#de00ff" d="M1675 529h6"/><path stroke="#e200ff" d="M1681 529h6"/><path stroke="#e600ff" d="M1687 529h6"/><path stroke="#ee00ff" d="M1693 529h6"/><path stroke="#f200ff" d="M1699 529h6"/><path stroke="#fa00ff" d="M1705 529h6"/><path stroke="#ff00fa" d="M1711 529h6"/><path stroke="#ff00f6" d="M1717 529h6"/><path stroke="#ff00f2" d="M1723 529h6"/><path stroke="#0024ff" d="M1357 535h12"/><path stroke="#0020ff" d="M1369 535h18"/><path stroke="#001cff" d="M1387 535h18"/><path stroke="#0018ff" d="M1405 535h18"/><path stroke="#0014ff" d="M1423 535h12"/><path stroke="#0010ff" d="M1435 535h6"/><path stroke="#0410ff" d="M1441 535h6"/><path stroke="#080cff" d="M1447 535h6"/><path stroke="#0c0cff" d="M1453 535h6"/><path stroke="#1008ff" d="M1459 535h6"/><path stroke="#1808ff" d="M1465 535h6"/><path stroke="#1c08ff" d="M1471 535h6"/><path stroke="#2004ff" d="M1477 535h6"/><path stroke="#2804ff" d="M1483 535h6"/><path stroke="#2c04ff" d="M1489 535h6"/><path stroke="#3000ff" d="M1495 535h6"/><path stroke="#3800ff" d="M1501 535h6"/><path stroke="#3c00ff" d="M1507 535h6"/><path stroke="#4000ff" d="M1513 535h6"/><path stroke="#4800ff" d="M1519 535h6"/><path stroke="#4c00ff" d="M1525 535h6"/><path stroke="#5000ff" d="M1531 535h6"/><path stroke="#5500ff" d="M1537 535h6"/><path stroke="#5d00ff" d="M1543 535h6"/><path stroke="#6100ff" d="M1549 535h6"/><path stroke="#6500ff" d="M1555 535h6"/><path stroke="#6d00ff" d="M1561 535h6"/><path stroke="#7100ff" d="M1567 535h6"/><path stroke="#7500ff" d="M1573 535h6"/><path stroke="#7d00ff" d="M1579 535h6"/><path stroke="#8100ff" d="M1585 535h6"/><path stroke="#8500ff" d="M1591 535h6"/><path stroke="#8d00ff" d="M1597 535h6"/><path stroke="#9100ff" d="M1603 535h6"/><path stroke="#9900ff" d="M1609 535h6"/><path stroke="#9d00ff" d="M1615 535h6"/><path stroke="#a100ff" d="M1621 535h6"/><path stroke="#aa00ff" d="M1627 535h6"/><path stroke="#ae00ff" d="M1633 535h6"/><path stroke="#b200ff" d="M1639 535h6"/><path stroke="#ba00ff" d="M1645 535h6"/><path stroke="#be00ff" d="M1651 535h6"/><path stroke="#c600ff" d="M1657 535h6"/><path stroke="#ca00ff" d="M1663 535h6"/><path stroke="#d200ff" d="M1669 535h6"/><path stroke="#d600ff" d="M1675 535h6"/><path stroke="#da00ff" d="M1681 535h6"/><path stroke="#e200ff" d="M1687 535h6"/><path stroke="#e600ff" d="M1693 535h6"/><path stroke="#ee00ff" d="M1699 535h6"/><path stroke="#f200ff" d="M1705 535h6"/><path stroke="#fa00ff" d="M1711 535h6"/><path stroke="#ff00ff" d="M1717 535h6"/><path stroke="#0024ff" d="M1357 541h6"/><path stroke="#0020ff" d="M1363 541h18"/><path stroke="#001cff" d="M1381 541h12"/><path stroke="#0018ff" d="M1393 541h18"/><path stroke="#0014ff" d="M1411 541h18"/><path stroke="#0010ff" d="M1429 541h12"/><path stroke="#040cff" d="M1441 541h6"/><path stroke="#080cff" d="M1447 541h6"/><path stroke="#0c08ff" d="M1453 541h6"/><path stroke="#1008ff" d="M1459 541h6"/><path stroke="#1408ff" d="M1465 541h6"/><path stroke="#1c04ff" d="M1471 541h6"/><path stroke="#2004ff" d="M1477 541h6"/><path stroke="#2404ff" d="M1483 541h6"/><path stroke="#2c00ff" d="M1489 541h6"/><path stroke="#3000ff" d="M1495 541h6"/><path stroke="#3400ff" d="M1501 541h6"/><path stroke="#3800ff" d="M1507 541h6"/><path stroke="#4000ff" d="M1513 541h6"/><path stroke="#4400ff" d="M1519 541h6"/><path stroke="#4800ff" d="M1525 541h6"/><path stroke="#4c00ff" d="M1531 541h6"/><path stroke="#5500ff" d="M1537 541h6"/><path stroke="#5900ff" d="M1543 541h6"/><path stroke="#5d00ff" d="M1549 541h6"/><path stroke="#6500ff" d="M1555 541h6"/><path stroke="#6900ff" d="M1561 541h6"/><path stroke="#6d00ff" d="M1567 541h6"/><path stroke="#7100ff" d="M1573 541h6"/><path stroke="#7900ff" d="M1579 541h6"/><path stroke="#7d00ff" d="M1585 541h6"/><path stroke="#8100ff" d="M1591 541h6"/><path stroke="#8900ff" d="M1597 541h6"/><path stroke="#8d00ff" d="M1603 541h6"/><path stroke="#9100ff" d="M1609 541h6"/><path stroke="#9900ff" d="M1615 541h6"/><path stroke="#9d00ff" d="M1621 541h6"/><path stroke="#a100ff" d="M1627 541h6"/><path stroke="#aa00ff" d="M1633 541h6"/><path stroke="#ae00ff" d="M1639 541h6"/><path stroke="#b600ff" d="M1645 541h6"/><path stroke="#ba00ff" d="M1651 541h6"/><path stroke="#be00ff" d="M1657 541h6"/><path stroke="#c600ff" d="M1663 541h6"/><path stroke="#ca00ff" d="M1669 541h6"/><path stroke="#d200ff" d="M1675 541h6"/><path stroke="#d600ff" d="M1681 541h6"/><path stroke="#da00ff" d="M1687 541h6"/><path stroke="#e200ff" d="M1693 541h6"/><path stroke="#e600ff" d="M1699 541h6"/><path stroke="#ee00ff" d="M1705 541h6"/><path stroke="#f200ff" d="M1711 541h6"/><path stroke="#0020ff" d="M1363 547h6"/><path stroke="#001cff" d="M1369 547h18"/><path stroke="#0018ff" d="M1387 547h18"/><path stroke="#0014ff" d="M1405 547h18"/><path stroke="#0010ff" d="M1423 547h12"/><path stroke="#000cff" d="M1435 547h12"/><path stroke="#0408ff" d="M1447 547h6"/><path stroke="#0808ff" d="M1453 547h6"/><path stroke="#1004ff" d="M1459 547h6"/><path stroke="#1404ff" d="M1465 547h6"/><path stroke="#1804ff" d="M1471 547h6"/><path stroke="#2004ff" d="M1477 547h6"/><path stroke="#2400ff" d="M1483 547h6"/><path stroke="#2800ff" d="M1489 547h6"/><path stroke="#2c00ff" d="M1495 547h6"/><path stroke="#3400ff" d="M1501 547h6"/><path stroke="#3800ff" d="M1507 547h6"/><path stroke="#3c00ff" d="M1513 547h6"/><path stroke="#4000ff" d="M1519 547h6"/><path stroke="#4800ff" d="M1525 547h6"/><path stroke="#4c00ff" d="M1531 547h6"/><path stroke="#5000ff" d="M1537 547h6"/><path stroke="#5500ff" d="M1543 547h6"/><path stroke="#5d00ff" d="M1549 547h6"/><path stroke="#6100ff" d="M1555 547h6"/><path stroke="#6500ff" d="M1561 547h6"/><path stroke="#6900ff" d="M1567 547h6"/><path stroke="#7100ff" d="M1573 547h6"/><path stroke="#7500ff" d="M1579 547h6"/><path stroke="#7900ff" d="M1585 547h6"/><path stroke="#7d00ff" d="M1591 547h6"/><path stroke="#8500ff" d="M1597 547h6"/><path stroke="#8900ff" d="M1603 547h6"/><path stroke="#8d00ff" d="M1609 547h6"/><path stroke="#9500ff" d="M1615 547h6"/><path stroke="#9900ff" d="M1621 547h6"/><path stroke="#9d00ff" d="M1627 547h6"/><path stroke="#a500ff" d="M1633 547h6"/><path stroke="#aa00ff" d="M1639 547h6"/><path stroke="#ae00ff" d="M1645 547h6"/><path stroke="#b600ff" d="M1651 547h6"/><path stroke="#ba00ff" d="M1657 547h6"/><path stroke="#be00ff" d="M1663 547h6"/><path stroke="#c600ff" d="M1669 547h6"/><path stroke="#ca00ff" d="M1675 547h6"/><path stroke="#ce00ff" d="M1681 547h6"/><path stroke="#d600ff" d="M1687 547h6"/><path stroke="#da00ff" d="M1693 547h6"/><path stroke="#e200ff" d="M1699 547h6"/><path stroke="#e600ff" d="M1705 547h6"/><path stroke="#001cff" d="M1369 553h6"/><path stroke="#0018ff" d="M1375 553h18"/><path stroke="#0014ff" d="M1393 553h18"/><path stroke="#0010ff" d="M1411 553h18"/><path stroke="#000cff" d="M1429 553h12"/><path stroke="#0008ff" d="M1441 553h6"/><path stroke="#0408ff" d="M1447 553h6"/><path stroke="#0804ff" d="M1453 553h6"/><path stroke="#0c04ff" d="M1459 553h6"/><path stroke="#1404ff" d="M1465 553h6"/><path stroke="#1804ff" d="M1471 553h6"/><path stroke="#1c00ff" d="M1477 553h6"/><path stroke="#2400ff" d="M1483 553h6"/><path stroke="#2800ff" d="M1489 553h6"/><path stroke="#2c00ff" d="M1495 553h6"/><path stroke="#3000ff" d="M1501 553h6"/><path stroke="#3400ff" d="M1507 553h6"/><path stroke="#3800ff" d="M1513 553h6"/><path stroke="#4000ff" d="M1519 553h6"/><path stroke="#4400ff" d="M1525 553h6"/><path stroke="#4800ff" d="M1531 553h6"/><path stroke="#4c00ff" d="M1537 553h6"/><path stroke="#5500ff" d="M1543 553h6"/><path stroke="#5900ff" d="M1549 553h6"/><path stroke="#5d00ff" d="M1555 553h6"/><path stroke="#6100ff" d="M1561 553h6"/><path stroke="#6500ff" d="M1567 553h6"/><path stroke="#6d00ff" d="M1573 553h6"/><path stroke="#7100ff" d="M1579 553h6"/><path stroke="#7500ff" d="M1585 553h6"/><path stroke="#7d00ff" d="M1591 553h6"/><path stroke="#8100ff" d="M1597 553h6"/><path stroke="#8500ff" d="M1603 553h6"/><path stroke="#8900ff" d="M1609 553h6"/><path stroke="#9100ff" d="M1615 553h6"/><path stroke="#9500ff" d="M1621 553h6"/><path stroke="#9900ff" d="M1627 553h6"/><path stroke="#a100ff" d="M1633 553h6"/><path stroke="#a500ff" d="M1639 553h6"/><path stroke="#aa00ff" d="M1645 553h6"/><path stroke="#ae00ff" d="M1651 553h6"/><path stroke="#b600ff" d="M1657 553h6"/><path stroke="#ba00ff" d="M1663 553h6"/><path stroke="#be00ff" d="M1669 553h6"/><path stroke="#c600ff" d="M1675 553h6"/><path stroke="#ca00ff" d="M1681 553h6"/><path stroke="#ce00ff" d="M1687 553h6"/><path stroke="#d600ff" d="M1693 553h6"/><path stroke="#da00ff" d="M1699 553h6"/><path stroke="#0018ff" d="M1369 559h18"/><path stroke="#0014ff" d="M1387 559h18"/><path stroke="#0010ff" d="M1405 559h18"/><path stroke="#000cff" d="M1423 559h12"/><path stroke="#0008ff" d="M1435 559h12"/><path stroke="#0404ff" d="M1447 559h6"/><path stroke="#0804ff" d="M1453 559h6"/><path stroke="#0c04ff" d="M1459 559h6"/><path stroke="#1000ff" d="M1465 559h6"/><path stroke="#1800ff" d="M1471 559h6"/><path stroke="#1c00ff" d="M1477 559h6"/><path stroke="#2000ff" d="M1483 559h6"/><path stroke="#2400ff" d="M1489 559h6"/><path stroke="#2800ff" d="M1495 559h6"/><path stroke="#3000ff" d="M1501 559h6"/><path stroke="#3400ff" d="M1507 559h6"/><path stroke="#3800ff" d="M1513 559h6"/><path stroke="#3c00ff" d="M1519 559h6"/><path stroke="#4000ff" d="M1525 559h6"/><path stroke="#4400ff" d="M1531 559h6"/><path stroke="#4c00ff" d="M1537 559h6"/><path stroke="#5000ff" d="M1543 559h6"/><path stroke="#5500ff" d="M1549 559h6"/><path stroke="#5900ff" d="M1555 559h6"/><path stroke="#5d00ff" d="M1561 559h6"/><path stroke="#6500ff" d="M1567 559h6"/><path stroke="#6900ff" d="M1573 559h6"/><path stroke="#6d00ff" d="M1579 559h6"/><path stroke="#7100ff" d="M1585 559h6"/><path stroke="#7900ff" d="M1591 559h6"/><path stroke="#7d00ff" d="M1597 559h6"/><path stroke="#8100ff" d="M1603 559h6"/><path stroke="#8500ff" d="M1609 559h6"/><path stroke="#8d00ff" d="M1615 559h6"/><path stroke="#9100ff" d="M1621 559h6"/><path stroke="#9500ff" d="M1627 559h6"/><path stroke="#9900ff" d="M1633 559h6"/><path stroke="#a100ff" d="M1639 559h6"/><path stroke="#a500ff" d="M1645 559h6"/><path stroke="#aa00ff" d="M1651 559h6"/><path stroke="#b200ff" d="M1657 559h6"/><path stroke="#b600ff" d="M1663 559h6"/><path stroke="#ba00ff" d="M1669 559h6"/><path stroke="#be00ff" d="M1675 559h6"/><path stroke="#c600ff" d="M1681 559h6"/><path stroke="#ca00ff" d="M1687 559h6"/><path stroke="#ce00ff" d="M1693 559h6"/><path stroke="#0014ff" d="M1375 565h18"/><path stroke="#0010ff" d="M1393 565h18"/><path stroke="#000cff" d="M1411 565h18"/><path stroke="#0008ff" d="M1429 565h18"/><path stroke="#0404ff" d="M1447 565h6"/><path stroke="#0804ff" d="M1453 565h6"/><path stroke="#0c00ff" d="M1459 565h6"/><path stroke="#1000ff" d="M1465 565h6"/><path stroke="#1400ff" d="M1471 565h6"/><path stroke="#1c00ff" d="M1477 565h6"/><path stroke="#2000ff" d="M1483 565h6"/><path stroke="#2400ff" d="M1489 565h6"/><path stroke="#2800ff" d="M1495 565h6"/><path stroke="#2c00ff" d="M1501 565h6"/><path stroke="#3000ff" d="M1507 565h6"/><path stroke="#3400ff" d="M1513 565h6"/><path stroke="#3c00ff" d="M1519 565h6"/><path stroke="#4000ff" d="M1525 565h6"/><path stroke="#4400ff" d="M1531 565h6"/><path stroke="#4800ff" d="M1537 565h6"/><path stroke="#4c00ff" d="M1543 565h6"/><path stroke="#5000ff" d="M1549 565h6"/><path stroke="#5900ff" d="M1555 565h6"/><path stroke="#5d00ff" d="M1561 565h6"/><path stroke="#6100ff" d="M1567 565h6"/><path stroke="#6500ff" d="M1573 565h6"/><path stroke="#6900ff" d="M1579 565h6"/><path stroke="#7100ff" d="M1585 565h6"/><path stroke="#7500ff" d="M1591 565h6"/><path stroke="#7900ff" d="M1597 565h6"/><path stroke="#7d00ff" d="M1603 565h6"/><path stroke="#8100ff" d="M1609 565h6"/><path stroke="#8900ff" d="M1615 565h6"/><path stroke="#8d00ff" d="M1621 565h6"/><path stroke="#9100ff" d="M1627 565h6"/><path stroke="#9500ff" d="M1633 565h6"/><path stroke="#9d00ff" d="M1639 565h6"/><path stroke="#a100ff" d="M1645 565h6"/><path stroke="#a500ff" d="M1651 565h6"/><path stroke="#aa00ff" d="M1657 565h6"/><path stroke="#b200ff" d="M1663 565h6"/><path stroke="#b600ff" d="M1669 565h6"/><path stroke="#ba00ff" d="M1675 565h6"/><path stroke="#c200ff" d="M1681 565h6"/><path stroke="#c600ff" d="M1687 565h6"/><path stroke="#0014ff" d="M1381 571h6"/><path stroke="#0010ff" d="M1387 571h18"/><path stroke="#000cff" d="M1405 571h18"/><path stroke="#0008ff" d="M1423 571h18"/><path stroke="#0004ff" d="M1441 571h12"/><path stroke="#0800ff" d="M1453 571h6"/><path stroke="#0c00ff" d="M1459 571h6"/><path stroke="#1000ff" d="M1465 571h6"/><path stroke="#1400ff" d="M1471 571h6"/><path stroke="#1800ff" d="M1477 571h6"/><path stroke="#1c00ff" d="M1483 571h6"/><path stroke="#2000ff" d="M1489 571h6"/><path stroke="#2400ff" d="M1495 571h6"/><path stroke="#2c00ff" d="M1501 571h6"/><path stroke="#3000ff" d="M1507 571h6"/><path stroke="#3400ff" d="M1513 571h6"/><path stroke="#3800ff" d="M1519 571h6"/><path stroke="#3c00ff" d="M1525 571h6"/><path stroke="#4000ff" d="M1531 571h6"/><path stroke="#4400ff" d="M1537 571h6"/><path stroke="#4c00ff" d="M1543 571h6"/><path stroke="#5000ff" d="M1549 571h6"/><path stroke="#5500ff" d="M1555 571h6"/><path stroke="#5900ff" d="M1561 571h6"/><path stroke="#5d00ff" d="M1567 571h6"/><path stroke="#6100ff" d="M1573 571h6"/><path stroke="#6900ff" d="M1579 571h6"/><path stroke="#6d00ff" d="M1585 571h6"/><path stroke="#7100ff" d="M1591 571h6"/><path stroke="#7500ff" d="M1597 571h6"/><path stroke="#7900ff" d="M1603 571h6"/><path stroke="#8100ff" d="M1609 571h6"/><path stroke="#8500ff" d="M1615 571h6"/><path stroke="#8900ff" d="M1621 571h6"/><path stroke="#8d00ff" d="M1627 571h6"/><path stroke="#9100ff" d="M1633 571h6"/><path stroke="#9900ff" d="M1639 571h6"/><path stroke="#9d00ff" d="M1645 571h6"/><path stroke="#a100ff" d="M1651 571h6"/><path stroke="#a500ff" d="M1657 571h6"/><path stroke="#ae00ff" d="M1663 571h6"/><path stroke="#b200ff" d="M1669 571h6"/><path stroke="#b600ff" d="M1675 571h6"/><path stroke="#ba00ff" d="M1681 571h6"/><path stroke="#0010ff" d="M1381 577h18"/><path stroke="#000cff" d="M1399 577h18"/><path stroke="#0008ff" d="M1417 577h18"/><path stroke="#0004ff" d="M1435 577h12"/><path stroke="#0000ff" d="M1447 577h6"/><path stroke="#0400ff" d="M1453 577h6"/><path stroke="#0c00ff" d="M1459 577h6"/><path stroke="#1000ff" d="M1465 577h6"/><path stroke="#1400ff" d="M1471 577h6"/><path stroke="#1800ff" d="M1477 577h6"/><path stroke="#1c00ff" d="M1483 577h6"/><path stroke="#2000ff" d="M1489 577h6"/><path stroke="#2400ff" d="M1495 577h6"/><path stroke="#2800ff" d="M1501 577h6"/><path stroke="#2c00ff" d="M1507 577h6"/><path stroke="#3000ff" d="M1513 577h6"/><path stroke="#3400ff" d="M1519 577h6"/><path stroke="#3c00ff" d="M1525 577h6"/><path stroke="#4000ff" d="M1531 577h6"/><path stroke="#4400ff" d="M1537 577h6"/><path stroke="#4800ff" d="M1543 577h6"/><path stroke="#4c00ff" d="M1549 577h6"/><path stroke="#5000ff" d="M1555 577h6"/><path stroke="#5500ff" d="M1561 577h6"/><path stroke="#5d00ff" d="M1567 577h6"/><path stroke="#6100ff" d="M1573 577h6"/><path stroke="#6500ff" d="M1579 577h6"/><path stroke="#6900ff" d="M1585 577h6"/><path stroke="#6d00ff" d="M1591 577h6"/><path stroke="#7100ff" d="M1597 577h6"/><path stroke="#7900ff" d="M1603 577h6"/><path stroke="#7d00ff" d="M1609 577h6"/><path stroke="#8100ff" d="M1615 577h6"/><path stroke="#8500ff" d="M1621 577h6"/><path stroke="#8900ff" d="M1627 577h6"/><path stroke="#8d00ff" d="M1633 577h6"/><path stroke="#9500ff" d="M1639 577h6"/><path stroke="#9900ff" d="M1645 577h6"/><path stroke="#9d00ff" d="M1651 577h6"/><path stroke="#a100ff" d="M1657 577h6"/><path stroke="#a500ff" d="M1663 577h6"/><path stroke="#ae00ff" d="M1669 577h6"/><path stroke="#b200ff" d="M1675 577h6"/><path stroke="#000cff" d="M1387 583h18"/><path stroke="#0008ff" d="M1405 583h18"/><path stroke="#0004ff" d="M1423 583h18"/><path stroke="#0000ff" d="M1441 583h12"/><path stroke="#0400ff" d="M1453 583h6"/><path stroke="#0800ff" d="M1459 583h6"/><path stroke="#0c00ff" d="M1465 583h6"/><path stroke="#1000ff" d="M1471 583h6"/><path stroke="#1400ff" d="M1477 583h6"/><path stroke="#1c00ff" d="M1483 583h6"/><path stroke="#2000ff" d="M1489 583h6"/><path stroke="#2400ff" d="M1495 583h6"/><path stroke="#2800ff" d="M1501 583h6"/><path stroke="#2c00ff" d="M1507 583h6"/><path stroke="#3000ff" d="M1513 583h6"/><path stroke="#3400ff" d="M1519 583h6"/><path stroke="#3800ff" d="M1525 583h6"/><path stroke="#3c00ff" d="M1531 583h6"/><path stroke="#4000ff" d="M1537 583h6"/><path stroke="#4400ff" d="M1543 583h6"/><path stroke="#4c00ff" d="M1549 583h6"/><path stroke="#5000ff" d="M1555 583h6"/><path stroke="#5500ff" d="M1561 583h6"/><path stroke="#5900ff" d="M1567 583h6"/><path stroke="#5d00ff" d="M1573 583h6"/><path stroke="#6100ff" d="M1579 583h6"/><path stroke="#6500ff" d="M1585 583h6"/><path stroke="#6900ff" d="M1591 583h6"/><path stroke="#7100ff" d="M1597 583h6"/><path stroke="#7500ff" d="M1603 583h6"/><path stroke="#7900ff" d="M1609 583h6"/><path stroke="#7d00ff" d="M1615 583h6"/><path stroke="#8100ff" d="M1621 583h6"/><path stroke="#8500ff" d="M1627 583h6"/><path stroke="#8d00ff" d="M1633 583h6"/><path stroke="#9100ff" d="M1639 583h6"/><path stroke="#9500ff" d="M1645 583h6"/><path stroke="#9900ff" d="M1651 583h6"/><path stroke="#9d00ff" d="M1657 583h6"/><path stroke="#a100ff" d="M1663 583h6"/><path stroke="#aa00ff" d="M1669 583h6"/><path stroke="#000cff" d="M1393 589h6"/><path stroke="#0008ff" d="M1399 589h18"/><path stroke="#0004ff" d="M1417 589h18"/><path stroke="#0000ff" d="M1435 589h18"/><path stroke="#0400ff" d="M1453 589h6"/><path stroke="#0800ff" d="M1459 589h6"/><path stroke="#0c00ff" d="M1465 589h6"/><path stroke="#1000ff" d="M1471 589h6"/><path stroke="#1400ff" d="M1477 589h6"/><path stroke="#1800ff" d="M1483 589h6"/><path stroke="#1c00ff" d="M1489 589h6"/><path stroke="#2000ff" d="M1495 589h6"/><path stroke="#2400ff" d="M1501 589h6"/><path stroke="#2800ff" d="M1507 589h6"/><path stroke="#2c00ff" d="M1513 589h6"/><path stroke="#3400ff" d="M1519 589h6"/><path stroke="#3800ff" d="M1525 589h6"/><path stroke="#3c00ff" d="M1531 589h6"/><path stroke="#4000ff" d="M1537 589h6"/><path stroke="#4400ff" d="M1543 589h6"/><path stroke="#4800ff" d="M1549 589h6"/><path stroke="#4c00ff" d="M1555 589h6"/><path stroke="#5000ff" d="M1561 589h6"/><path stroke="#5500ff" d="M1567 589h6"/><path stroke="#5900ff" d="M1573 589h6"/><path stroke="#5d00ff" d="M1579 589h6"/><path stroke="#6500ff" d="M1585 589h6"/><path stroke="#6900ff" d="M1591 589h6"/><path stroke="#6d00ff" d="M1597 589h6"/><path stroke="#7100ff" d="M1603 589h6"/><path stroke="#7500ff" d="M1609 589h6"/><path stroke="#7900ff" d="M1615 589h6"/><path stroke="#7d00ff" d="M1621 589h6"/><path stroke="#8100ff" d="M1627 589h6"/><path stroke="#8900ff" d="M1633 589h6"/><path stroke="#8d00ff" d="M1639 589h6"/><path stroke="#9100ff" d="M1645 589h6"/><path stroke="#9500ff" d="M1651 589h6"/><path stroke="#9900ff" d="M1657 589h6"/><path stroke="#9d00ff" d="M1663 589h6"/><path stroke="#0008ff" d="M1399 595h12"/><path stroke="#0004ff" d="M1411 595h18"/><path stroke="#0000ff" d="M1429 595h24"/><path stroke="#0400ff" d="M1453 595h6"/><path stroke="#0800ff" d="M1459 595h6"/><path stroke="#0c00ff" d="M1465 595h6"/><path stroke="#1000ff" d="M1471 595h6"/><path stroke="#1400ff" d="M1477 595h6"/><path stroke="#1800ff" d="M1483 595h6"/><path stroke="#1c00ff" d="M1489 595h6"/><path stroke="#2000ff" d="M1495 595h6"/><path stroke="#2400ff" d="M1501 595h6"/><path stroke="#2800ff" d="M1507 595h6"/><path stroke="#2c00ff" d="M1513 595h6"/><path stroke="#3000ff" d="M1519 595h6"/><path stroke="#3400ff" d="M1525 595h6"/><path stroke="#3800ff" d="M1531 595h6"/><path stroke="#3c00ff" d="M1537 595h6"/><path stroke="#4000ff" d="M1543 595h6"/><path stroke="#4400ff" d="M1549 595h6"/><path stroke="#4800ff" d="M1555 595h6"/><path stroke="#5000ff" d="M1561 595h6"/><path stroke="#5500ff" d="M1567 595h6"/><path stroke="#5900ff" d="M1573 595h6"/><path stroke="#5d00ff" d="M1579 595h6"/><path stroke="#6100ff" d="M1585 595h6"/><path stroke="#6500ff" d="M1591 595h6"/><path stroke="#6900ff" d="M1597 595h6"/><path stroke="#6d00ff" d="M1603 595h6"/><path stroke="#7100ff" d="M1609 595h6"/><path stroke="#7500ff" d="M1615 595h6"/><path stroke="#7d00ff" d="M1621 595h6"/><path stroke="#8100ff" d="M1627 595h6"/><path stroke="#8500ff" d="M1633 595h6"/><path stroke="#8900ff" d="M1639 595h6"/><path stroke="#8d00ff" d="M1645 595h6"/><path stroke="#9100ff" d="M1651 595h6"/><path stroke="#9500ff" d="M1657 595h6"/><path stroke="#0008ff" d="M1399 601h6"/><path stroke="#0004ff" d="M1405 601h18"/><path stroke="#0000ff" d="M1423 601h36"/><path stroke="#0400ff" d="M1459 601h6"/><path stroke="#0800ff" d="M1465 601h6"/><path stroke="#0c00ff" d="M1471 601h6"/><path stroke="#1000ff" d="M1477 601h6"/><path stroke="#1400ff" d="M1483 601h6"/><path stroke="#1800ff" d="M1489 601h6"/><path stroke="#1c00ff" d="M1495 601h6"/><path stroke="#2400ff" d="M1501 601h6"/><path stroke="#2800ff" d="M1507 601h6"/><path stroke="#2c00ff" d="M1513 601h6"/><path stroke="#3000ff" d="M1519 601h6"/><path stroke="#3400ff" d="M1525 601h6"/><path stroke="#3800ff" d="M1531 601h6"/><path stroke="#3c00ff" d="M1537 601h6"/><path stroke="#4000ff" d="M1543 601h6"/><path stroke="#4400ff" d="M1549 601h6"/><path stroke="#4800ff" d="M1555 601h6"/><path stroke="#4c00ff" d="M1561 601h6"/><path stroke="#5000ff" d="M1567 601h6"/><path stroke="#5500ff" d="M1573 601h6"/><path stroke="#5900ff" d="M1579 601h6"/><path stroke="#5d00ff" d="M1585 601h6"/><path stroke="#6100ff" d="M1591 601h6"/><path stroke="#6500ff" d="M1597 601h6"/><path stroke="#6900ff" d="M1603 601h6"/><path stroke="#7100ff" d="M1609 601h6"/><path stroke="#7500ff" d="M1615 601h6"/><path stroke="#7900ff" d="M1621 601h6"/><path stroke="#7d00ff" d="M1627 601h6"/><path stroke="#8100ff" d="M1633 601h6"/><path stroke="#8500ff" d="M1639 601h6"/><path stroke="#8900ff" d="M1645 601h6"/><path stroke="#8d00ff" d="M1651 601h6"/><path stroke="#0004ff" d="M1405 607h12"/><path stroke="#0000ff" d="M1417 607h42"/><path stroke="#0400ff" d="M1459 607h6"/><path stroke="#0800ff" d="M1465 607h6"/><path stroke="#0c00ff" d="M1471 607h6"/><path stroke="#1000ff" d="M1477 607h6"/><path stroke="#1400ff" d="M1483 607h6"/><path stroke="#1800ff" d="M1489 607h6"/><path stroke="#1c00ff" d="M1495 607h6"/><path stroke="#2000ff" d="M1501 607h6"/><path stroke="#2400ff" d="M1507 607h6"/><path stroke="#2800ff" d="M1513 607h6"/><path stroke="#2c00ff" d="M1519 607h6"/><path stroke="#3000ff" d="M1525 607h6"/><path stroke="#3400ff" d="M1531 607h6"/><path stroke="#3800ff" d="M1537 607h6"/><path stroke="#3c00ff" d="M1543 607h6"/><path stroke="#4000ff" d="M1549 607h6"/><path stroke="#4400ff" d="M1555 607h6"/><path stroke="#4800ff" d="M1561 607h6"/><path stroke="#4c00ff" d="M1567 607h6"/><path stroke="#5000ff" d="M1573 607h6"/><path stroke="#5900ff" d="M1579 607h6"/><path stroke="#5d00ff" d="M1585 607h6"/><path stroke="#6100ff" d="M1591 607h6"/><path stroke="#6500ff" d="M1597 607h6"/><path stroke="#6900ff" d="M1603 607h6"/><path stroke="#6d00ff" d="M1609 607h6"/><path stroke="#7100ff" d="M1615 607h6"/><path stroke="#7500ff" d="M1621 607h6"/><path stroke="#7900ff" d="M1627 607h6"/><path stroke="#7d00ff" d="M1633 607h6"/><path stroke="#8100ff" d="M1639 607h6"/><path stroke="#8500ff" d="M1645 607h6"/><path stroke="#0000ff" d="M1411 613h48"/><path stroke="#0400ff" d="M1459 613h6"/><path stroke="#0800ff" d="M1465 613h6"/><path stroke="#0c00ff" d="M1471 613h6"/><path stroke="#1000ff" d="M1477 613h6"/><path stroke="#1400ff" d="M1483 613h6"/><path stroke="#1800ff" d="M1489 613h6"/><path stroke="#1c00ff" d="M1495 613h6"/><path stroke="#2000ff" d="M1501 613h6"/><path stroke="#2400ff" d="M1507 613h6"/><path stroke="#2800ff" d="M1513 613h6"/><path stroke="#2c00ff" d="M1519 613h6"/><path stroke="#3000ff" d="M1525 613h6"/><path stroke="#3400ff" d="M1531 613h6"/><path stroke="#3800ff" d="M1537 613h6"/><path stroke="#3c00ff" d="M1543 613h6"/><path stroke="#4000ff" d="M1549 613h6"/><path stroke="#4400ff" d="M1555 613h6"/><path stroke="#4800ff" d="M1561 613h6"/><path stroke="#4c00ff" d="M1567 613h6"/><path stroke="#5000ff" d="M1573 613h6"/><path stroke="#5500ff" d="M1579 613h6"/><path stroke="#5900ff" d="M1585 613h6"/><path stroke="#5d00ff" d="M1591 613h6"/><path stroke="#6100ff" d="M1597 613h6"/><path stroke="#6500ff" d="M1603 613h6"/><path stroke="#6900ff" d="M1609 613h6"/><path stroke="#6d00ff" d="M1615 613h6"/><path stroke="#7100ff" d="M1621 613h6"/><path stroke="#7500ff" d="M1627 613h6"/><path stroke="#7900ff" d="M1633 613h6"/><path stroke="#7d00ff" d="M1639 613h6"/><path stroke="#0000ff" d="M1417 619h42"/><path stroke="#0400ff" d="M1459 619h6"/><path stroke="#0800ff" d="M1465 619h6"/><path stroke="#0c00ff" d="M1471 619h6"/><path stroke="#1000ff" d="M1477 619h6"/><path stroke="#1400ff" d="M1483 619h12"/><path stroke="#1800ff" d="M1495 619h6"/><path stroke="#1c00ff" d="M1501 619h6"/><path stroke="#2000ff" d="M1507 619h6"/><path stroke="#2400ff" d="M1513 619h6"/><path stroke="#2800ff" d="M1519 619h6"/><path stroke="#2c00ff" d="M1525 619h6"/><path stroke="#3000ff" d="M1531 619h6"/><path stroke="#3400ff" d="M1537 619h6"/><path stroke="#3800ff" d="M1543 619h6"/><path stroke="#3c00ff" d="M1549 619h6"/><path stroke="#4000ff" d="M1555 619h6"/><path stroke="#4400ff" d="M1561 619h6"/><path stroke="#4800ff" d="M1567 619h6"/><path stroke="#4c00ff" d="M1573 619h6"/><path stroke="#5000ff" d="M1579 619h6"/><path stroke="#5500ff" d="M1585 619h6"/><path stroke="#5900ff" d="M1591 619h6"/><path stroke="#5d00ff" d="M1597 619h6"/><path stroke="#6100ff" d="M1603 619h6"/><path stroke="#6500ff" d="M1609 619h6"/><path stroke="#6900ff" d="M1615 619h6"/><path stroke="#7100ff" d="M1621 619h6"/><path stroke="#7500ff" d="M1627 619h6"/><path stroke="#7900ff" d="M1633 619h6"/><path stroke="#0000ff" d="M1423 625h42"/><path stroke="#0400ff" d="M1465 625h6"/><path stroke="#0800ff" d="M1471 625h6"/><path stroke="#0c00ff" d="M1477 625h6"/><path stroke="#1000ff" d="M1483 625h6"/><path stroke="#1400ff" d="M1489 625h6"/><path stroke="#1800ff" d="M1495 625h6"/><path stroke="#1c00ff" d="M1501 625h6"/><path stroke="#2000ff" d="M1507 625h6"/><path stroke="#2400ff" d="M1513 625h6"/><path stroke="#2800ff" d="M1519 625h6"/><path stroke="#2c00ff" d="M1525 625h6"/><path stroke="#3000ff" d="M1531 625h6"/><path stroke="#3400ff" d="M1537 625h6"/><path stroke="#3800ff" d="M1543 625h6"/><path stroke="#3c00ff" d="M1549 625h6"/><path stroke="#4000ff" d="M1555 625h6"/><path stroke="#4400ff" d="M1561 625h6"/><path stroke="#4800ff" d="M1567 625h6"/><path stroke="#4c00ff" d="M1573 625h6"/><path stroke="#5000ff" d="M1579 625h6"/><path stroke="#5500ff" d="M1585 625h6"/><path stroke="#5900ff" d="M1591 625h6"/><path stroke="#5d00ff" d="M1597 625h6"/><path stroke="#6100ff" d="M1603 625h6"/><path stroke="#6500ff" d="M1609 625h6"/><path stroke="#6900ff" d="M1615 625h6"/><path stroke="#6d00ff" d="M1621 625h6"/><path stroke="#7100ff" d="M1627 625h6"/><path stroke="#0000ff" d="M1429 631h36"/><path stroke="#0400ff" d="M1465 631h6"/><path stroke="#0800ff" d="M1471 631h6"/><path stroke="#0c00ff" d="M1477 631h6"/><path stroke="#1000ff" d="M1483 631h6"/><path stroke="#1400ff" d="M1489 631h6"/><path stroke="#1800ff" d="M1495 631h6"/><path stroke="#1c00ff" d="M1501 631h6"/><path stroke="#2000ff" d="M1507 631h6"/><path stroke="#2400ff" d="M1513 631h6"/><path stroke="#2800ff" d="M1519 631h6"/><path stroke="#2c00ff" d="M1525 631h12"/><path stroke="#3000ff" d="M1537 631h6"/><path stroke="#3400ff" d="M1543 631h6"/><path stroke="#3800ff" d="M1549 631h6"/><path stroke="#3c00ff" d="M1555 631h6"/><path stroke="#4000ff" d="M1561 631h6"/><path stroke="#4400ff" d="M1567 631h6"/><path stroke="#4800ff" d="M1573 631h6"/><path stroke="#4c00ff" d="M1579 631h6"/><path stroke="#5000ff" d="M1585 631h6"/><path stroke="#5500ff" d="M1591 631h6"/><path stroke="#5900ff" d="M1597 631h6"/><path stroke="#5d00ff" d="M1603 631h6"/><path stroke="#6100ff" d="M1609 631h6"/><path stroke="#6500ff" d="M1615 631h6"/><path stroke="#6900ff" d="M1621 631h6"/><path stroke="#6d00ff" d="M1627 631h6"/><path stroke="#0000ff" d="M1435 637h30"/><path stroke="#0400ff" d="M1465 637h6"/><path stroke="#0800ff" d="M1471 637h6"/><path stroke="#0c00ff" d="M1477 637h6"/><path stroke="#1000ff" d="M1483 637h6"/><path stroke="#1400ff" d="M1489 637h6"/><path stroke="#1800ff" d="M1495 637h12"/><path stroke="#1c00ff" d="M1507 637h6"/><path stroke="#2000ff" d="M1513 637h6"/><path stroke="#2400ff" d="M1519 637h6"/><path stroke="#2800ff" d="M1525 637h6"/><path stroke="#2c00ff" d="M1531 637h6"/><path stroke="#3000ff" d="M1537 637h6"/><path stroke="#3400ff" d="M1543 637h6"/><path stroke="#3800ff" d="M1549 637h6"/><path stroke="#3c00ff" d="M1555 637h6"/><path stroke="#4000ff" d="M1561 637h6"/><path stroke="#4400ff" d="M1567 637h6"/><path stroke="#4800ff" d="M1573 637h6"/><path stroke="#4c00ff" d="M1579 637h6"/><path stroke="#5000ff" d="M1585 637h6"/><path stroke="#5500ff" d="M1591 637h6"/><path stroke="#5900ff" d="M1597 637h6"/><path stroke="#5d00ff" d="M1603 637h6"/><path stroke="#6100ff" d="M1609 637h6"/><path stroke="#6500ff" d="M1615 637h6"/><path stroke="#6900ff" d="M1621 637h6"/><path stroke="#0000ff" d="M1435 643h30"/><path stroke="#0400ff" d="M1465 643h6"/><path stroke="#0800ff" d="M1471 643h12"/><path stroke="#0c00ff" d="M1483 643h6"/><path stroke="#1000ff" d="M1489 643h6"/><path stroke="#1400ff" d="M1495 643h6"/><path stroke="#1800ff" d="M1501 643h6"/><path stroke="#1c00ff" d="M1507 643h6"/><path stroke="#2000ff" d="M1513 643h6"/><path stroke="#2400ff" d="M1519 643h6"/><path stroke="#2800ff" d="M1525 643h6"/><path stroke="#2c00ff" d="M1531 643h6"/><path stroke="#3000ff" d="M1537 643h6"/><path stroke="#3400ff" d="M1543 643h12"/><path stroke="#3800ff" d="M1555 643h6"/><path stroke="#3c00ff" d="M1561 643h6"/><path stroke="#4000ff" d="M1567 643h6"/><path stroke="#4400ff" d="M1573 643h6"/><path stroke="#4800ff" d="M1579 643h6"/><path stroke="#4c00ff" d="M1585 643h6"/><path stroke="#5000ff" d="M1591 643h6"/><path stroke="#5500ff" d="M1597 643h6"/><path stroke="#5900ff" d="M1603 643h6"/><path stroke="#5d00ff" d="M1609 643h6"/><path stroke="#6100ff" d="M1615 643h6"/><path stroke="#0000ff" d="M1441 649h30"/><path stroke="#0400ff" d="M1471 649h6"/><path stroke="#0800ff" d="M1477 649h6"/><path stroke="#0c00ff" d="M1483 649h6"/><path stroke="#1000ff" d="M1489 649h6"/><path stroke="#1400ff" d="M1495 649h6"/><path stroke="#1800ff" d="M1501 649h6"/><path stroke="#1c00ff" d="M1507 649h6"/><path stroke="#2000ff" d="M1513 649h6"/><path stroke="#2400ff" d="M1519 649h12"/><path stroke="#2800ff" d="M1531 649h6"/><path stroke="#2c00ff" d="M1537 649h6"/><path stroke="#3000ff" d="M1543 649h6"/><path stroke="#3400ff" d="M1549 649h6"/><path stroke="#3800ff" d="M1555 649h6"/><path stroke="#3c00ff" d="M1561 649h6"/><path stroke="#4000ff" d="M1567 649h6"/><path stroke="#4400ff" d="M1573 649h6"/><path stroke="#4800ff" d="M1579 649h6"/><path stroke="#4c00ff" d="M1585 649h6"/><path stroke="#5000ff" d="M1591 649h6"/><path stroke="#5500ff" d="M1597 649h12"/><path stroke="#5900ff" d="M1609 649h6"/><path stroke="#0000ff" d="M1447 655h24"/><path stroke="#0400ff" d="M1471 655h6"/><path stroke="#0800ff" d="M1477 655h6"/><path stroke="#0c00ff" d="M1483 655h6"/><path stroke="#1000ff" d="M1489 655h6"/><path stroke="#1400ff" d="M1495 655h6"/><path stroke="#1800ff" d="M1501 655h12"/><path stroke="#1c00ff" d="M1513 655h6"/><path stroke="#2000ff" d="M1519 655h6"/><path stroke="#2400ff" d="M1525 655h6"/><path stroke="#2800ff" d="M1531 655h6"/><path stroke="#2c00ff" d="M1537 655h6"/><path stroke="#3000ff" d="M1543 655h6"/><path stroke="#3400ff" d="M1549 655h6"/><path stroke="#3800ff" d="M1555 655h12"/><path stroke="#3c00ff" d="M1567 655h6"/><path stroke="#4000ff" d="M1573 655h6"/><path stroke="#4400ff" d="M1579 655h6"/><path stroke="#4800ff" d="M1585 655h6"/><path stroke="#4c00ff" d="M1591 655h6"/><path stroke="#5000ff" d="M1597 655h6"/><path stroke="#5500ff" d="M1603 655h6"/><path stroke="#0000ff" d="M1453 661h18"/><path stroke="#0400ff" d="M1471 661h6"/><path stroke="#0800ff" d="M1477 661h6"/><path stroke="#0c00ff" d="M1483 661h6"/><path stroke="#1000ff" d="M1489 661h12"/><path stroke="#1400ff" d="M1501 661h6"/><path stroke="#1800ff" d="M1507 661h6"/><path stroke="#1c00ff" d="M1513 661h6"/><path stroke="#2000ff" d="M1519 661h6"/><path stroke="#2400ff" d="M1525 661h6"/><path stroke="#2800ff" d="M1531 661h12"/><path stroke="#2c00ff" d="M1543 661h6"/><path stroke="#3000ff" d="M1549 661h6"/><path stroke="#3400ff" d="M1555 661h6"/><path stroke="#3800ff" d="M1561 661h6"/><path stroke="#3c00ff" d="M1567 661h6"/><path stroke="#4000ff" d="M1573 661h6"/><path stroke="#4400ff" d="M1579 661h6"/><path stroke="#4800ff" d="M1585 661h6"/><path stroke="#4c00ff" d="M1591 661h12"/><path stroke="#0000ff" d="M1459 667h12"/><path stroke="#0400ff" d="M1471 667h6"/><path stroke="#0800ff" d="M1477 667h12"/><path stroke="#0c00ff" d="M1489 667h6"/><path stroke="#1000ff" d="M1495 667h6"/><path stroke="#1400ff" d="M1501 667h6"/><path stroke="#1800ff" d="M1507 667h6"/><path stroke="#1c00ff" d="M1513 667h6"/><path stroke="#2000ff" d="M1519 667h12"/><path stroke="#2400ff" d="M1531 667h6"/><path stroke="#2800ff" d="M1537 667h6"/><path stroke="#2c00ff" d="M1543 667h6"/><path stroke="#3000ff" d="M1549 667h6"/><path stroke="#3400ff" d="M1555 667h6"/><path stroke="#3800ff" d="M1561 667h6"/><path stroke="#3c00ff" d="M1567 667h12"/><path stroke="#4000ff" d="M1579 667h6"/><path stroke="#4400ff" d="M1585 667h6"/><path stroke="#4800ff" d="M1591 667h6"/><path stroke="#0400ff" d="M1471 673h12"/><path stroke="#0800ff" d="M1483 673h6"/><path stroke="#0c00ff" d="M1489 673h6"/><path stroke="#1000ff" d="M1495 673h6"/><path stroke="#1400ff" d="M1501 673h6"/><path stroke="#1800ff" d="M1507 673h12"/><path stroke="#1c00ff" d="M1519 673h6"/><path stroke="#2000ff" d="M1525 673h6"/><path stroke="#2400ff" d="M1531 673h6"/><path stroke="#2800ff" d="M1537 673h6"/><path stroke="#2c00ff" d="M1543 673h6"/><path stroke="#3000ff" d="M1549 673h12"/><path stroke="#3400ff" d="M1561 673h6"/><path stroke="#3800ff" d="M1567 673h6"/><path stroke="#3c00ff" d="M1573 673h6"/><path stroke="#4000ff" d="M1579 673h6"/><path stroke="#4400ff" d="M1585 673h6"/><path stroke="#0400ff" d="M1477 679h6"/><path stroke="#0800ff" d="M1483 679h6"/><path stroke="#0c00ff" d="M1489 679h6"/><path stroke="#1000ff" d="M1495 679h12"/><path stroke="#1400ff" d="M1507 679h6"/><path stroke="#1800ff" d="M1513 679h6"/><path stroke="#1c00ff" d="M1519 679h6"/><path stroke="#2000ff" d="M1525 679h6"/><path stroke="#2400ff" d="M1531 679h12"/><path stroke="#2800ff" d="M1543 679h6"/><path stroke="#2c00ff" d="M1549 679h6"/><path stroke="#3000ff" d="M1555 679h6"/><path stroke="#3400ff" d="M1561 679h6"/><path stroke="#3800ff" d="M1567 679h6"/><path stroke="#3c00ff" d="M1573 679h12"/><path stroke="#0800ff" d="M1483 685h6"/><path stroke="#0c00ff" d="M1489 685h12"/><path stroke="#1000ff" d="M1501 685h6"/><path stroke="#1400ff" d="M1507 685h6"/><path stroke="#1800ff" d="M1513 685h6"/><path stroke="#1c00ff" d="M1519 685h12"/><path stroke="#2000ff" d="M1531 685h6"/><path stroke="#2400ff" d="M1537 685h6"/><path stroke="#2800ff" d="M1543 685h6"/><path stroke="#2c00ff" d="M1549 685h6"/><path stroke="#3000ff" d="M1555 685h12"/><path stroke="#3400ff" d="M1567 685h6"/><path stroke="#3800ff" d="M1573 685h6"/><path stroke="#0800ff" d="M1489 691h6"/><path stroke="#0c00ff" d="M1495 691h6"/><path stroke="#1000ff" d="M1501 691h6"/><path stroke="#1400ff" d="M1507 691h6"/><path stroke="#1800ff" d="M1513 691h12"/><path stroke="#1c00ff" d="M1525 691h6"/><path stroke="#2000ff" d="M1531 691h6"/><path stroke="#2400ff" d="M1537 691h6"/><path stroke="#2800ff" d="M1543 691h12"/><path stroke="#2c00ff" d="M1555 691h6"/><path stroke="#3000ff" d="M1561 691h6"/><path stroke="#3400ff" d="M1567 691h6"/><path stroke="#0c00ff" d="M1495 697h6"/><path stroke="#1000ff" d="M1501 697h12"/><path stroke="#1400ff" d="M1513 697h6"/><path stroke="#1800ff" d="M1519 697h6"/><path stroke="#1c00ff" d="M1525 697h6"/><path stroke="#2000ff" d="M1531 697h6"/><path stroke="#2400ff" d="M1537 697h12"/><path stroke="#2800ff" d="M1549 697h6"/><path stroke="#2c00ff" d="M1555 697h6"/><path stroke="#3000ff" d="M1561 697h6"/><path stroke="#1000ff" d="M1507 703h6"/><path stroke="#1400ff" d="M1513 703h6"/><path stroke="#1800ff" d="M1519 703h6"/><path stroke="#1c00ff" d="M1525 703h12"/><path stroke="#2000ff" d="M1537 703h6"/><path stroke="#2400ff" d="M1543 703h6"/><path stroke="#2800ff" d="M1549 703h6"/><path stroke="#2c00ff" d="M1555 703h6"/><path stroke="#1400ff" d="M1513 709h6"/><path stroke="#1800ff" d="M1519 709h12"/><path stroke="#1c00ff" d="M1531 709h6"/><path stroke="#2000ff" d="M1537 709h6"/><path stroke="#2400ff" d="M1543 709h6"/><path stroke="#2800ff" d="M1549 709h6"/><path stroke="#1400ff" d="M1519 715h6"/><path stroke="#1800ff" d="M1525 715h6"/><path stroke="#1c00ff" d="M1531 715h6"/><path stroke="#2000ff" d="M1537 715h12"/></g><path fill-rule="evenodd" fill="#000" opacity="0.4" d="M1200 150H1930V770H1200Z M1796.55 278.63L1366.59 235.12L1449.65 585.51Z"/></g></g>
<line x1="1259.7" y1="218.7" x2="1909.3" y2="218.7" stroke="#adadad" stroke-width="1.6"/>
<line x1="1909.3" y1="218.7" x2="1909.3" y2="718" stroke="#adadad" stroke-width="1.6"/>
<line x1="1259.7" y1="217.9" x2="1259.7" y2="724" stroke="#adadad" stroke-width="2"/>
<line x1="1253.7" y1="718" x2="1910.1" y2="718" stroke="#adadad" stroke-width="2"/>
<line x1="1253.7" y1="676.72" x2="1259.7" y2="676.72" stroke="#adadad" stroke-width="1.6"/>
<text x="1252.8" y="681.92" font-size="15" fill="#d4d4d4" text-anchor="end">0,05</text>
<line x1="1313.7" y1="718" x2="1313.7" y2="724" stroke="#adadad" stroke-width="1.6"/>
<text x="1313.7" y="740.3" font-size="15" fill="#d4d4d4" text-anchor="middle">0,05</text>
<line x1="1253.7" y1="635.14" x2="1259.7" y2="635.14" stroke="#adadad" stroke-width="1.6"/>
<text x="1252.8" y="640.34" font-size="15" fill="#d4d4d4" text-anchor="end">0,1</text>
<line x1="1367.7" y1="718" x2="1367.7" y2="724" stroke="#adadad" stroke-width="1.6"/>
<text x="1367.7" y="740.3" font-size="15" fill="#d4d4d4" text-anchor="middle">0,1</text>
<line x1="1253.7" y1="593.56" x2="1259.7" y2="593.56" stroke="#adadad" stroke-width="1.6"/>
<text x="1252.8" y="598.76" font-size="15" fill="#d4d4d4" text-anchor="end">0,15</text>
<line x1="1421.7" y1="718" x2="1421.7" y2="724" stroke="#adadad" stroke-width="1.6"/>
<text x="1421.7" y="740.3" font-size="15" fill="#d4d4d4" text-anchor="middle">0,15</text>
<line x1="1253.7" y1="551.98" x2="1259.7" y2="551.98" stroke="#adadad" stroke-width="1.6"/>
<text x="1252.8" y="557.18" font-size="15" fill="#d4d4d4" text-anchor="end">0,2</text>
<line x1="1475.7" y1="718" x2="1475.7" y2="724" stroke="#adadad" stroke-width="1.6"/>
<text x="1475.7" y="740.3" font-size="15" fill="#d4d4d4" text-anchor="middle">0,2</text>
<line x1="1253.7" y1="510.4" x2="1259.7" y2="510.4" stroke="#adadad" stroke-width="1.6"/>
<text x="1252.8" y="515.6" font-size="15" fill="#d4d4d4" text-anchor="end">0,25</text>
<line x1="1529.7" y1="718" x2="1529.7" y2="724" stroke="#adadad" stroke-width="1.6"/>
<text x="1529.7" y="740.3" font-size="15" fill="#d4d4d4" text-anchor="middle">0,25</text>
<line x1="1253.7" y1="468.82" x2="1259.7" y2="468.82" stroke="#adadad" stroke-width="1.6"/>
<text x="1252.8" y="474.02" font-size="15" fill="#d4d4d4" text-anchor="end">0,3</text>
<line x1="1583.7" y1="718" x2="1583.7" y2="724" stroke="#adadad" stroke-width="1.6"/>
<text x="1583.7" y="740.3" font-size="15" fill="#d4d4d4" text-anchor="middle">0,3</text>
<line x1="1253.7" y1="427.24" x2="1259.7" y2="427.24" stroke="#adadad" stroke-width="1.6"/>
<text x="1252.8" y="432.44" font-size="15" fill="#d4d4d4" text-anchor="end">0,35</text>
<line x1="1637.7" y1="718" x2="1637.7" y2="724" stroke="#adadad" stroke-width="1.6"/>
<text x="1637.7" y="740.3" font-size="15" fill="#d4d4d4" text-anchor="middle">0,35</text>
<line x1="1253.7" y1="385.66" x2="1259.7" y2="385.66" stroke="#adadad" stroke-width="1.6"/>
<text x="1252.8" y="390.86" font-size="15" fill="#d4d4d4" text-anchor="end">0,4</text>
<line x1="1691.7" y1="718" x2="1691.7" y2="724" stroke="#adadad" stroke-width="1.6"/>
<text x="1691.7" y="740.3" font-size="15" fill="#d4d4d4" text-anchor="middle">0,4</text>
<line x1="1253.7" y1="344.08" x2="1259.7" y2="344.08" stroke="#adadad" stroke-width="1.6"/>
<text x="1252.8" y="349.28" font-size="15" fill="#d4d4d4" text-anchor="end">0,45</text>
<line x1="1745.7" y1="718" x2="1745.7" y2="724" stroke="#adadad" stroke-width="1.6"/>
<text x="1745.7" y="740.3" font-size="15" fill="#d4d4d4" text-anchor="middle">0,45</text>
<line x1="1253.7" y1="302.5" x2="1259.7" y2="302.5" stroke="#adadad" stroke-width="1.6"/>
<text x="1252.8" y="307.7" font-size="15" fill="#d4d4d4" text-anchor="end">0,5</text>
<line x1="1799.7" y1="718" x2="1799.7" y2="724" stroke="#adadad" stroke-width="1.6"/>
<text x="1799.7" y="740.3" font-size="15" fill="#d4d4d4" text-anchor="middle">0,5</text>
<line x1="1253.7" y1="260.92" x2="1259.7" y2="260.92" stroke="#adadad" stroke-width="1.6"/>
<text x="1252.8" y="266.12" font-size="15" fill="#d4d4d4" text-anchor="end">0,55</text>
<line x1="1853.7" y1="718" x2="1853.7" y2="724" stroke="#adadad" stroke-width="1.6"/>
<text x="1853.7" y="740.3" font-size="15" fill="#d4d4d4" text-anchor="middle">0,55</text>
<text x="1252.8" y="723.5" font-size="15" fill="#d4d4d4" text-anchor="end">0</text>
<text x="1259.7" y="740.3" font-size="15" fill="#d4d4d4" text-anchor="middle">0</text>
<rect x="1359.7" y="229.1" width="13.8" height="13.8" fill="none" stroke="#fff" stroke-width="1.45"/>
<rect x="1374.5" y="242.8" width="13.8" height="13.8" fill="none" stroke="#fff" stroke-width="1.45"/>
<rect x="1389.9" y="255.2" width="13.8" height="13.8" fill="none" stroke="#fff" stroke-width="1.45"/>
<rect x="1409.1" y="272.1" width="13.8" height="13.8" fill="none" stroke="#fff" stroke-width="1.45"/>
<rect x="1434" y="292.6" width="13.8" height="13.8" fill="none" stroke="#fff" stroke-width="1.45"/>
<rect x="1474.4" y="239.8" width="13.8" height="13.8" fill="none" stroke="#fff" stroke-width="1.45"/>
<rect x="1472.8" y="253.6" width="13.8" height="13.8" fill="none" stroke="#fff" stroke-width="1.45"/>
<rect x="1471.4" y="267.8" width="13.8" height="13.8" fill="none" stroke="#fff" stroke-width="1.45"/>
<rect x="1470.1" y="282.6" width="13.8" height="13.8" fill="none" stroke="#fff" stroke-width="1.45"/>
<rect x="1468.6" y="299.6" width="13.8" height="13.8" fill="none" stroke="#fff" stroke-width="1.45"/>
<rect x="1383.1" y="333" width="13.8" height="13.8" fill="none" stroke="#fff" stroke-width="1.45"/>
<rect x="1400.5" y="330.1" width="13.8" height="13.8" fill="none" stroke="#fff" stroke-width="1.45"/>
<rect x="1416.2" y="326.6" width="13.8" height="13.8" fill="none" stroke="#fff" stroke-width="1.45"/>
<rect x="1432.9" y="325.8" width="13.8" height="13.8" fill="none" stroke="#fff" stroke-width="1.45"/>
<rect x="1449.4" y="323.6" width="13.8" height="13.8" fill="none" stroke="#fff" stroke-width="1.45"/>
<rect x="1789.4" y="271.9" width="13.8" height="13.8" fill="none" stroke="#fff" stroke-width="1.45"/>
<rect x="1706.4" y="284.5" width="13.8" height="13.8" fill="none" stroke="#fff" stroke-width="1.45"/>
<rect x="1644.1" y="293.9" width="13.8" height="13.8" fill="none" stroke="#fff" stroke-width="1.45"/>
<rect x="1579.2" y="303.7" width="13.8" height="13.8" fill="none" stroke="#fff" stroke-width="1.45"/>
<rect x="1522.5" y="312.1" width="13.8" height="13.8" fill="none" stroke="#fff" stroke-width="1.45"/>
<rect x="1485.6" y="335.4" width="13.8" height="13.8" fill="none" stroke="#fff" stroke-width="1.45"/>
<rect x="1507.3" y="354.7" width="13.8" height="13.8" fill="none" stroke="#fff" stroke-width="1.45"/>
<rect x="1533.5" y="377.1" width="13.8" height="13.8" fill="none" stroke="#fff" stroke-width="1.45"/>
<rect x="1562.8" y="402.1" width="13.8" height="13.8" fill="none" stroke="#fff" stroke-width="1.45"/>
<rect x="1604.2" y="436.5" width="13.8" height="13.8" fill="none" stroke="#fff" stroke-width="1.45"/>
<rect x="1462.7" y="350.7" width="13.8" height="13.8" fill="none" stroke="#fff" stroke-width="1.45"/>
<rect x="1460.2" y="387.7" width="13.8" height="13.8" fill="none" stroke="#fff" stroke-width="1.45"/>
<rect x="1456.3" y="432.1" width="13.8" height="13.8" fill="none" stroke="#fff" stroke-width="1.45"/>
<rect x="1450.9" y="490.6" width="13.8" height="13.8" fill="none" stroke="#fff" stroke-width="1.45"/>
<rect x="1442.1" y="578.7" width="13.8" height="13.8" fill="none" stroke="#fff" stroke-width="1.45"/>
<rect x="1466.35" y="320.75" width="12.7" height="12.7" fill="none" stroke="#000" stroke-width="1.6"/>
<circle cx="1366.3" cy="243.6" r="4.1" fill="#54be54" fill-opacity="0.88" stroke="#1c1c1c" stroke-width="1.3"/>
<circle cx="1368.8" cy="255.5" r="4.1" fill="#78be78" fill-opacity="0.88" stroke="#1c1c1c" stroke-width="1.3"/>
<circle cx="1396.7" cy="273.4" r="4.1" fill="#93be93" fill-opacity="0.88" stroke="#1c1c1c" stroke-width="1.3"/>
<circle cx="1431.1" cy="296.7" r="4.1" fill="#a9bea9" fill-opacity="0.88" stroke="#1c1c1c" stroke-width="1.3"/>
<circle cx="1366.3" cy="240" r="4.1" fill="#00c800" fill-opacity="0.88" stroke="#1c1c1c" stroke-width="1.3"/>
<circle cx="1485.1" cy="255.9" r="4.1" fill="#bebe54" fill-opacity="0.88" stroke="#1c1c1c" stroke-width="1.3"/>
<circle cx="1482.2" cy="270.3" r="4.1" fill="#bebe78" fill-opacity="0.88" stroke="#1c1c1c" stroke-width="1.3"/>
<circle cx="1479.9" cy="285.6" r="4.1" fill="#bebe93" fill-opacity="0.88" stroke="#1c1c1c" stroke-width="1.3"/>
<circle cx="1477" cy="303.4" r="4.1" fill="#bebea9" fill-opacity="0.88" stroke="#1c1c1c" stroke-width="1.3"/>
<circle cx="1485.1" cy="250.6" r="4.1" fill="#c8c800" fill-opacity="0.88" stroke="#1c1c1c" stroke-width="1.3"/>
<circle cx="1405" cy="334.1" r="4.1" fill="#54bebe" fill-opacity="0.88" stroke="#1c1c1c" stroke-width="1.3"/>
<circle cx="1427.4" cy="331.2" r="4.1" fill="#78bebe" fill-opacity="0.88" stroke="#1c1c1c" stroke-width="1.3"/>
<circle cx="1449" cy="327.4" r="4.1" fill="#93bebe" fill-opacity="0.88" stroke="#1c1c1c" stroke-width="1.3"/>
<circle cx="1384.1" cy="335.7" r="4.1" fill="#00c8c8" fill-opacity="0.88" stroke="#1c1c1c" stroke-width="1.3"/>
<circle cx="1762.6" cy="288.5" r="4.1" fill="#be5454" fill-opacity="0.88" stroke="#1c1c1c" stroke-width="1.3"/>
<circle cx="1693.7" cy="296.8" r="4.1" fill="#be7878" fill-opacity="0.88" stroke="#1c1c1c" stroke-width="1.3"/>
<circle cx="1620.9" cy="308" r="4.1" fill="#be9393" fill-opacity="0.88" stroke="#1c1c1c" stroke-width="1.3"/>
<circle cx="1550.2" cy="316.2" r="4.1" fill="#bea9a9" fill-opacity="0.88" stroke="#1c1c1c" stroke-width="1.3"/>
<circle cx="1793.6" cy="280.4" r="4.1" fill="#c80000" fill-opacity="0.88" stroke="#1c1c1c" stroke-width="1.3"/>
<circle cx="1500.4" cy="341.1" r="4.1" fill="#bea9be" fill-opacity="0.88" stroke="#1c1c1c" stroke-width="1.3"/>
<circle cx="1526.3" cy="360.6" r="4.1" fill="#be93be" fill-opacity="0.88" stroke="#1c1c1c" stroke-width="1.3"/>
<circle cx="1558.6" cy="380.8" r="4.1" fill="#be78be" fill-opacity="0.88" stroke="#1c1c1c" stroke-width="1.3"/>
<circle cx="1591.7" cy="404.7" r="4.1" fill="#be54be" fill-opacity="0.88" stroke="#1c1c1c" stroke-width="1.3"/>
<circle cx="1623.2" cy="424" r="4.1" fill="#c800c8" fill-opacity="0.88" stroke="#1c1c1c" stroke-width="1.3"/>
<circle cx="1468.7" cy="359" r="4.1" fill="#a9a9be" fill-opacity="0.88" stroke="#1c1c1c" stroke-width="1.3"/>
<circle cx="1463.1" cy="397.6" r="4.1" fill="#9393be" fill-opacity="0.88" stroke="#1c1c1c" stroke-width="1.3"/>
<circle cx="1455.8" cy="443.2" r="4.1" fill="#7878be" fill-opacity="0.88" stroke="#1c1c1c" stroke-width="1.3"/>
<circle cx="1446" cy="498.6" r="4.1" fill="#5454be" fill-opacity="0.88" stroke="#1c1c1c" stroke-width="1.3"/>
<circle cx="1434.1" cy="581.9" r="4.1" fill="#0000c8" fill-opacity="0.88" stroke="#1c1c1c" stroke-width="1.3"/>
<circle cx="1473.7" cy="326" r="4.2" fill="#fff" fill-opacity="1" stroke="#1c1c1c" stroke-width="1.3"/>
<circle cx="1471.6" cy="359" r="4.2" fill="#000" fill-opacity="1" stroke="#1c1c1c" stroke-width="1.3"/>
<rect x="1685.4" y="561.4" width="219.6" height="150.8" fill="#2b2b2b"/>
<rect x="1688.8" y="565" width="212.8" height="143.6" fill="url(#gIns)"/>
<g clip-path="url(#cIns)"><path d="M1680 566.900L1910 706.400V540H1680Z" fill="url(#gInsD)"/><path d="M1797.100 564.600L1910 640.200V540Z" fill="#232323"/></g>
<rect x="1688" y="564" width="214.4" height="145.6" fill="none" stroke="#9c9c9c" stroke-width="1.5"/>
<rect x="1788" y="629.3" width="13.4" height="13.4" fill="none" stroke="#fff" stroke-width="1.45"/>
<circle cx="1792" cy="683.1" r="4.2" fill="#c4c400" fill-opacity="1" stroke="#1c1c1c" stroke-width="1.3"/>
<text x="277.1" y="785.6" font-size="28" fill="#f0f0f0" textLength="236.6" lengthAdjust="spacingAndGlyphs">Avg dE2000: 3,28</text>
<text x="273.2" y="827" font-size="28" fill="#f0f0f0" textLength="243.9" lengthAdjust="spacingAndGlyphs">Max dE2000: 5,77</text>
<text x="240.9" y="875" font-size="27" fill="#f0f0f0" textLength="220.8" lengthAdjust="spacingAndGlyphs">Current Reading</text>
<text x="240.9" y="911.2" font-size="23.4" fill="#f0f0f0" textLength="103" lengthAdjust="spacingAndGlyphs">x: 0,4372</text>
<text x="399.4" y="911.2" font-size="23.4" fill="#f0f0f0" textLength="103.7" lengthAdjust="spacingAndGlyphs">y: 0,5195</text>
<text x="240.9" y="952.2" font-size="23.4" fill="#f0f0f0" textLength="96.9" lengthAdjust="spacingAndGlyphs">fL: 57,59</text>
<text x="240.9" y="987.3" font-size="23.4" fill="#f0f0f0" textLength="160.3" lengthAdjust="spacingAndGlyphs">cd/m²: 197,33</text>
<rect x="588.3" y="793.2" width="253.5" height="183.3" fill="#232323"/>
<line x1="582.3" y1="793.2" x2="588.3" y2="793.2" stroke="#adadad" stroke-width="1.6"/>
<text x="581.8" y="798.2" font-size="14.5" fill="#d4d4d4" text-anchor="end">120</text>
<line x1="588.3" y1="839.03" x2="841.8" y2="839.03" stroke="#8e8e8e" stroke-width="1.3"/>
<line x1="582.3" y1="839.03" x2="588.3" y2="839.03" stroke="#adadad" stroke-width="1.6"/>
<text x="581.8" y="844.03" font-size="14.5" fill="#d4d4d4" text-anchor="end">110</text>
<line x1="588.3" y1="884.85" x2="841.8" y2="884.85" stroke="#8e8e8e" stroke-width="1.3"/>
<line x1="582.3" y1="884.85" x2="588.3" y2="884.85" stroke="#adadad" stroke-width="1.6"/>
<text x="581.8" y="889.85" font-size="14.5" fill="#d4d4d4" text-anchor="end">100</text>
<line x1="588.3" y1="930.67" x2="841.8" y2="930.67" stroke="#8e8e8e" stroke-width="1.3"/>
<line x1="582.3" y1="930.67" x2="588.3" y2="930.67" stroke="#adadad" stroke-width="1.6"/>
<text x="581.8" y="935.67" font-size="14.5" fill="#d4d4d4" text-anchor="end">90</text>
<line x1="582.3" y1="976.5" x2="588.3" y2="976.5" stroke="#adadad" stroke-width="1.6"/>
<text x="581.8" y="981.5" font-size="14.5" fill="#d4d4d4" text-anchor="end">80</text>
<rect x="612.9" y="878.5" width="66.7" height="97.4" fill="url(#gR)" stroke="#000" stroke-width="1.2"/>
<rect x="680.2" y="888.7" width="67.3" height="87.2" fill="url(#gG)" stroke="#000" stroke-width="1.2"/>
<rect x="748.1" y="823.5" width="66.7" height="152.4" fill="url(#gB)" stroke="#000" stroke-width="1.2"/>
<line x1="588.3" y1="793.2" x2="841.8" y2="793.2" stroke="#adadad" stroke-width="1.6"/>
<line x1="841.8" y1="793.2" x2="841.8" y2="982.5" stroke="#adadad" stroke-width="1.6"/>
<line x1="588.3" y1="792.4" x2="588.3" y2="982.5" stroke="#adadad" stroke-width="2"/>
<line x1="582.3" y1="976.5" x2="842.6" y2="976.5" stroke="#adadad" stroke-width="2"/>
<text x="699.7" y="787.6" font-size="15" fill="#d4d4d4" text-anchor="middle" textLength="83.6" lengthAdjust="spacingAndGlyphs">RGB Balance</text>
<text x="715.4" y="992.6" font-size="14.5" fill="#d4d4d4" text-anchor="middle">100%</text>
<rect x="862.2" y="760.5" width="741.8" height="241.8" fill="#171717"/>
<rect x="864.3" y="762.5" width="737.7" height="28" fill="url(#gTH)"/>
<text x="1115.8" y="782.9" font-size="15" fill="#f4f4f4" text-anchor="middle" font-weight="bold" textLength="40.4" lengthAdjust="spacingAndGlyphs">20%</text>
<text x="1223.8" y="782.9" font-size="15" fill="#f4f4f4" text-anchor="middle" font-weight="bold" textLength="40.4" lengthAdjust="spacingAndGlyphs">40%</text>
<text x="1331.8" y="782.9" font-size="15" fill="#f4f4f4" text-anchor="middle" font-weight="bold" textLength="40.4" lengthAdjust="spacingAndGlyphs">60%</text>
<text x="1440" y="782.9" font-size="15" fill="#f4f4f4" text-anchor="middle" font-weight="bold" textLength="40.4" lengthAdjust="spacingAndGlyphs">80%</text>
<text x="1548" y="782.9" font-size="15" fill="#f4f4f4" text-anchor="middle" font-weight="bold" textLength="51.6" lengthAdjust="spacingAndGlyphs">100%</text>
<rect x="864.3" y="790.5" width="737.7" height="26.4" fill="#424242"/>
<text x="882.2" y="810" font-size="17.2" fill="#f6f6f6" font-weight="bold" textLength="87" lengthAdjust="spacingAndGlyphs">x: CIE31</text>
<text x="1068" y="810" font-size="17.2" fill="#f6f6f6" textLength="68.6" lengthAdjust="spacingAndGlyphs">0,3447</text>
<text x="1176" y="810" font-size="17.2" fill="#f6f6f6" textLength="68.6" lengthAdjust="spacingAndGlyphs">0,3722</text>
<text x="1284" y="810" font-size="17.2" fill="#f6f6f6" textLength="68.6" lengthAdjust="spacingAndGlyphs">0,3989</text>
<text x="1392.2" y="810" font-size="17.2" fill="#f6f6f6" textLength="68.6" lengthAdjust="spacingAndGlyphs">0,4285</text>
<text x="1500.2" y="810" font-size="17.2" fill="#f6f6f6" textLength="68.6" lengthAdjust="spacingAndGlyphs">0,4372</text>
<rect x="864.3" y="816.77" width="737.7" height="26.4" fill="#848484"/>
<text x="882.2" y="836.27" font-size="17.2" fill="#f6f6f6" font-weight="bold" textLength="87" lengthAdjust="spacingAndGlyphs">y: CIE31</text>
<text x="1068" y="836.27" font-size="17.2" fill="#f6f6f6" textLength="68.6" lengthAdjust="spacingAndGlyphs">0,3774</text>
<text x="1176" y="836.27" font-size="17.2" fill="#f6f6f6" textLength="68.6" lengthAdjust="spacingAndGlyphs">0,4199</text>
<text x="1284" y="836.27" font-size="17.2" fill="#f6f6f6" textLength="68.6" lengthAdjust="spacingAndGlyphs">0,4610</text>
<text x="1392.2" y="836.27" font-size="17.2" fill="#f6f6f6" textLength="68.6" lengthAdjust="spacingAndGlyphs">0,5064</text>
<text x="1500.2" y="836.27" font-size="17.2" fill="#f6f6f6" textLength="68.6" lengthAdjust="spacingAndGlyphs">0,5195</text>
<rect x="864.3" y="843.04" width="737.7" height="26.4" fill="#424242"/>
<text x="882.2" y="862.54" font-size="17.2" fill="#f6f6f6" font-weight="bold" textLength="13.7" lengthAdjust="spacingAndGlyphs">Y</text>
<text x="1068" y="862.54" font-size="17.2" fill="#f6f6f6" textLength="94" lengthAdjust="spacingAndGlyphs">208,0072</text>
<text x="1176" y="862.54" font-size="17.2" fill="#f6f6f6" textLength="94" lengthAdjust="spacingAndGlyphs">204,0331</text>
<text x="1284" y="862.54" font-size="17.2" fill="#f6f6f6" textLength="94" lengthAdjust="spacingAndGlyphs">200,9709</text>
<text x="1392.2" y="862.54" font-size="17.2" fill="#f6f6f6" textLength="94" lengthAdjust="spacingAndGlyphs">198,2371</text>
<text x="1500.2" y="862.54" font-size="17.2" fill="#f6f6f6" textLength="94" lengthAdjust="spacingAndGlyphs">197,3342</text>
<rect x="864.3" y="869.31" width="737.7" height="26.4" fill="#848484"/>
<text x="882.2" y="888.81" font-size="17.2" fill="#f6f6f6" font-weight="bold" textLength="159" lengthAdjust="spacingAndGlyphs">Target x:CIE31</text>
<text x="1068" y="888.81" font-size="17.2" fill="#f6f6f6" textLength="68.6" lengthAdjust="spacingAndGlyphs">0,3383</text>
<text x="1176" y="888.81" font-size="17.2" fill="#f6f6f6" textLength="68.6" lengthAdjust="spacingAndGlyphs">0,3614</text>
<text x="1284" y="888.81" font-size="17.2" fill="#f6f6f6" textLength="68.6" lengthAdjust="spacingAndGlyphs">0,3858</text>
<text x="1392.2" y="888.81" font-size="17.2" fill="#f6f6f6" textLength="68.6" lengthAdjust="spacingAndGlyphs">0,4107</text>
<text x="1500.2" y="888.81" font-size="17.2" fill="#f6f6f6" textLength="68.6" lengthAdjust="spacingAndGlyphs">0,4378</text>
<rect x="864.3" y="895.58" width="737.7" height="26.4" fill="#424242"/>
<text x="882.2" y="915.08" font-size="17.2" fill="#f6f6f6" font-weight="bold" textLength="159" lengthAdjust="spacingAndGlyphs">Target y:CIE31</text>
<text x="1068" y="915.08" font-size="17.2" fill="#f6f6f6" textLength="68.6" lengthAdjust="spacingAndGlyphs">0,3713</text>
<text x="1176" y="915.08" font-size="17.2" fill="#f6f6f6" textLength="68.6" lengthAdjust="spacingAndGlyphs">0,4096</text>
<text x="1284" y="915.08" font-size="17.2" fill="#f6f6f6" textLength="68.6" lengthAdjust="spacingAndGlyphs">0,4498</text>
<text x="1392.2" y="915.08" font-size="17.2" fill="#f6f6f6" textLength="68.6" lengthAdjust="spacingAndGlyphs">0,4910</text>
<text x="1500.2" y="915.08" font-size="17.2" fill="#f6f6f6" textLength="68.6" lengthAdjust="spacingAndGlyphs">0,5359</text>
<rect x="864.3" y="921.85" width="737.7" height="26.4" fill="#848484"/>
<text x="882.2" y="941.35" font-size="17.2" fill="#f6f6f6" font-weight="bold" textLength="92" lengthAdjust="spacingAndGlyphs">Target Y</text>
<text x="1068" y="941.35" font-size="17.2" fill="#f6f6f6" textLength="94" lengthAdjust="spacingAndGlyphs">208,6695</text>
<text x="1176" y="941.35" font-size="17.2" fill="#f6f6f6" textLength="94" lengthAdjust="spacingAndGlyphs">204,9882</text>
<text x="1284" y="941.35" font-size="17.2" fill="#f6f6f6" textLength="94" lengthAdjust="spacingAndGlyphs">201,8998</text>
<text x="1392.2" y="941.35" font-size="17.2" fill="#f6f6f6" textLength="94" lengthAdjust="spacingAndGlyphs">199,3304</text>
<text x="1500.2" y="941.35" font-size="17.2" fill="#f6f6f6" textLength="94" lengthAdjust="spacingAndGlyphs">197,0382</text>
<rect x="864.3" y="948.12" width="737.7" height="26.4" fill="#424242"/>
<text x="882.2" y="967.62" font-size="17.2" fill="#f6f6f6" font-weight="bold" textLength="91" lengthAdjust="spacingAndGlyphs">ΔE 2000</text>
<text x="1068" y="967.62" font-size="17.2" fill="#f6f6f6" textLength="68.6" lengthAdjust="spacingAndGlyphs">1,7389</text>
<text x="1176" y="967.62" font-size="17.2" fill="#f6f6f6" textLength="68.6" lengthAdjust="spacingAndGlyphs">2,2381</text>
<text x="1284" y="967.62" font-size="17.2" fill="#f6f6f6" textLength="68.6" lengthAdjust="spacingAndGlyphs">2,4254</text>
<text x="1392.2" y="967.62" font-size="17.2" fill="#f6f6f6" textLength="68.6" lengthAdjust="spacingAndGlyphs">3,3904</text>
<text x="1500.2" y="967.62" font-size="17.2" fill="#f6f6f6" textLength="68.6" lengthAdjust="spacingAndGlyphs">2,2547</text>
<rect x="864.3" y="974.39" width="737.7" height="26.4" fill="#848484"/>
<text x="882.2" y="993.89" font-size="17.2" fill="#f6f6f6" font-weight="bold" textLength="72.5" lengthAdjust="spacingAndGlyphs">ΔE ITP</text>
<text x="1068" y="993.89" font-size="17.2" fill="#f6f6f6" textLength="68.6" lengthAdjust="spacingAndGlyphs">3,7815</text>
<text x="1176" y="993.89" font-size="17.2" fill="#f6f6f6" textLength="68.6" lengthAdjust="spacingAndGlyphs">6,7526</text>
<text x="1284" y="993.89" font-size="17.2" fill="#f6f6f6" textLength="68.6" lengthAdjust="spacingAndGlyphs">9,0462</text>
<text x="1392.2" y="993.89" font-size="17.2" fill="#f6f6f6" textLength="81.5" lengthAdjust="spacingAndGlyphs">16,1495</text>
<text x="1500.2" y="993.89" font-size="17.2" fill="#f6f6f6" textLength="81.5" lengthAdjust="spacingAndGlyphs">12,6150</text>
<rect x="225" y="1076.8" width="1695" height="69.4" fill="url(#gBot)"/>
<rect x="226.3" y="1076.9" width="50.7" height="68.6" rx="4.5" fill="url(#gBtn)"/>
<circle cx="251.5" cy="1087.3" r="8.6" fill="url(#gCup)"/>
<path d="M246.7 1089.2H256.3L251.5 1084.4Z" fill="#2a2a2a"/>
<rect x="231.9" y="1106" width="39.6" height="34" rx="4.5" fill="#ffff00"/>
<rect x="283.8" y="1076.9" width="168.6" height="68.6" rx="4.5" fill="url(#gBtn)"/>
<rect x="289.5" y="1082.900" width="157.500" height="40" rx="4.500" fill="#c2c2a2" stroke="#8c8c70" stroke-width="1"/>
<text x="368.1" y="1140" font-size="11.2" fill="#333" text-anchor="middle" font-weight="bold" textLength="23" lengthAdjust="spacingAndGlyphs">20%</text>
<rect x="454.7" y="1076.9" width="168.6" height="68.6" rx="4.5" fill="url(#gBtn)"/>
<rect x="460.4" y="1082.900" width="157.500" height="40" rx="4.500" fill="#c2c284" stroke="#8c8c70" stroke-width="1"/>
<text x="539" y="1140" font-size="11.2" fill="#333" text-anchor="middle" font-weight="bold" textLength="23" lengthAdjust="spacingAndGlyphs">40%</text>
<rect x="625.6" y="1076.9" width="168.6" height="68.6" rx="4.5" fill="url(#gBtn)"/>
<rect x="631.3" y="1082.900" width="157.500" height="40" rx="4.500" fill="#c2c062" stroke="#8c8c70" stroke-width="1"/>
<text x="709.9" y="1140" font-size="11.2" fill="#333" text-anchor="middle" font-weight="bold" textLength="23" lengthAdjust="spacingAndGlyphs">60%</text>
<rect x="796.5" y="1076.9" width="168.6" height="68.6" rx="4.5" fill="url(#gBtn)"/>
<rect x="802.2" y="1082.900" width="157.500" height="40" rx="4.500" fill="#c0c040" stroke="#8c8c70" stroke-width="1"/>
<text x="880.8" y="1140" font-size="11.2" fill="#333" text-anchor="middle" font-weight="bold" textLength="23" lengthAdjust="spacingAndGlyphs">80%</text>
<rect x="967.4" y="1076.9" width="168.6" height="68.6" rx="4.5" fill="url(#gBtnS)"/>
<rect x="973.1" y="1082.900" width="157.500" height="40" rx="4.500" fill="#c4c000" stroke="#a8a400" stroke-width="1"/>
<text x="1051.7" y="1140" font-size="11.2" fill="#fff" text-anchor="middle" font-weight="bold" textLength="30" lengthAdjust="spacingAndGlyphs">100%</text>
<rect x="1557.4" y="1076.8" width="53.5" height="69.4" rx="4.5" fill="url(#gBtn)"/>
<line x1="1557.4" y1="1096.6" x2="1610.9" y2="1096.6" stroke="#555" stroke-width="1.2"/>
<line x1="1557.4" y1="1097.8" x2="1610.9" y2="1097.8" stroke="#9a9a9a" stroke-width="1"/>
<circle cx="1584.6" cy="1086.7" r="8.6" fill="url(#gCup)"/>
<path d="M1579.8 1088.6H1589.4L1584.6 1083.8Z" fill="#2a2a2a"/>
<rect x="1567.900" y="1105.800" width="31.500" height="31.500" rx="4.500" fill="url(#gStop)" stroke="#1e1e1e" stroke-width="2.600"/>
<rect x="1576.6" y="1113.9" width="15.4" height="15.4" fill="#000"/>
<path d="M1612.900 1110.100V1081.300Q1612.900 1076.800 1617.400 1076.800H1867.100V1110.100Z" fill="url(#gBtn2)"/>
<line x1="1664.4" y1="1076.8" x2="1664.4" y2="1110.1" stroke="#4e4e4e" stroke-width="1.2"/>
<line x1="1665.5" y1="1076.8" x2="1665.5" y2="1110.1" stroke="#a8a8a8" stroke-width="0.8"/>
<line x1="1715.2" y1="1076.8" x2="1715.2" y2="1110.1" stroke="#4e4e4e" stroke-width="1.2"/>
<line x1="1716.3" y1="1076.8" x2="1716.3" y2="1110.1" stroke="#a8a8a8" stroke-width="0.8"/>
<line x1="1765.3" y1="1076.8" x2="1765.3" y2="1110.1" stroke="#4e4e4e" stroke-width="1.2"/>
<line x1="1766.4" y1="1076.8" x2="1766.4" y2="1110.1" stroke="#a8a8a8" stroke-width="0.8"/>
<line x1="1816.2" y1="1076.8" x2="1816.2" y2="1110.1" stroke="#4e4e4e" stroke-width="1.2"/>
<line x1="1817.3" y1="1076.8" x2="1817.3" y2="1110.1" stroke="#a8a8a8" stroke-width="0.8"/>
<circle cx="1638.4" cy="1093.300" r="11" fill="url(#gIc)"/>
<circle cx="1689.9" cy="1093.300" r="11" fill="url(#gIc)"/>
<circle cx="1740.6" cy="1093.300" r="11" fill="url(#gIc)"/>
<circle cx="1791.1" cy="1093.300" r="11" fill="url(#gIc)"/>
<circle cx="1842" cy="1093.300" r="11" fill="url(#gIc)"/>
<rect x="1633.6" y="1088.5" width="9.6" height="9.6" fill="#2c2c2c"/>
<path d="M1686.400 1087.600V1099L1695.700 1093.300Z" fill="#2c2c2c"/>
<path d="M1736.800 1088H1734.600V1098.600H1736.800M1744.400 1088H1746.600V1098.600H1744.400" fill="none" stroke="#2c2c2c" stroke-width="1.700"/>
<path d="M1737.800 1093.300H1743.400" stroke="#2c2c2c" stroke-width="1.400" stroke-dasharray="1.400 0.700"/>
<path d="M1791.100 1093.300C1789.100 1090.300 1785.300 1089.900 1785.300 1093.300C1785.300 1096.700 1789.100 1096.300 1791.100 1093.300C1793.100 1090.300 1796.900 1089.900 1796.900 1093.300C1796.900 1096.700 1793.100 1096.300 1791.100 1093.300Z" fill="none" stroke="#2c2c2c" stroke-width="1.800"/>
<g fill="none" stroke="#2c2c2c" stroke-width="2.200"><path d="M1836.400 1092.300A5.700 5.700 0 0 1 1846.300 1089.600"/><path d="M1847.600 1094.300A5.700 5.700 0 0 1 1837.700 1097"/></g>
<path d="M1848.600 1086.600V1091.800H1843.400Z M1835.400 1100V1094.800H1840.600Z" fill="#2c2c2c"/>
<circle cx="1893.500" cy="1093.300" r="11" fill="url(#gDkBtn)"/>
<path d="M1612.900 1146.200V1116Q1612.900 1111.500 1617.400 1111.500H1913.700Q1918.200 1111.500 1918.200 1116V1146.200Z" fill="url(#gNav)"/>
<line x1="1612.9" y1="1112" x2="1918" y2="1112" stroke="#b4b4b4" stroke-width="0.9"/>
<line x1="1765.3" y1="1111.5" x2="1765.3" y2="1146.2" stroke="#505050" stroke-width="1.2"/>
<line x1="1766.4" y1="1111.5" x2="1766.4" y2="1146.2" stroke="#a8a8a8" stroke-width="0.8"/>
<circle cx="1646.900" cy="1128.300" r="11" fill="url(#gIc)"/>
<circle cx="1887.500" cy="1128.300" r="11" fill="url(#gIc)"/>
<path d="M1646.300 1123.800L1642.300 1128.300L1646.300 1132.800M1651.300 1123.800L1647.300 1128.300L1651.300 1132.800" fill="none" stroke="#3a3a3a" stroke-width="1.500"/>
<path d="M1883.100 1123.800L1887.100 1128.300L1883.100 1132.800M1888.100 1123.800L1892.100 1128.300L1888.100 1132.800" fill="none" stroke="#3a3a3a" stroke-width="1.500"/>
<text x="1678.6" y="1137.8" font-size="24" fill="#b8b8b8" textLength="56.4" lengthAdjust="spacingAndGlyphs">Back</text>
<text x="1677.6" y="1136.8" font-size="24" fill="#333" textLength="56.4" lengthAdjust="spacingAndGlyphs">Back</text>
<text x="1798.4" y="1137.8" font-size="24" fill="#b8b8b8" textLength="57.5" lengthAdjust="spacingAndGlyphs">Next</text>
<text x="1797.4" y="1136.8" font-size="24" fill="#333" textLength="57.5" lengthAdjust="spacingAndGlyphs">Next</text>
<rect x="1911" y="99" width="9" height="978" fill="url(#gEdge)"/>
<rect x="1917" y="62" width="3" height="37" fill="#1a1a1a"/>
<rect x="0" y="1145.4" width="1920" height="0.8" fill="#3c3c3c"/>
<rect x="0" y="1146.2" width="1920" height="1.8" fill="#cfd4b2"/>
</svg>
</body></html>
